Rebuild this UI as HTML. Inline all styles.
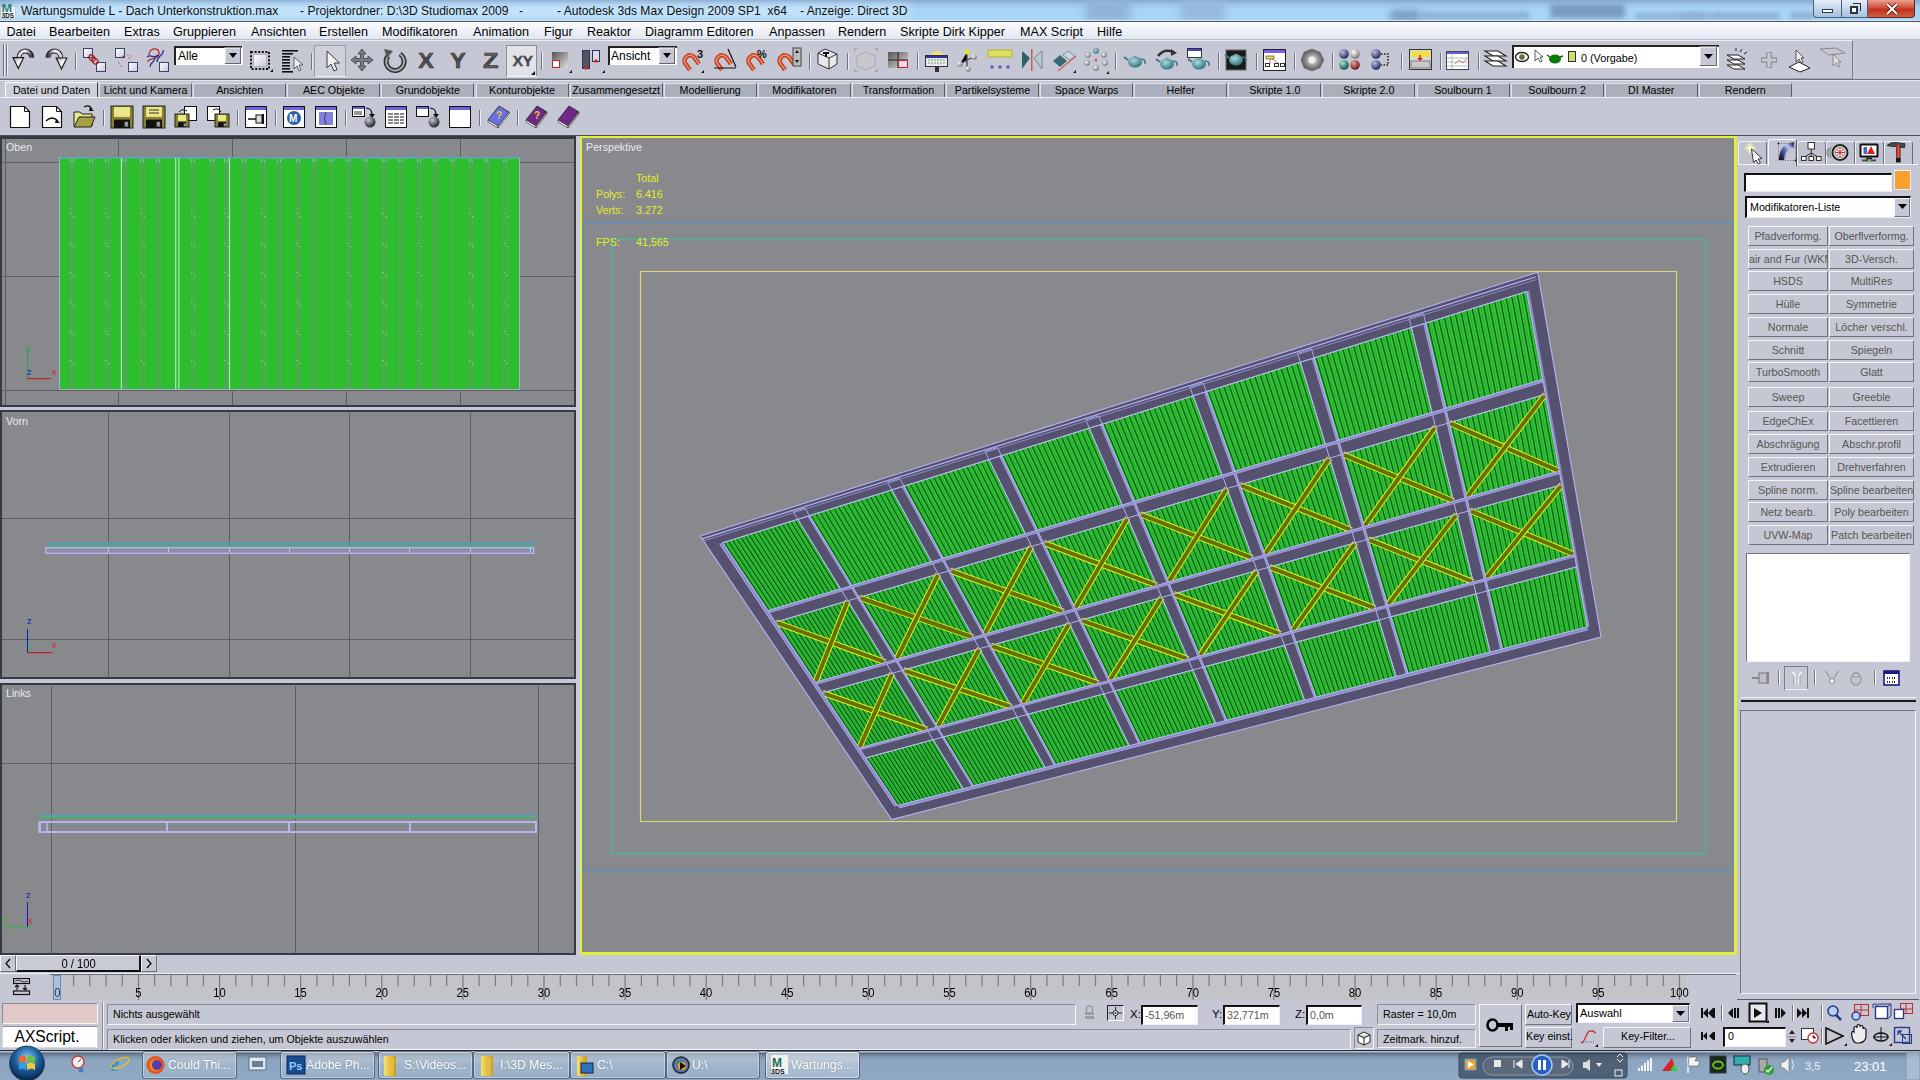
<!DOCTYPE html><html><head><meta charset="utf-8"><style>
*{margin:0;padding:0;box-sizing:border-box}
body{width:1920px;height:1080px;overflow:hidden;background:#c5c8d4;font-family:"Liberation Sans", sans-serif;position:relative}
.t{position:absolute;white-space:pre;line-height:1}
</style></head><body>
<div style="position:absolute;left:0px;top:0px;width:1920px;height:21px;background:linear-gradient(180deg,#84a8d0 0px,#9cc2e6 4px,#a8d4f6 9px,#a8d6f6 18px,#b0d4f0 21px);overflow:hidden;"><div style="position:absolute;left:1085px;top:0px;width:45px;height:21px;background:#8fb3d8;filter:blur(4px);border-radius:3px"></div><div style="position:absolute;left:1180px;top:0px;width:45px;height:21px;background:#95b8dc;filter:blur(4px);border-radius:3px"></div><div style="position:absolute;left:1390px;top:10px;width:30px;height:11px;background:#7d9fc4;filter:blur(3px);border-radius:3px"></div><div style="position:absolute;left:1420px;top:12px;width:110px;height:7px;background:#8aaed4;filter:blur(2.5px);border-radius:3px"></div><div style="position:absolute;left:1550px;top:4px;width:75px;height:14px;background:#7a9cc0;filter:blur(2.5px);border-radius:3px"></div><div style="position:absolute;left:1635px;top:13px;width:70px;height:6px;background:#8eb2d6;filter:blur(2px);border-radius:3px"></div><div style="position:absolute;left:1680px;top:13px;width:40px;height:6px;background:#8eb2d6;filter:blur(2px);border-radius:3px"></div><div style="position:absolute;left:1715px;top:13px;width:65px;height:6px;background:#8aaed4;filter:blur(2px);border-radius:3px"></div><div style="position:absolute;left:1790px;top:12px;width:25px;height:7px;background:#8eb2d6;filter:blur(2px);border-radius:3px"></div><div style="position:absolute;left:10px;top:5px;width:900px;height:12px;background:#cae6fa;filter:blur(5px);border-radius:3px"></div></div>
<div style="position:absolute;left:0px;top:19.5px;width:1920px;height:1px;background:#d4e4f4;"></div>
<div style="position:absolute;left:0px;top:20.5px;width:1920px;height:1px;background:#4a5668;"></div>
<div class="t" style="left:21px;top:4.91px;font-size:12.1px;color:#101010;">Wartungsmulde L - Dach Unterkonstruktion.max</div>
<div class="t" style="left:300px;top:4.91px;font-size:12.1px;color:#101010;">- Projektordner: D:\3D Studiomax 2009</div>
<div class="t" style="left:519px;top:4.91px;font-size:12.1px;color:#101010;">-</div>
<div class="t" style="left:557px;top:4.91px;font-size:12.1px;color:#101010;">- Autodesk 3ds Max Design 2009 SP1  x64</div>
<div class="t" style="left:800px;top:4.91px;font-size:12.1px;color:#101010;">- Anzeige: Direct 3D</div>
<svg style="position:absolute;left:0px;top:0px" width="20" height="20"><rect x="1" y="6.3" width="14.5" height="12" fill="#f4f6f6" stroke="#b8c0c8" stroke-width="0.6"/><text x="1.6" y="11.6" font-size="11.5" font-family="Liberation Sans" fill="#2a7a78" font-weight="bold" textLength="10.6" lengthAdjust="spacingAndGlyphs">M</text><text x="1.8" y="18" font-size="7" font-weight="bold" font-family="Liberation Sans" fill="#111" textLength="12.2" lengthAdjust="spacingAndGlyphs">3DS</text></svg>
<div style="position:absolute;left:1813px;top:0px;width:29px;height:18px;background:linear-gradient(#e4eef8,#c4d6ea 50%,#a8c0dc);border:1px solid #4a5f78;border-top:none;border-radius:0 0 0 4px;"></div>
<div style="position:absolute;left:1822px;top:9px;width:11px;height:4px;background:#fff;border:1px solid #2a3a4c;"></div>
<div style="position:absolute;left:1842px;top:0px;width:26px;height:18px;background:linear-gradient(#e4eef8,#c4d6ea 50%,#a8c0dc);border:1px solid #4a5f78;border-top:none;border-left:none;"></div>
<div style="position:absolute;left:1850px;top:6px;width:8px;height:8px;border:2px solid #2a3440;background:#fff;"></div>
<div style="position:absolute;left:1853px;top:3px;width:8px;height:8px;border:1px solid #2a3440;border-left:none;border-bottom:none;"></div>
<div style="position:absolute;left:1868px;top:0px;width:47px;height:18px;background:linear-gradient(#e8a090,#d05038 45%,#c03020 55%,#d06040);border:1px solid #5a2a28;border-top:none;border-left:none;border-radius:0 0 4px 0;"></div>
<svg style="position:absolute;left:1885px;top:3px" width="14" height="12"><path d="M2,1 L12,11 M12,1 L2,11" stroke="#3a1010" stroke-width="3.4"/><path d="M2,1 L12,11 M12,1 L2,11" stroke="#fff" stroke-width="2"/></svg>
<div style="position:absolute;left:0px;top:21.5px;width:1920px;height:18.5px;background:linear-gradient(#fcfdfe,#eef1f7 50%,#dfe4ee);"></div>
<div style="position:absolute;left:0px;top:39px;width:1920px;height:1px;background:#b8bcc8;"></div>
<div class="t" style="left:6.5px;top:25.86px;font-size:12.6px;color:#000;">Datei</div>
<div class="t" style="left:49px;top:25.86px;font-size:12.6px;color:#000;">Bearbeiten</div>
<div class="t" style="left:124px;top:25.86px;font-size:12.6px;color:#000;">Extras</div>
<div class="t" style="left:173px;top:25.86px;font-size:12.6px;color:#000;">Gruppieren</div>
<div class="t" style="left:251px;top:25.86px;font-size:12.6px;color:#000;">Ansichten</div>
<div class="t" style="left:319px;top:25.86px;font-size:12.6px;color:#000;">Erstellen</div>
<div class="t" style="left:382px;top:25.86px;font-size:12.6px;color:#000;">Modifikatoren</div>
<div class="t" style="left:473px;top:25.86px;font-size:12.6px;color:#000;">Animation</div>
<div class="t" style="left:544px;top:25.86px;font-size:12.6px;color:#000;">Figur</div>
<div class="t" style="left:587px;top:25.86px;font-size:12.6px;color:#000;">Reaktor</div>
<div class="t" style="left:645px;top:25.86px;font-size:12.6px;color:#000;">Diagramm Editoren</div>
<div class="t" style="left:769px;top:25.86px;font-size:12.6px;color:#000;">Anpassen</div>
<div class="t" style="left:838px;top:25.86px;font-size:12.6px;color:#000;">Rendern</div>
<div class="t" style="left:900px;top:25.86px;font-size:12.6px;color:#000;">Skripte Dirk Kipper</div>
<div class="t" style="left:1020px;top:25.86px;font-size:12.6px;color:#000;">MAX Script</div>
<div class="t" style="left:1097px;top:25.86px;font-size:12.6px;color:#000;">Hilfe</div>
<div style="position:absolute;left:0px;top:40px;width:1853px;height:39px;background:#c5c8d4;border-top:1px solid #eceef4;border-right:1px solid #7a7e88;border-bottom:1px solid #a0a4ae;"></div>
<div style="position:absolute;left:0px;top:79px;width:1920px;height:1px;background:#6a6e78;"></div>
<div style="position:absolute;left:0px;top:80px;width:1920px;height:1px;background:#e4e6ee;"></div>
<div style="position:absolute;left:5.0px;top:82px;width:93px;height:17px;background:#cdd0db;border-top:1px solid #fafbff;border-left:1px solid #fafbff;border-right:1px solid #3a3e48;"></div>
<div class="t" style="left:5.0px;top:85.22px;width:93px;text-align:center;font-size:10.7px;color:#000;">Datei und Daten</div>
<div style="position:absolute;left:99.1px;top:83px;width:93px;height:15px;background:#abafbb;border-top:1px solid #dfe2ea;border-left:1px solid #dfe2ea;border-right:1px solid #5a5e68;"></div>
<div class="t" style="left:99.1px;top:85.22px;width:93px;text-align:center;font-size:10.7px;color:#000;">Licht und Kamera</div>
<div style="position:absolute;left:193.2px;top:83px;width:93px;height:15px;background:#abafbb;border-top:1px solid #dfe2ea;border-left:1px solid #dfe2ea;border-right:1px solid #5a5e68;"></div>
<div class="t" style="left:193.2px;top:85.22px;width:93px;text-align:center;font-size:10.7px;color:#000;">Ansichten</div>
<div style="position:absolute;left:287.29999999999995px;top:83px;width:93px;height:15px;background:#abafbb;border-top:1px solid #dfe2ea;border-left:1px solid #dfe2ea;border-right:1px solid #5a5e68;"></div>
<div class="t" style="left:287.29999999999995px;top:85.22px;width:93px;text-align:center;font-size:10.7px;color:#000;">AEC Objekte</div>
<div style="position:absolute;left:381.4px;top:83px;width:93px;height:15px;background:#abafbb;border-top:1px solid #dfe2ea;border-left:1px solid #dfe2ea;border-right:1px solid #5a5e68;"></div>
<div class="t" style="left:381.4px;top:85.22px;width:93px;text-align:center;font-size:10.7px;color:#000;">Grundobjekte</div>
<div style="position:absolute;left:475.5px;top:83px;width:93px;height:15px;background:#abafbb;border-top:1px solid #dfe2ea;border-left:1px solid #dfe2ea;border-right:1px solid #5a5e68;"></div>
<div class="t" style="left:475.5px;top:85.22px;width:93px;text-align:center;font-size:10.7px;color:#000;">Konturobjekte</div>
<div style="position:absolute;left:569.5999999999999px;top:83px;width:93px;height:15px;background:#abafbb;border-top:1px solid #dfe2ea;border-left:1px solid #dfe2ea;border-right:1px solid #5a5e68;"></div>
<div class="t" style="left:569.5999999999999px;top:85.22px;width:93px;text-align:center;font-size:10.7px;color:#000;">Zusammengesetzt</div>
<div style="position:absolute;left:663.6999999999999px;top:83px;width:93px;height:15px;background:#abafbb;border-top:1px solid #dfe2ea;border-left:1px solid #dfe2ea;border-right:1px solid #5a5e68;"></div>
<div class="t" style="left:663.6999999999999px;top:85.22px;width:93px;text-align:center;font-size:10.7px;color:#000;">Modellierung</div>
<div style="position:absolute;left:757.8px;top:83px;width:93px;height:15px;background:#abafbb;border-top:1px solid #dfe2ea;border-left:1px solid #dfe2ea;border-right:1px solid #5a5e68;"></div>
<div class="t" style="left:757.8px;top:85.22px;width:93px;text-align:center;font-size:10.7px;color:#000;">Modifikatoren</div>
<div style="position:absolute;left:851.9px;top:83px;width:93px;height:15px;background:#abafbb;border-top:1px solid #dfe2ea;border-left:1px solid #dfe2ea;border-right:1px solid #5a5e68;"></div>
<div class="t" style="left:851.9px;top:85.22px;width:93px;text-align:center;font-size:10.7px;color:#000;">Transformation</div>
<div style="position:absolute;left:946.0px;top:83px;width:93px;height:15px;background:#abafbb;border-top:1px solid #dfe2ea;border-left:1px solid #dfe2ea;border-right:1px solid #5a5e68;"></div>
<div class="t" style="left:946.0px;top:85.22px;width:93px;text-align:center;font-size:10.7px;color:#000;">Partikelsysteme</div>
<div style="position:absolute;left:1040.1px;top:83px;width:93px;height:15px;background:#abafbb;border-top:1px solid #dfe2ea;border-left:1px solid #dfe2ea;border-right:1px solid #5a5e68;"></div>
<div class="t" style="left:1040.1px;top:85.22px;width:93px;text-align:center;font-size:10.7px;color:#000;">Space Warps</div>
<div style="position:absolute;left:1134.1999999999998px;top:83px;width:93px;height:15px;background:#abafbb;border-top:1px solid #dfe2ea;border-left:1px solid #dfe2ea;border-right:1px solid #5a5e68;"></div>
<div class="t" style="left:1134.1999999999998px;top:85.22px;width:93px;text-align:center;font-size:10.7px;color:#000;">Helfer</div>
<div style="position:absolute;left:1228.3px;top:83px;width:93px;height:15px;background:#abafbb;border-top:1px solid #dfe2ea;border-left:1px solid #dfe2ea;border-right:1px solid #5a5e68;"></div>
<div class="t" style="left:1228.3px;top:85.22px;width:93px;text-align:center;font-size:10.7px;color:#000;">Skripte 1.0</div>
<div style="position:absolute;left:1322.3999999999999px;top:83px;width:93px;height:15px;background:#abafbb;border-top:1px solid #dfe2ea;border-left:1px solid #dfe2ea;border-right:1px solid #5a5e68;"></div>
<div class="t" style="left:1322.3999999999999px;top:85.22px;width:93px;text-align:center;font-size:10.7px;color:#000;">Skripte 2.0</div>
<div style="position:absolute;left:1416.5px;top:83px;width:93px;height:15px;background:#abafbb;border-top:1px solid #dfe2ea;border-left:1px solid #dfe2ea;border-right:1px solid #5a5e68;"></div>
<div class="t" style="left:1416.5px;top:85.22px;width:93px;text-align:center;font-size:10.7px;color:#000;">Soulbourn 1</div>
<div style="position:absolute;left:1510.6px;top:83px;width:93px;height:15px;background:#abafbb;border-top:1px solid #dfe2ea;border-left:1px solid #dfe2ea;border-right:1px solid #5a5e68;"></div>
<div class="t" style="left:1510.6px;top:85.22px;width:93px;text-align:center;font-size:10.7px;color:#000;">Soulbourn 2</div>
<div style="position:absolute;left:1604.6999999999998px;top:83px;width:93px;height:15px;background:#abafbb;border-top:1px solid #dfe2ea;border-left:1px solid #dfe2ea;border-right:1px solid #5a5e68;"></div>
<div class="t" style="left:1604.6999999999998px;top:85.22px;width:93px;text-align:center;font-size:10.7px;color:#000;">DI Master</div>
<div style="position:absolute;left:1698.8px;top:83px;width:93px;height:15px;background:#abafbb;border-top:1px solid #dfe2ea;border-left:1px solid #dfe2ea;border-right:1px solid #5a5e68;"></div>
<div class="t" style="left:1698.8px;top:85.22px;width:93px;text-align:center;font-size:10.7px;color:#000;">Rendern</div>
<div style="position:absolute;left:0px;top:97px;width:1920px;height:1px;background:#f0f2f6;"></div>
<div style="position:absolute;left:0px;top:98px;width:1920px;height:37px;background:#c5c8d4;"></div>
<div style="position:absolute;left:0px;top:135px;width:1920px;height:1px;background:#4a4e58;"></div>
<svg style="position:absolute;left:0;top:0" width="1920" height="140"><defs>
<linearGradient id="gmet" x1="0" y1="0" x2="0" y2="1"><stop offset="0" stop-color="#f4f4f6"/><stop offset="0.5" stop-color="#9a9ca2"/><stop offset="1" stop-color="#3a3c40"/></linearGradient>
<linearGradient id="gmet2" x1="0" y1="0" x2="1" y2="1"><stop offset="0" stop-color="#555"/><stop offset="1" stop-color="#ddd"/></linearGradient>
<linearGradient id="gbox" x1="0" y1="0" x2="1" y2="1"><stop offset="0" stop-color="#fff"/><stop offset="1" stop-color="#c8c8d8"/></linearGradient>
<radialGradient id="gtea" cx="0.4" cy="0.35" r="0.7"><stop offset="0" stop-color="#a8dcdc"/><stop offset="1" stop-color="#2e6a78"/></radialGradient>
<radialGradient id="gsph" cx="0.35" cy="0.3" r="0.75"><stop offset="0" stop-color="#c8c8d0"/><stop offset="1" stop-color="#1e1e28"/></radialGradient>
<radialGradient id="gblu" cx="0.35" cy="0.3" r="0.75"><stop offset="0" stop-color="#b8c0e8"/><stop offset="1" stop-color="#1a2050"/></radialGradient>
<radialGradient id="gwht" cx="0.35" cy="0.3" r="0.75"><stop offset="0" stop-color="#fff"/><stop offset="1" stop-color="#707070"/></radialGradient>
<radialGradient id="ggrn" cx="0.35" cy="0.3" r="0.75"><stop offset="0" stop-color="#a0e0d0"/><stop offset="1" stop-color="#0a4838"/></radialGradient>
<radialGradient id="gred" cx="0.35" cy="0.3" r="0.75"><stop offset="0" stop-color="#f0a0a0"/><stop offset="1" stop-color="#601010"/></radialGradient>
<radialGradient id="gap" cx="0.5" cy="0.5" r="0.5"><stop offset="0" stop-color="#fff"/><stop offset="0.5" stop-color="#999"/><stop offset="1" stop-color="#555"/></radialGradient>
</defs><rect x="3" y="44" width="1" height="32" fill="#6a6e78"/><rect x="4" y="44" width="1" height="32" fill="#eef"/><rect x="6" y="44" width="1" height="32" fill="#6a6e78"/><rect x="7" y="44" width="1" height="32" fill="#eef"/><linearGradient id="garc" x1="0" y1="0" x2="1" y2="0"><stop offset="0" stop-color="#d8d8dc"/><stop offset="0.5" stop-color="#f4f4f6"/><stop offset="1" stop-color="#3a3a40"/></linearGradient><linearGradient id="garc2" x1="0" y1="0" x2="1" y2="0"><stop offset="0" stop-color="#3a3a40"/><stop offset="0.5" stop-color="#f4f4f6"/><stop offset="1" stop-color="#d8d8dc"/></linearGradient><linearGradient id="ghead" x1="0" y1="0" x2="1" y2="1"><stop offset="0" stop-color="#9a9aa0"/><stop offset="0.5" stop-color="#fafafa"/><stop offset="1" stop-color="#b0b0b4"/></linearGradient><path d="M31.8,57.5 A6.4,6.4 0 0 0 19,57.5" stroke="#151515" stroke-width="5" fill="none"/><path d="M31.8,57.5 A6.4,6.4 0 0 0 19,57.5" stroke="url(#garc)" stroke-width="3" fill="none"/><polygon points="13,57.6 23.6,57.6 18.3,68.6" fill="url(#ghead)" stroke="#151515" stroke-width="1.1"/><path d="M48,57.5 A6.4,6.4 0 0 1 60.8,57.5" stroke="#151515" stroke-width="5" fill="none"/><path d="M48,57.5 A6.4,6.4 0 0 1 60.8,57.5" stroke="url(#garc2)" stroke-width="3" fill="none"/><polygon points="56.2,58 66.8,58 61.5,69" fill="url(#ghead)" stroke="#151515" stroke-width="1.1"/><rect x="75" y="53" width="1" height="17" fill="#70747e"/><rect x="76" y="53" width="1" height="17" fill="#eceef4"/><rect x="83.5" y="48.5" width="9" height="9" fill="url(#gbox)" stroke="#3a4070"/><rect x="96.5" y="62.5" width="9" height="9" fill="url(#gbox)" stroke="#3a4070"/><ellipse cx="92" cy="58" rx="2.5" ry="3.5" transform="rotate(-45 92 58)" fill="none" stroke="#b02020" stroke-width="1.3"/><ellipse cx="95" cy="61" rx="2.5" ry="3.5" transform="rotate(-45 95 61)" fill="none" stroke="#b02020" stroke-width="1.3"/><rect x="115.5" y="48.5" width="9" height="9" fill="url(#gbox)" stroke="#3a4070"/><rect x="128.5" y="62.5" width="9" height="9" fill="url(#gbox)" stroke="#3a4070"/><path d="M122,58 l2,-2" stroke="#b02020" stroke-width="1.5"/><circle cx="119" cy="63" r="0.7" fill="#c05050"/><circle cx="121" cy="66" r="0.7" fill="#c05050"/><circle cx="128" cy="55" r="0.7" fill="#c05050"/><circle cx="131" cy="56" r="0.7" fill="#c05050"/><circle cx="129" cy="58" r="0.7" fill="#c05050"/><path d="M149,55 C149,47 160,47 159,54 C158,60 147,58 148,62" stroke="#c02020" stroke-width="1.3" fill="none"/><path d="M147,57 C151,53 154,60 158,55 M150,67 C150,62 155,62 155,58 M157,62 C157,55 165,55 163,50" stroke="#2030a0" stroke-width="1.3" fill="none"/><rect x="159.5" y="62.5" width="9" height="9" fill="url(#gbox)" stroke="#3a4070"/><rect x="174" y="46" width="69" height="19" fill="#fff"/><rect x="174" y="46" width="69" height="2" fill="#222"/><rect x="174" y="46" width="2" height="19" fill="#222"/><rect x="242" y="46" width="1" height="19" fill="#eef"/><rect x="225" y="48" width="16" height="16" fill="#c5c8d4" stroke="#fff"/><rect x="240" y="48" width="1" height="16" fill="#666"/><rect x="225" y="63" width="16" height="1" fill="#666"/><polygon points="229,53 237,53 233,58" fill="#000"/><text x="178" y="60" font-size="12" font-family="Liberation Sans" fill="#000">Alle</text><rect x="251" y="52" width="18" height="17" fill="none" stroke="#111" stroke-width="2" stroke-dasharray="2,1.6"/><rect x="253.5" y="54.5" width="13" height="12" fill="url(#gbox)" stroke="#b0b0c0"/><polygon points="273,72 270,72 273,69" fill="#111"/><rect x="282" y="50" width="16" height="1.6" fill="#111"/><rect x="282" y="53" width="11" height="1.6" fill="#111"/><rect x="282" y="56" width="8" height="1.6" fill="#111"/><rect x="282" y="59" width="8" height="1.6" fill="#111"/><rect x="282" y="62" width="8" height="1.6" fill="#111"/><rect x="282" y="65" width="8" height="1.6" fill="#111"/><rect x="282" y="68" width="8" height="1.6" fill="#111"/><rect x="282" y="71" width="11" height="1.6" fill="#111"/><path d="M294,57 l0,12 3,-3 2,5 2,-1 -2,-5 4,0 z" fill="#eee" stroke="#444" stroke-width="0.8"/><rect x="311" y="53" width="1" height="17" fill="#70747e"/><rect x="312" y="53" width="1" height="17" fill="#eceef4"/><rect x="314.5" y="45.5" width="31" height="31" fill="#cfd1da" stroke="#9a9ea8"/><rect x="315" y="76" width="31" height="1" fill="#f4f4f8"/><path d="M327,51 l0,17 4,-4 3,7 3,-1.5 -3,-6.5 5.5,0 z" fill="#f2f2f4" stroke="#3a3a40" stroke-width="1"/><path d="M362,49 l4,5 h-2.5 v4.5 h4.5 v-2.5 l5,4 -5,4 v-2.5 h-4.5 v4.5 h2.5 l-4,5 -4,-5 h2.5 v-4.5 h-4.5 v2.5 l-5,-4 5,-4 v2.5 h4.5 v-4.5 h-2.5 z" fill="#7a7c82" stroke="#3a3c40" stroke-width="0.8"/><path d="M388,56 A9,9 0 1 0 400,54" stroke="#2e3034" stroke-width="5" fill="none"/><path d="M388,56 A9,9 0 1 0 400,54" stroke="#a8aab0" stroke-width="2" fill="none"/><polygon points="384,49 393,51 387,58" fill="#555"/><linearGradient id="gxyz" x1="0" y1="0" x2="0" y2="1"><stop offset="0" stop-color="#8a8c92"/><stop offset="0.45" stop-color="#44464c"/><stop offset="1" stop-color="#6a6c72"/></linearGradient><text x="418.3" y="67.7" font-size="22.4" font-weight="bold" font-family="Liberation Sans" fill="url(#gxyz)" stroke="#2a2a2e" stroke-width="0.6" textLength="15.4" lengthAdjust="spacingAndGlyphs">X</text><text x="450.3" y="67.7" font-size="22.4" font-weight="bold" font-family="Liberation Sans" fill="url(#gxyz)" stroke="#2a2a2e" stroke-width="0.6" textLength="15.4" lengthAdjust="spacingAndGlyphs">Y</text><text x="483" y="67.7" font-size="22.4" font-weight="bold" font-family="Liberation Sans" fill="url(#gxyz)" stroke="#2a2a2e" stroke-width="0.6" textLength="15.4" lengthAdjust="spacingAndGlyphs">Z</text><rect x="506.5" y="45.5" width="30" height="31" fill="#e2e3e9" stroke="#8a8e98"/><rect x="507" y="76" width="30" height="1" fill="#f8f8fc"/><text x="512.7" y="66" font-size="15" font-weight="bold" font-family="Liberation Sans" fill="url(#gxyz)" stroke="#2a2a2e" stroke-width="0.4" textLength="20.3" lengthAdjust="spacingAndGlyphs">XY</text><polygon points="535,75 531,75 535,71" fill="#111"/><rect x="541" y="53" width="1" height="17" fill="#70747e"/><rect x="542" y="53" width="1" height="17" fill="#eceef4"/><rect x="552" y="52" width="16" height="16" fill="url(#gmet2)"/><rect x="552.5" y="60.5" width="7" height="7" fill="#fff" stroke="#d02020"/><polygon points="572,73 569,73 572,70" fill="#111"/><rect x="582.5" y="50.5" width="7" height="18" fill="#555" stroke="#2a3070"/><circle cx="586" cy="68" r="1.8" fill="#e02020"/><rect x="592.5" y="50.5" width="7" height="11" fill="#ddd" stroke="#2a3070"/><circle cx="596" cy="61" r="1.8" fill="#e02020"/><polygon points="605,73 602,73 605,70" fill="#111"/><rect x="608" y="46" width="69" height="19" fill="#fff"/><rect x="608" y="46" width="69" height="2" fill="#222"/><rect x="608" y="46" width="2" height="19" fill="#222"/><rect x="659" y="48" width="16" height="16" fill="#c5c8d4" stroke="#fff"/><rect x="674" y="48" width="1" height="16" fill="#666"/><rect x="659" y="63" width="16" height="1" fill="#666"/><polygon points="663,53 671,53 667,58" fill="#000"/><text x="611" y="60" font-size="12" font-family="Liberation Sans" fill="#000">Ansicht</text><path d="M690,70 L685,63 A5.5,5.5 0 0 1 694,57 L699,64" stroke="#c84020" stroke-width="4.5" fill="none" stroke-linecap="butt"/><path d="M690,70 L685,63 A5.5,5.5 0 0 1 694,57 L699,64" stroke="#f0a080" stroke-width="1.2" fill="none"/><text x="697" y="58" font-size="11" font-weight="bold" font-family="Liberation Sans" fill="#111">3</text><polygon points="704,73 701,73 704,70" fill="#111"/><path d="M722,70 L717,63 A5.5,5.5 0 0 1 726,57 L731,64" stroke="#c84020" stroke-width="4.5" fill="none" stroke-linecap="butt"/><path d="M722,70 L717,63 A5.5,5.5 0 0 1 726,57 L731,64" stroke="#f0a080" stroke-width="1.2" fill="none"/><path d="M714,68 h22 M728,49 l8,18" stroke="#111" stroke-width="1.2"/><path d="M754,70 L749,63 A5.5,5.5 0 0 1 758,57 L763,64" stroke="#c84020" stroke-width="4.5" fill="none" stroke-linecap="butt"/><path d="M754,70 L749,63 A5.5,5.5 0 0 1 758,57 L763,64" stroke="#f0a080" stroke-width="1.2" fill="none"/><text x="757" y="58" font-size="11" font-weight="bold" font-family="Liberation Sans" fill="#111">%</text><path d="M785,70 L780,63 A5.5,5.5 0 0 1 789,57 L794,64" stroke="#c84020" stroke-width="4.5" fill="none" stroke-linecap="butt"/><path d="M785,70 L780,63 A5.5,5.5 0 0 1 789,57 L794,64" stroke="#f0a080" stroke-width="1.2" fill="none"/><rect x="793" y="48" width="8" height="18" fill="#bbb" stroke="#444"/><polygon points="795,53 799,53 797,50" fill="#111"/><polygon points="795,60 799,60 797,63" fill="#111"/><rect x="809" y="53" width="1" height="17" fill="#70747e"/><rect x="810" y="53" width="1" height="17" fill="#eceef4"/><path d="M818,53 l7,-4 l12,5 v10 l-8,5 l-11,-5 z" fill="#e8e8ec" stroke="#333"/><path d="M818,53 l11,5 l8,-4 M829,58 v11" stroke="#333" fill="none"/><path d="M823,53 h6 M826,53 v4" stroke="#111" stroke-width="2"/><rect x="847" y="53" width="1" height="17" fill="#70747e"/><rect x="848" y="53" width="1" height="17" fill="#eceef4"/><path d="M857,56 l9,-4 l9,4 v10 l-9,4 l-9,-4 z" fill="#c8c8cc" stroke="#a8a8b0"/><polygon points="854,48 858,48 854,52" fill="#aaa"/><polygon points="878,48 874,48 878,52" fill="#aaa"/><polygon points="854,72 858,72 854,68" fill="#aaa"/><polygon points="878,72 874,72 878,68" fill="#aaa"/><rect x="888" y="52" width="20" height="16" fill="url(#gmet2)"/><path d="M898,52 v16 M888,60 h20" stroke="#222"/><rect x="898.5" y="60.5" width="9" height="7" fill="#e0e0f0" stroke="#d02020"/><rect x="917" y="53" width="1" height="17" fill="#70747e"/><rect x="918" y="53" width="1" height="17" fill="#eceef4"/><ellipse cx="937" cy="55" rx="6" ry="4" fill="#f0e080"/><rect x="925.5" y="55.5" width="22" height="11" fill="#e8e8f0" stroke="#333"/><rect x="926" y="56" width="21" height="2" fill="#3030a0"/><path d="M928,60 h17 M928,63 h17" stroke="#6a6" stroke-dasharray="2,1"/><rect x="935" y="67" width="4" height="5" fill="#333"/><path d="M967,52 v8 l-7,4 M967,60 l7,-3 M967,60 v9" stroke="#444" stroke-width="1.3"/><circle cx="967" cy="52" r="2.5" fill="#e8e020"/><circle cx="960" cy="64" r="2.8" fill="url(#gwht)"/><circle cx="974" cy="57" r="2.8" fill="url(#gwht)"/><circle cx="968" cy="69" r="2.8" fill="url(#gwht)"/><rect x="988" y="50" width="24" height="7" fill="#e0e060" stroke="#b0b040"/><circle cx="992" cy="67" r="1.8" fill="#6060c0"/><circle cx="1000" cy="67" r="1.8" fill="#6060c0"/><circle cx="1008" cy="67" r="1.8" fill="#6060c0"/><polygon points="1022,51 1030,58 1022,69" fill="#2e6068"/><polygon points="1042,51 1034,58 1042,69" fill="#b8c8d0" stroke="#406070" stroke-width="0.6"/><rect x="1031" y="49" width="1.5" height="22" fill="#c06060"/><polygon points="1053,61 1060,55 1067,61 1060,67" fill="#3a6a70"/><polygon points="1063,55 1068,51 1075,56 1070,60" fill="#c8d8e0" stroke="#507080" stroke-width="0.6"/><path d="M1058,71 l18,-15" stroke="#d06060" stroke-width="1.2"/><polygon points="1076,73 1073,73 1076,70" fill="#111"/><circle cx="1096" cy="51" r="2.8" fill="url(#gtea)" stroke="#888" stroke-width="0.4"/><circle cx="1088" cy="55" r="2.8" fill="url(#gwht)" stroke="#888" stroke-width="0.4"/><circle cx="1104" cy="55" r="2.8" fill="url(#gwht)" stroke="#888" stroke-width="0.4"/><circle cx="1087" cy="63" r="2.8" fill="url(#gwht)" stroke="#888" stroke-width="0.4"/><circle cx="1105" cy="63" r="2.8" fill="url(#gwht)" stroke="#888" stroke-width="0.4"/><circle cx="1096" cy="68" r="2.8" fill="url(#gwht)" stroke="#888" stroke-width="0.4"/><circle cx="1096" cy="60" r="1.5" fill="#d06060"/><polygon points="1109,74 1106,74 1109,71" fill="#111"/><rect x="1115" y="53" width="1" height="17" fill="#70747e"/><rect x="1116" y="53" width="1" height="17" fill="#eceef4"/><ellipse cx="1135" cy="62" rx="7" ry="5.5" fill="url(#gtea)"/><path d="M1128,60 l-4,-3" stroke="#3a7a88" stroke-width="2"/><path d="M1141,59 q5,0 4,5" stroke="#3a7a88" stroke-width="1.6" fill="none"/><ellipse cx="1135" cy="57" rx="2" ry="1.2" fill="#6aa8b0"/><ellipse cx="1167" cy="64" rx="7" ry="5.5" fill="url(#gtea)"/><path d="M1160,62 l-4,-3" stroke="#3a7a88" stroke-width="2"/><path d="M1173,61 q5,0 4,5" stroke="#3a7a88" stroke-width="1.6" fill="none"/><ellipse cx="1167" cy="59" rx="2" ry="1.2" fill="#6aa8b0"/><path d="M1158,56 q6,-8 15,-4" stroke="#333" stroke-width="2.5" fill="none"/><polygon points="1171,49 1177,53 1171,56" fill="#333"/><rect x="1187.5" y="48.5" width="14" height="9" fill="#fff" stroke="#333"/><rect x="1188" y="49" width="13" height="2" fill="#4040c0"/><ellipse cx="1199" cy="64" rx="7" ry="5.5" fill="url(#gtea)"/><path d="M1192,62 l-4,-3" stroke="#3a7a88" stroke-width="2"/><path d="M1205,61 q5,0 4,5" stroke="#3a7a88" stroke-width="1.6" fill="none"/><ellipse cx="1199" cy="59" rx="2" ry="1.2" fill="#6aa8b0"/><rect x="1218" y="53" width="1" height="17" fill="#70747e"/><rect x="1219" y="53" width="1" height="17" fill="#eceef4"/><rect x="1226" y="50" width="20" height="20" fill="#1a1a1a" stroke="#666"/><ellipse cx="1236" cy="60" rx="7" ry="5.5" fill="url(#gtea)" transform="scale(1)"/><path d="M1229,58 l-4,-3" stroke="#3a7a88" stroke-width="2"/><path d="M1242,57 q5,0 4,5" stroke="#3a7a88" stroke-width="1.6" fill="none"/><ellipse cx="1236" cy="55" rx="2" ry="1.2" fill="#6aa8b0"/><rect x="1256" y="53" width="1" height="17" fill="#70747e"/><rect x="1257" y="53" width="1" height="17" fill="#eceef4"/><rect x="1263.5" y="49.5" width="22" height="21" fill="#fff" stroke="#222"/><rect x="1264" y="50" width="21" height="3" fill="#7a60e0"/><rect x="1266" y="56" width="8" height="3" fill="#e8e040" stroke="#333" stroke-width="0.6"/><path d="M1270,59 v4 M1272,59 l6,4" stroke="#a06060" stroke-width="0.8"/><rect x="1265.5" y="63.5" width="4" height="3" fill="none" stroke="#333"/><rect x="1274.5" y="63.5" width="4" height="3" fill="none" stroke="#333"/><rect x="1280.5" y="63.5" width="4" height="3" fill="none" stroke="#333"/><rect x="1294" y="53" width="1" height="17" fill="#70747e"/><rect x="1295" y="53" width="1" height="17" fill="#eceef4"/><polygon points="1312,49 1320,52 1324,60 1320,68 1312,71 1304,68 1301,60 1304,52" fill="url(#gap)" stroke="#777" stroke-width="0.6"/><circle cx="1312" cy="60" r="3.5" fill="#eee"/><rect x="1332" y="53" width="1" height="17" fill="#70747e"/><rect x="1333" y="53" width="1" height="17" fill="#eceef4"/><circle cx="1344" cy="54" r="4.8" fill="url(#gblu)"/><circle cx="1355" cy="54" r="4.8" fill="url(#gwht)"/><circle cx="1344" cy="65" r="4.8" fill="url(#ggrn)"/><circle cx="1355" cy="65" r="4.8" fill="url(#gred)"/><circle cx="1376" cy="54" r="4.8" fill="url(#gblu)"/><circle cx="1376" cy="65" r="4.8" fill="url(#gblu)"/><path d="M1381,54 h7 v11 h-7" stroke="#222" stroke-width="1.6" stroke-dasharray="1.6,1.4" fill="none"/><rect x="1401" y="53" width="1" height="17" fill="#70747e"/><rect x="1402" y="53" width="1" height="17" fill="#eceef4"/><rect x="1409.5" y="49.5" width="22" height="20" fill="#d8d8dc" stroke="#333"/><rect x="1411" y="51" width="19" height="6" fill="#f0e040"/><rect x="1411" y="61" width="19" height="7" fill="#c8c8cc" stroke="#444" stroke-width="0.6"/><path d="M1420,55 v4" stroke="#d02020" stroke-width="1.5"/><polygon points="1417,58 1423,58 1420,61" fill="#d02020"/><rect x="1440" y="53" width="1" height="17" fill="#70747e"/><rect x="1441" y="53" width="1" height="17" fill="#eceef4"/><rect x="1446.5" y="51.5" width="22" height="18" fill="#fff" stroke="#445"/><rect x="1447" y="52" width="21" height="2" fill="#6060d0"/><path d="M1447,58 h21 M1447,62 h21 M1447,66 h21 M1452,54 v15" stroke="#8aa" stroke-width="0.7"/><path d="M1455,64 l4,-4 l4,3 l4,-5" stroke="#d05050" stroke-width="0.8" fill="none"/><rect x="1478" y="53" width="1" height="17" fill="#70747e"/><rect x="1479" y="53" width="1" height="17" fill="#eceef4"/><polygon points="1485,51 1498,51 1506,56 1493,56" fill="#fff" stroke="#222" stroke-width="1.1" transform="translate(0,0)"/><polygon points="1485,56 1498,56 1506,61 1493,61" fill="#fff" stroke="#222" stroke-width="1.1" transform="translate(0,0)"/><polygon points="1485,61 1498,61 1506,66 1493,66" fill="#fff" stroke="#222" stroke-width="1.1" transform="translate(0,0)"/><rect x="1512" y="45" width="207" height="23" fill="#fff"/><rect x="1512" y="45" width="207" height="2" fill="#222"/><rect x="1512" y="45" width="2" height="23" fill="#222"/><rect x="1700" y="47" width="17" height="19" fill="#c5c8d4" stroke="#fff"/><rect x="1716" y="47" width="1" height="19" fill="#666"/><rect x="1700" y="65" width="17" height="1" fill="#666"/><polygon points="1704,54 1713,54 1708.5,59" fill="#000"/><ellipse cx="1522" cy="57" rx="6.5" ry="4.5" fill="#fff" stroke="#222" stroke-width="1.4"/><circle cx="1522" cy="57" r="2.8" fill="#6a6a40"/><path d="M1535,50 v11 l3,-3 2,4 2,-1 -2,-4 3,0 z" fill="#fff" stroke="#333" stroke-width="0.8"/><ellipse cx="1555" cy="59" rx="6" ry="4.5" fill="#0a7a0a"/><path d="M1550,57 l-3,-2 M1560,57 l3,-1" stroke="#0a6a0a" stroke-width="1.5"/><rect x="1568.5" y="51.5" width="7" height="10" fill="#c8e070" stroke="#333"/><text x="1581" y="61.5" font-size="10.8" font-family="Liberation Sans" fill="#000">0 (Vorgabe)</text><polygon points="1727,55 1738,55 1745,59 1734,59" fill="#fff" stroke="#222" stroke-width="1"/><polygon points="1727,60 1738,60 1745,64 1734,64" fill="#fff" stroke="#222" stroke-width="1"/><polygon points="1727,65 1738,65 1745,69 1734,69" fill="#fff" stroke="#222" stroke-width="1"/><path d="M1740,52 l2,-3 M1744,54 l3,-2 M1736,51 l0,-3" stroke="#222"/><path d="M1761,60 h16 M1769,52 v16" stroke="#8a8c94" stroke-width="5.5"/><path d="M1761.8,60 h14.4 M1769,52.8 v14.4" stroke="#c8cad2" stroke-width="3.2"/><polygon points="1789,67 1799,62 1810,68 1800,72" fill="#fff" stroke="#222"/><path d="M1796,50 v12 l3,-3 2,4 2,-1 -2,-4 3,0 z" fill="#eee" stroke="#333" stroke-width="0.8"/><polygon points="1820,49 1836,48 1845,53 1829,55" fill="none" stroke="#888"/><path d="M1833,54 v12 l3,-3 2,4 2,-1 -2,-4 3,0 z" fill="#ddd" stroke="#777" stroke-width="0.8"/><path d="M10.5,106.5 h14 l5,5 v16 h-19 z" fill="#fff" stroke="#111" stroke-width="1.2"/><path d="M24.5,106.5 v5 h5" fill="none" stroke="#111"/><path d="M42.5,106.5 h14 l5,5 v16 h-19 z" fill="#fff" stroke="#111" stroke-width="1.2"/><path d="M56.5,106.5 v5 h5" fill="none" stroke="#111"/><path d="M46,121 q6,-6 12,0" stroke="#111" stroke-width="1.2" fill="none"/><polygon points="56,119 60,123 55,123" fill="#111"/><path d="M74,112 h6 l2,2 h10 v12 h-18 z" fill="#e8e490" stroke="#222"/><path d="M74,127 l5,-10 h16 l-4,10 z" fill="#a8a040" stroke="#222"/><path d="M84,107 q5,-3 8,2" stroke="#111" stroke-width="1.2" fill="none"/><polygon points="90,107 94,111 89,111" fill="#111"/><rect x="103" y="110" width="1" height="16" fill="#70747e"/><rect x="104" y="110" width="1" height="16" fill="#eceef4"/><rect x="111" y="106" width="22" height="22" fill="#8a8230" stroke="#222"/><rect x="114" y="107" width="16" height="9.9" fill="#ece68a"/><rect x="114" y="119.6" width="16" height="8.4" fill="#111"/><rect x="124.6" y="121.8" width="3.5" height="4.8" fill="#999"/><rect x="143" y="106" width="22" height="22" fill="#8a8230" stroke="#222"/><rect x="146" y="107" width="16" height="9.9" fill="#ece68a"/><rect x="146" y="119.6" width="16" height="8.4" fill="#111"/><rect x="156.6" y="121.8" width="3.5" height="4.8" fill="#999"/><path d="M149,110 h10 M149,113 h10" stroke="#333"/><rect x="184.5" y="106.5" width="12" height="14" fill="#fff" stroke="#111"/><path d="M179,112 q3,-4 8,-1" stroke="#111" fill="none"/><rect x="175" y="114" width="14" height="13" fill="#8a8230" stroke="#222"/><rect x="178" y="115" width="8" height="5.9" fill="#ece68a"/><rect x="178" y="122.1" width="8" height="4.9" fill="#111"/><rect x="183.7" y="123.4" width="2.2" height="2.9" fill="#999"/><rect x="207.5" y="106.5" width="12" height="14" fill="#fff" stroke="#111"/><path d="M213,110 q5,-3 8,2" stroke="#111" fill="none"/><rect x="215" y="114" width="14" height="13" fill="#8a8230" stroke="#222"/><rect x="218" y="115" width="8" height="5.9" fill="#ece68a"/><rect x="218" y="122.1" width="8" height="4.9" fill="#111"/><rect x="223.7" y="123.4" width="2.2" height="2.9" fill="#999"/><rect x="237" y="110" width="1" height="16" fill="#70747e"/><rect x="238" y="110" width="1" height="16" fill="#eceef4"/><rect x="245.5" y="106.5" width="21" height="21" fill="#fff" stroke="#111"/><rect x="246" y="107" width="20" height="3" fill="#7060e0"/><path d="M248,119 h8" stroke="#111" stroke-width="1.5"/><rect x="256" y="115" width="6" height="8" fill="#ddd" stroke="#111"/><rect x="262" y="114" width="2" height="10" fill="#111"/><rect x="275" y="110" width="1" height="16" fill="#70747e"/><rect x="276" y="110" width="1" height="16" fill="#eceef4"/><rect x="283.5" y="106.5" width="21" height="21" fill="#fff" stroke="#111"/><rect x="284" y="107" width="20" height="3" fill="#7060e0"/><circle cx="294" cy="118" r="7" fill="#2a60a8"/><text x="289" y="122" font-size="10" font-weight="bold" font-family="Liberation Sans" fill="#fff">M</text><rect x="315.5" y="106.5" width="21" height="21" fill="#fff" stroke="#111"/><rect x="316" y="107" width="20" height="3" fill="#7060e0"/><rect x="319" y="112" width="14" height="13" fill="#8080e0"/><path d="M326,112 q-3,6 0,13" stroke="#444" fill="none"/><rect x="345" y="110" width="1" height="16" fill="#70747e"/><rect x="346" y="110" width="1" height="16" fill="#eceef4"/><rect x="352.5" y="106.5" width="12" height="10" fill="#fff" stroke="#111"/><rect x="353" y="107" width="11" height="2" fill="#7060e0"/><path d="M354,112 h8 M354,114 h8" stroke="#333"/><path d="M366,108 q6,0 6,7" stroke="#111" stroke-width="1.2" fill="none"/><polygon points="369,114 375,114 372,118" fill="#111"/><circle cx="370" cy="122" r="5.5" fill="url(#gsph)"/><rect x="385.5" y="106.5" width="21" height="21" fill="#fff" stroke="#111"/><rect x="386" y="107" width="20" height="3" fill="#7060e0"/><path d="M388,114 h16 M388,117 h16 M388,120 h16 M388,123 h16" stroke="#111" stroke-dasharray="5,1"/><rect x="416.5" y="106.5" width="12" height="10" fill="#fff" stroke="#111"/><rect x="417" y="107" width="11" height="2" fill="#7060e0"/><path d="M430,108 q6,0 6,7" stroke="#111" stroke-width="1.2" fill="none"/><polygon points="433,114 439,114 436,118" fill="#111"/><circle cx="434" cy="122" r="5.5" fill="url(#gsph)"/><rect x="449.5" y="106.5" width="21" height="21" fill="#fff" stroke="#111"/><rect x="450" y="107" width="20" height="3" fill="#7060e0"/><rect x="479" y="110" width="1" height="16" fill="#70747e"/><rect x="480" y="110" width="1" height="16" fill="#eceef4"/><polygon points="488,120 499,106 509,112 498,126" fill="#6a70e8" stroke="#222" stroke-width="0.8"/><polygon points="488,120 498,126 498,128 488,122" fill="#fff" stroke="#222" stroke-width="0.6"/><polygon points="498,126 509,112 509,114 498,128" fill="#ddd" stroke="#222" stroke-width="0.6"/><text x="496" y="119" font-size="10" font-weight="bold" font-family="Liberation Sans" fill="#e8d020">?</text><rect x="517" y="110" width="1" height="16" fill="#70747e"/><rect x="518" y="110" width="1" height="16" fill="#eceef4"/><polygon points="526,120 537,106 547,112 536,126" fill="#702888" stroke="#222" stroke-width="0.8"/><polygon points="526,120 536,126 536,128 526,122" fill="#fff" stroke="#222" stroke-width="0.6"/><polygon points="536,126 547,112 547,114 536,128" fill="#ddd" stroke="#222" stroke-width="0.6"/><text x="534" y="119" font-size="10" font-weight="bold" font-family="Liberation Sans" fill="#e8d020">?</text><polygon points="558,120 569,106 579,112 568,126" fill="#702888" stroke="#222" stroke-width="0.8"/><polygon points="558,120 568,126 568,128 558,122" fill="#fff" stroke="#222" stroke-width="0.6"/><polygon points="568,126 579,112 579,114 568,128" fill="#ddd" stroke="#222" stroke-width="0.6"/></svg>
<div style="position:absolute;left:0px;top:136px;width:576px;height:271px;background:#88898d;border:2px solid #363a44;border-top:3px solid #363a44;"></div>
<svg style="position:absolute;left:0;top:0" width="580" height="960"><rect x="5" y="139" width="1" height="266" fill="#5d5e60"/><rect x="118" y="139" width="1" height="266" fill="#5d5e60"/><rect x="232" y="139" width="1" height="266" fill="#5d5e60"/><rect x="346" y="139" width="1" height="266" fill="#5d5e60"/><rect x="460" y="139" width="1" height="266" fill="#5d5e60"/><rect x="2" y="162" width="572" height="1" fill="#5d5e60"/><rect x="2" y="276" width="572" height="1" fill="#5d5e60"/><rect x="2" y="390" width="572" height="1" fill="#5d5e60"/><rect x="59.5" y="157.5" width="460" height="232" fill="#2dbe2d" stroke="#a8b0e0" stroke-width="1"/><rect x="60" y="157" width="460" height="1.5" fill="#58a8d0"/><rect x="70.0" y="158" width="1.2" height="231" fill="#6a9a70"/><rect x="73.1" y="158" width="1.2" height="231" fill="#6a9a70"/><rect x="89.1" y="158" width="1.2" height="231" fill="#6a9a70"/><rect x="92.2" y="158" width="1.2" height="231" fill="#6a9a70"/><rect x="105.0" y="158" width="1.2" height="231" fill="#6a9a70"/><rect x="108.1" y="158" width="1.2" height="231" fill="#6a9a70"/><rect x="122.5" y="158" width="1.2" height="231" fill="#6a9a70"/><rect x="125.6" y="158" width="1.2" height="231" fill="#6a9a70"/><rect x="140.3" y="158" width="1.2" height="231" fill="#6a9a70"/><rect x="143.4" y="158" width="1.2" height="231" fill="#6a9a70"/><rect x="156.2" y="158" width="1.2" height="231" fill="#6a9a70"/><rect x="159.3" y="158" width="1.2" height="231" fill="#6a9a70"/><rect x="190.9" y="158" width="1.2" height="231" fill="#6a9a70"/><rect x="194.0" y="158" width="1.2" height="231" fill="#6a9a70"/><rect x="210.3" y="158" width="1.2" height="231" fill="#6a9a70"/><rect x="213.4" y="158" width="1.2" height="231" fill="#6a9a70"/><rect x="224.1" y="158" width="1.2" height="231" fill="#6a9a70"/><rect x="227.2" y="158" width="1.2" height="231" fill="#6a9a70"/><rect x="242.1" y="158" width="1.2" height="231" fill="#6a9a70"/><rect x="245.2" y="158" width="1.2" height="231" fill="#6a9a70"/><rect x="260.9" y="158" width="1.2" height="231" fill="#6a9a70"/><rect x="264.0" y="158" width="1.2" height="231" fill="#6a9a70"/><rect x="277.1" y="158" width="1.2" height="231" fill="#6a9a70"/><rect x="280.2" y="158" width="1.2" height="231" fill="#6a9a70"/><rect x="296.2" y="158" width="1.2" height="231" fill="#6a9a70"/><rect x="299.3" y="158" width="1.2" height="231" fill="#6a9a70"/><rect x="312.5" y="158" width="1.2" height="231" fill="#6a9a70"/><rect x="315.6" y="158" width="1.2" height="231" fill="#6a9a70"/><rect x="346.5" y="158" width="1.2" height="231" fill="#6a9a70"/><rect x="349.6" y="158" width="1.2" height="231" fill="#6a9a70"/><rect x="363.4" y="158" width="1.2" height="231" fill="#6a9a70"/><rect x="366.5" y="158" width="1.2" height="231" fill="#6a9a70"/><rect x="382.4" y="158" width="1.2" height="231" fill="#6a9a70"/><rect x="385.5" y="158" width="1.2" height="231" fill="#6a9a70"/><rect x="398.4" y="158" width="1.2" height="231" fill="#6a9a70"/><rect x="401.5" y="158" width="1.2" height="231" fill="#6a9a70"/><rect x="417.1" y="158" width="1.2" height="231" fill="#6a9a70"/><rect x="420.2" y="158" width="1.2" height="231" fill="#6a9a70"/><rect x="433.4" y="158" width="1.2" height="231" fill="#6a9a70"/><rect x="436.5" y="158" width="1.2" height="231" fill="#6a9a70"/><rect x="468.7" y="158" width="1.2" height="231" fill="#6a9a70"/><rect x="471.8" y="158" width="1.2" height="231" fill="#6a9a70"/><rect x="484.4" y="158" width="1.2" height="231" fill="#6a9a70"/><rect x="487.5" y="158" width="1.2" height="231" fill="#6a9a70"/><rect x="503.4" y="158" width="1.2" height="231" fill="#6a9a70"/><rect x="506.5" y="158" width="1.2" height="231" fill="#6a9a70"/><rect x="330.8" y="158" width="1.2" height="231" fill="#6a9a70"/><rect x="452.0" y="158" width="1.2" height="231" fill="#6a9a70"/><rect x="120.8" y="158" width="1.2" height="231" fill="#a8e8b8"/><rect x="175.1" y="158" width="1.2" height="231" fill="#a8e8b8"/><rect x="178.2" y="158" width="1.2" height="231" fill="#a8e8b8"/><rect x="228.9" y="158" width="1.2" height="231" fill="#a8e8b8"/><rect x="70.4" y="213" width="1" height="1" fill="#b0f060"/><rect x="73.4" y="216" width="1" height="1" fill="#b0f060"/><rect x="70.4" y="243" width="1" height="1" fill="#b0f060"/><rect x="73.4" y="246" width="1" height="1" fill="#b0f060"/><rect x="70.4" y="272" width="1" height="1" fill="#b0f060"/><rect x="73.4" y="275" width="1" height="1" fill="#b0f060"/><rect x="70.4" y="302" width="1" height="1" fill="#b0f060"/><rect x="73.4" y="305" width="1" height="1" fill="#b0f060"/><rect x="70.4" y="331" width="1" height="1" fill="#b0f060"/><rect x="73.4" y="334" width="1" height="1" fill="#b0f060"/><rect x="70.4" y="360" width="1" height="1" fill="#b0f060"/><rect x="73.4" y="363" width="1" height="1" fill="#b0f060"/><rect x="105.4" y="213" width="1" height="1" fill="#b0f060"/><rect x="108.4" y="216" width="1" height="1" fill="#b0f060"/><rect x="105.4" y="243" width="1" height="1" fill="#b0f060"/><rect x="108.4" y="246" width="1" height="1" fill="#b0f060"/><rect x="105.4" y="272" width="1" height="1" fill="#b0f060"/><rect x="108.4" y="275" width="1" height="1" fill="#b0f060"/><rect x="105.4" y="302" width="1" height="1" fill="#b0f060"/><rect x="108.4" y="305" width="1" height="1" fill="#b0f060"/><rect x="105.4" y="331" width="1" height="1" fill="#b0f060"/><rect x="108.4" y="334" width="1" height="1" fill="#b0f060"/><rect x="105.4" y="360" width="1" height="1" fill="#b0f060"/><rect x="108.4" y="363" width="1" height="1" fill="#b0f060"/><rect x="140.7" y="213" width="1" height="1" fill="#b0f060"/><rect x="143.7" y="216" width="1" height="1" fill="#b0f060"/><rect x="140.7" y="243" width="1" height="1" fill="#b0f060"/><rect x="143.7" y="246" width="1" height="1" fill="#b0f060"/><rect x="140.7" y="272" width="1" height="1" fill="#b0f060"/><rect x="143.7" y="275" width="1" height="1" fill="#b0f060"/><rect x="140.7" y="302" width="1" height="1" fill="#b0f060"/><rect x="143.7" y="305" width="1" height="1" fill="#b0f060"/><rect x="140.7" y="331" width="1" height="1" fill="#b0f060"/><rect x="143.7" y="334" width="1" height="1" fill="#b0f060"/><rect x="140.7" y="360" width="1" height="1" fill="#b0f060"/><rect x="143.7" y="363" width="1" height="1" fill="#b0f060"/><rect x="191.3" y="213" width="1" height="1" fill="#b0f060"/><rect x="194.3" y="216" width="1" height="1" fill="#b0f060"/><rect x="191.3" y="243" width="1" height="1" fill="#b0f060"/><rect x="194.3" y="246" width="1" height="1" fill="#b0f060"/><rect x="191.3" y="272" width="1" height="1" fill="#b0f060"/><rect x="194.3" y="275" width="1" height="1" fill="#b0f060"/><rect x="191.3" y="302" width="1" height="1" fill="#b0f060"/><rect x="194.3" y="305" width="1" height="1" fill="#b0f060"/><rect x="191.3" y="331" width="1" height="1" fill="#b0f060"/><rect x="194.3" y="334" width="1" height="1" fill="#b0f060"/><rect x="191.3" y="360" width="1" height="1" fill="#b0f060"/><rect x="194.3" y="363" width="1" height="1" fill="#b0f060"/><rect x="224.5" y="213" width="1" height="1" fill="#b0f060"/><rect x="227.5" y="216" width="1" height="1" fill="#b0f060"/><rect x="224.5" y="243" width="1" height="1" fill="#b0f060"/><rect x="227.5" y="246" width="1" height="1" fill="#b0f060"/><rect x="224.5" y="272" width="1" height="1" fill="#b0f060"/><rect x="227.5" y="275" width="1" height="1" fill="#b0f060"/><rect x="224.5" y="302" width="1" height="1" fill="#b0f060"/><rect x="227.5" y="305" width="1" height="1" fill="#b0f060"/><rect x="224.5" y="331" width="1" height="1" fill="#b0f060"/><rect x="227.5" y="334" width="1" height="1" fill="#b0f060"/><rect x="224.5" y="360" width="1" height="1" fill="#b0f060"/><rect x="227.5" y="363" width="1" height="1" fill="#b0f060"/><rect x="261.3" y="213" width="1" height="1" fill="#b0f060"/><rect x="264.3" y="216" width="1" height="1" fill="#b0f060"/><rect x="261.3" y="243" width="1" height="1" fill="#b0f060"/><rect x="264.3" y="246" width="1" height="1" fill="#b0f060"/><rect x="261.3" y="272" width="1" height="1" fill="#b0f060"/><rect x="264.3" y="275" width="1" height="1" fill="#b0f060"/><rect x="261.3" y="302" width="1" height="1" fill="#b0f060"/><rect x="264.3" y="305" width="1" height="1" fill="#b0f060"/><rect x="261.3" y="331" width="1" height="1" fill="#b0f060"/><rect x="264.3" y="334" width="1" height="1" fill="#b0f060"/><rect x="261.3" y="360" width="1" height="1" fill="#b0f060"/><rect x="264.3" y="363" width="1" height="1" fill="#b0f060"/><rect x="296.6" y="213" width="1" height="1" fill="#b0f060"/><rect x="299.6" y="216" width="1" height="1" fill="#b0f060"/><rect x="296.6" y="243" width="1" height="1" fill="#b0f060"/><rect x="299.6" y="246" width="1" height="1" fill="#b0f060"/><rect x="296.6" y="272" width="1" height="1" fill="#b0f060"/><rect x="299.6" y="275" width="1" height="1" fill="#b0f060"/><rect x="296.6" y="302" width="1" height="1" fill="#b0f060"/><rect x="299.6" y="305" width="1" height="1" fill="#b0f060"/><rect x="296.6" y="331" width="1" height="1" fill="#b0f060"/><rect x="299.6" y="334" width="1" height="1" fill="#b0f060"/><rect x="296.6" y="360" width="1" height="1" fill="#b0f060"/><rect x="299.6" y="363" width="1" height="1" fill="#b0f060"/><rect x="346.9" y="213" width="1" height="1" fill="#b0f060"/><rect x="349.9" y="216" width="1" height="1" fill="#b0f060"/><rect x="346.9" y="243" width="1" height="1" fill="#b0f060"/><rect x="349.9" y="246" width="1" height="1" fill="#b0f060"/><rect x="346.9" y="272" width="1" height="1" fill="#b0f060"/><rect x="349.9" y="275" width="1" height="1" fill="#b0f060"/><rect x="346.9" y="302" width="1" height="1" fill="#b0f060"/><rect x="349.9" y="305" width="1" height="1" fill="#b0f060"/><rect x="346.9" y="331" width="1" height="1" fill="#b0f060"/><rect x="349.9" y="334" width="1" height="1" fill="#b0f060"/><rect x="346.9" y="360" width="1" height="1" fill="#b0f060"/><rect x="349.9" y="363" width="1" height="1" fill="#b0f060"/><rect x="382.8" y="213" width="1" height="1" fill="#b0f060"/><rect x="385.8" y="216" width="1" height="1" fill="#b0f060"/><rect x="382.8" y="243" width="1" height="1" fill="#b0f060"/><rect x="385.8" y="246" width="1" height="1" fill="#b0f060"/><rect x="382.8" y="272" width="1" height="1" fill="#b0f060"/><rect x="385.8" y="275" width="1" height="1" fill="#b0f060"/><rect x="382.8" y="302" width="1" height="1" fill="#b0f060"/><rect x="385.8" y="305" width="1" height="1" fill="#b0f060"/><rect x="382.8" y="331" width="1" height="1" fill="#b0f060"/><rect x="385.8" y="334" width="1" height="1" fill="#b0f060"/><rect x="382.8" y="360" width="1" height="1" fill="#b0f060"/><rect x="385.8" y="363" width="1" height="1" fill="#b0f060"/><rect x="417.5" y="213" width="1" height="1" fill="#b0f060"/><rect x="420.5" y="216" width="1" height="1" fill="#b0f060"/><rect x="417.5" y="243" width="1" height="1" fill="#b0f060"/><rect x="420.5" y="246" width="1" height="1" fill="#b0f060"/><rect x="417.5" y="272" width="1" height="1" fill="#b0f060"/><rect x="420.5" y="275" width="1" height="1" fill="#b0f060"/><rect x="417.5" y="302" width="1" height="1" fill="#b0f060"/><rect x="420.5" y="305" width="1" height="1" fill="#b0f060"/><rect x="417.5" y="331" width="1" height="1" fill="#b0f060"/><rect x="420.5" y="334" width="1" height="1" fill="#b0f060"/><rect x="417.5" y="360" width="1" height="1" fill="#b0f060"/><rect x="420.5" y="363" width="1" height="1" fill="#b0f060"/><rect x="469.1" y="213" width="1" height="1" fill="#b0f060"/><rect x="472.1" y="216" width="1" height="1" fill="#b0f060"/><rect x="469.1" y="243" width="1" height="1" fill="#b0f060"/><rect x="472.1" y="246" width="1" height="1" fill="#b0f060"/><rect x="469.1" y="272" width="1" height="1" fill="#b0f060"/><rect x="472.1" y="275" width="1" height="1" fill="#b0f060"/><rect x="469.1" y="302" width="1" height="1" fill="#b0f060"/><rect x="472.1" y="305" width="1" height="1" fill="#b0f060"/><rect x="469.1" y="331" width="1" height="1" fill="#b0f060"/><rect x="472.1" y="334" width="1" height="1" fill="#b0f060"/><rect x="469.1" y="360" width="1" height="1" fill="#b0f060"/><rect x="472.1" y="363" width="1" height="1" fill="#b0f060"/><rect x="503.8" y="213" width="1" height="1" fill="#b0f060"/><rect x="506.8" y="216" width="1" height="1" fill="#b0f060"/><rect x="503.8" y="243" width="1" height="1" fill="#b0f060"/><rect x="506.8" y="246" width="1" height="1" fill="#b0f060"/><rect x="503.8" y="272" width="1" height="1" fill="#b0f060"/><rect x="506.8" y="275" width="1" height="1" fill="#b0f060"/><rect x="503.8" y="302" width="1" height="1" fill="#b0f060"/><rect x="506.8" y="305" width="1" height="1" fill="#b0f060"/><rect x="503.8" y="331" width="1" height="1" fill="#b0f060"/><rect x="506.8" y="334" width="1" height="1" fill="#b0f060"/><rect x="503.8" y="360" width="1" height="1" fill="#b0f060"/><rect x="506.8" y="363" width="1" height="1" fill="#b0f060"/><rect x="69.9" y="159" width="1" height="3" fill="#90c0d0"/><rect x="72.9" y="159" width="1" height="3" fill="#90c0d0"/><rect x="89.0" y="159" width="1" height="3" fill="#90c0d0"/><rect x="92.0" y="159" width="1" height="3" fill="#90c0d0"/><rect x="104.9" y="159" width="1" height="3" fill="#90c0d0"/><rect x="107.9" y="159" width="1" height="3" fill="#90c0d0"/><rect x="122.4" y="159" width="1" height="3" fill="#90c0d0"/><rect x="125.4" y="159" width="1" height="3" fill="#90c0d0"/><rect x="140.2" y="159" width="1" height="3" fill="#90c0d0"/><rect x="143.2" y="159" width="1" height="3" fill="#90c0d0"/><rect x="156.1" y="159" width="1" height="3" fill="#90c0d0"/><rect x="159.1" y="159" width="1" height="3" fill="#90c0d0"/><rect x="190.8" y="159" width="1" height="3" fill="#90c0d0"/><rect x="193.8" y="159" width="1" height="3" fill="#90c0d0"/><rect x="210.2" y="159" width="1" height="3" fill="#90c0d0"/><rect x="213.2" y="159" width="1" height="3" fill="#90c0d0"/><rect x="224.0" y="159" width="1" height="3" fill="#90c0d0"/><rect x="227.0" y="159" width="1" height="3" fill="#90c0d0"/><rect x="242.0" y="159" width="1" height="3" fill="#90c0d0"/><rect x="245.0" y="159" width="1" height="3" fill="#90c0d0"/><rect x="260.8" y="159" width="1" height="3" fill="#90c0d0"/><rect x="263.8" y="159" width="1" height="3" fill="#90c0d0"/><rect x="277.0" y="159" width="1" height="3" fill="#90c0d0"/><rect x="280.0" y="159" width="1" height="3" fill="#90c0d0"/><rect x="296.1" y="159" width="1" height="3" fill="#90c0d0"/><rect x="299.1" y="159" width="1" height="3" fill="#90c0d0"/><rect x="312.4" y="159" width="1" height="3" fill="#90c0d0"/><rect x="315.4" y="159" width="1" height="3" fill="#90c0d0"/><rect x="346.4" y="159" width="1" height="3" fill="#90c0d0"/><rect x="349.4" y="159" width="1" height="3" fill="#90c0d0"/><rect x="363.3" y="159" width="1" height="3" fill="#90c0d0"/><rect x="366.3" y="159" width="1" height="3" fill="#90c0d0"/><rect x="382.3" y="159" width="1" height="3" fill="#90c0d0"/><rect x="385.3" y="159" width="1" height="3" fill="#90c0d0"/><rect x="398.3" y="159" width="1" height="3" fill="#90c0d0"/><rect x="401.3" y="159" width="1" height="3" fill="#90c0d0"/><rect x="417.0" y="159" width="1" height="3" fill="#90c0d0"/><rect x="420.0" y="159" width="1" height="3" fill="#90c0d0"/><rect x="433.3" y="159" width="1" height="3" fill="#90c0d0"/><rect x="436.3" y="159" width="1" height="3" fill="#90c0d0"/><rect x="468.6" y="159" width="1" height="3" fill="#90c0d0"/><rect x="471.6" y="159" width="1" height="3" fill="#90c0d0"/><rect x="484.3" y="159" width="1" height="3" fill="#90c0d0"/><rect x="487.3" y="159" width="1" height="3" fill="#90c0d0"/><rect x="503.3" y="159" width="1" height="3" fill="#90c0d0"/><rect x="506.3" y="159" width="1" height="3" fill="#90c0d0"/><rect x="329.2" y="159" width="1" height="3" fill="#90c0d0"/><rect x="332.2" y="159" width="1" height="3" fill="#90c0d0"/><rect x="450.5" y="159" width="1" height="3" fill="#90c0d0"/><rect x="453.5" y="159" width="1" height="3" fill="#90c0d0"/><rect x="27" y="346" width="1" height="32" fill="#3a9a40"/><rect x="27" y="378" width="24" height="1.2" fill="#c02020"/><text x="26" y="352" font-size="9" fill="#3aa040" font-family="Liberation Sans">y</text><text x="52" y="375" font-size="9" fill="#e02020" font-family="Liberation Sans">x</text><text x="27" y="375" font-size="9" fill="#1020c0" font-family="Liberation Sans">z</text></svg>
<div class="t" style="left:6px;top:141.52px;font-size:10.7px;color:#e8eaf0;">Oben</div>
<div style="position:absolute;left:0px;top:410px;width:576px;height:269px;background:#88898d;border:2px solid #363a44;border-top:2px solid #363a44;"></div>
<svg style="position:absolute;left:0;top:0" width="580" height="960"><rect x="108" y="413" width="1" height="264" fill="#5d5e60"/><rect x="229" y="413" width="1" height="264" fill="#5d5e60"/><rect x="349" y="413" width="1" height="264" fill="#5d5e60"/><rect x="470" y="413" width="1" height="264" fill="#5d5e60"/><rect x="2" y="518" width="572" height="1" fill="#5d5e60"/><rect x="2" y="639" width="572" height="1" fill="#5d5e60"/><rect x="48" y="542" width="486" height="3.6" fill="#5a9aa8"/><rect x="47" y="545.6" width="487" height="1" fill="#50b860"/><rect x="45.7" y="547.7" width="488" height="5.6" fill="#8c8ca8" stroke="#b4b4f0" stroke-width="1.4"/><rect x="108" y="548" width="1" height="4" fill="#c0c0f8"/><rect x="168" y="548" width="1" height="4" fill="#c0c0f8"/><rect x="229" y="548" width="1" height="4" fill="#c0c0f8"/><rect x="289" y="548" width="1" height="4" fill="#c0c0f8"/><rect x="349" y="548" width="1" height="4" fill="#c0c0f8"/><rect x="409" y="548" width="1" height="4" fill="#c0c0f8"/><rect x="470" y="548" width="1" height="4" fill="#c0c0f8"/><rect x="530" y="548" width="1" height="4" fill="#c0c0f8"/><rect x="27" y="629" width="1" height="24" fill="#1020c0"/><rect x="27" y="652" width="25" height="1.2" fill="#c02020"/><text x="27" y="624" font-size="9" fill="#1020c0" font-family="Liberation Sans">z</text><text x="52" y="648" font-size="9" fill="#e02020" font-family="Liberation Sans">x</text><text x="28" y="649" font-size="9" fill="#40b040" font-family="Liberation Sans">y</text></svg>
<div class="t" style="left:6px;top:415.62px;font-size:10.7px;color:#e8eaf0;">Vorn</div>
<div style="position:absolute;left:0px;top:683px;width:576px;height:272px;background:#88898d;border:2px solid #363a44;border-top:2px solid #363a44;"></div>
<svg style="position:absolute;left:0;top:0" width="580" height="960"><rect x="51" y="686" width="1" height="267" fill="#5d5e60"/><rect x="295" y="686" width="1" height="267" fill="#5d5e60"/><rect x="538" y="686" width="1" height="267" fill="#5d5e60"/><rect x="2" y="763" width="572" height="1" fill="#5d5e60"/><rect x="39" y="814.5" width="496" height="2.5" fill="#58a0b8"/><rect x="39" y="817" width="496" height="1.5" fill="#50b050"/><rect x="40" y="822" width="496" height="10" fill="none" stroke="#b4b4f0" stroke-width="2"/><rect x="39" y="822" width="8" height="10" fill="none" stroke="#b4b4f0" stroke-width="1.5"/><rect x="166" y="822" width="2" height="10" fill="#b4b4f0"/><rect x="288" y="822" width="2" height="10" fill="#b4b4f0"/><rect x="409" y="822" width="2" height="10" fill="#b4b4f0"/><rect x="27" y="902" width="1" height="26" fill="#1020c0"/><rect x="3" y="927" width="25" height="1.2" fill="#40b040"/><text x="26" y="898" font-size="9" fill="#1020c0" font-family="Liberation Sans">z</text><text x="28" y="924" font-size="9" fill="#e02020" font-family="Liberation Sans">x</text><text x="2" y="922" font-size="9" fill="#40b040" font-family="Liberation Sans">y</text></svg>
<div class="t" style="left:6px;top:687.62px;font-size:10.7px;color:#e8eaf0;">Links</div>
<div style="position:absolute;left:576px;top:136px;width:4px;height:820px;background:#c8cbd8;"></div>
<div style="position:absolute;left:580px;top:136px;width:1157px;height:819px;background:#88898d;border:3px solid #e2f03c;border-left:2px solid #e2f03c;border-top:2.7px solid #e2f03c;"></div>
<svg style="position:absolute;left:0;top:0" width="1920" height="1080"><rect x="583" y="222.5" width="1150" height="648" fill="none" stroke="#6090b8" stroke-width="1.6"/><rect x="611.5" y="239.5" width="1094" height="614" fill="none" stroke="#50b098" stroke-width="1.6"/><rect x="640.5" y="271.5" width="1036" height="550" fill="none" stroke="#d8d478" stroke-width="1.2"/></svg>
<svg style="position:absolute;left:0;top:0" width="1920" height="1080"><polygon points="700.2,536.1 1537.7,272.3 1601.1,637.1 891.6,819.5" fill="#55516f" stroke="#b4b4f4" stroke-width="1.1"/><polygon points="722.7,542.8 797.8,519.3 840.5,588.9 767.8,610.7" fill="#32c432" stroke="none" stroke-width="1"/><path d="M724.1,542.3L769.2,610.2M728.2,541.1L773.2,609.0M732.4,539.8L777.2,607.8M736.5,538.5L781.2,606.7M740.7,537.2L785.2,605.5M744.8,535.9L789.2,604.3M749.0,534.6L793.3,603.1M753.1,533.3L797.3,601.9M757.3,532.0L801.3,600.7M761.4,530.7L805.4,599.4M765.6,529.4L809.4,598.2M769.8,528.1L813.5,597.0M774.0,526.8L817.5,595.8M778.2,525.4L821.6,594.6M782.4,524.1L825.7,593.4M786.6,522.8L829.7,592.2M790.8,521.5L833.8,591.0M795.0,520.2L837.9,589.7" stroke="#0a5a18" stroke-width="1.25"/><path d="M726.0,541.8L771.0,609.7M730.1,540.5L775.0,608.5M734.2,539.2L779.0,607.3M738.4,537.9L783.0,606.1M742.5,536.6L787.0,604.9M746.7,535.3L791.1,603.7M750.8,534.0L795.1,602.5M755.0,532.7L799.1,601.3M759.2,531.4L803.1,600.1M763.3,530.1L807.2,598.9M767.5,528.8L811.2,597.7M771.7,527.5L815.3,596.5M775.9,526.2L819.4,595.3M780.1,524.8L823.4,594.1M784.3,523.5L827.5,592.8M788.5,522.2L831.6,591.6M792.7,520.9L835.6,590.4M796.9,519.6L839.7,589.2" stroke="#249a3c" stroke-width="0.7"/><polygon points="722.7,542.8 797.8,519.3 840.5,588.9 767.8,610.7" fill="none" stroke="#a8e0c0" stroke-width="0.9"/><polygon points="775.5,622.2 847.8,600.8 885.6,662.4 815.5,682.3" fill="#32c432" stroke="none" stroke-width="1"/><path d="M776.9,621.8L816.8,681.9M780.9,620.7L820.7,680.8M784.9,619.5L824.5,679.7M788.9,618.3L828.4,678.6M792.8,617.1L832.3,677.5M796.8,615.9L836.2,676.4M800.8,614.7L840.0,675.3M804.8,613.6L843.9,674.2M808.9,612.4L847.8,673.1M812.9,611.2L851.7,672.0M816.9,610.0L855.6,670.9M820.9,608.8L859.5,669.8M825.0,607.6L863.4,668.7M829.0,606.4L867.4,667.6M833.0,605.2L871.3,666.4M837.1,604.0L875.2,665.3M841.1,602.8L879.1,664.2M845.2,601.6L883.1,663.1" stroke="#0a5a18" stroke-width="1.25"/><path d="M778.7,621.3L818.6,681.4M782.7,620.1L822.4,680.3M786.7,618.9L826.3,679.2M790.6,617.8L830.1,678.1M794.6,616.6L834.0,677.0M798.6,615.4L837.9,675.9M802.6,614.2L841.8,674.8M806.6,613.0L845.7,673.7M810.7,611.8L849.6,672.6M814.7,610.7L853.5,671.5M818.7,609.5L857.4,670.4M822.7,608.3L861.3,669.3M826.8,607.1L865.2,668.2M830.8,605.9L869.1,667.1M834.9,604.7L873.0,665.9M838.9,603.5L877.0,664.8M843.0,602.3L880.9,663.7M847.0,601.1L884.9,662.6" stroke="#249a3c" stroke-width="0.7"/><polygon points="775.5,622.2 847.8,600.8 885.6,662.4 815.5,682.3" fill="none" stroke="#a8e0c0" stroke-width="0.9"/><line x1="775.5" y1="622.2" x2="885.6" y2="662.4" stroke="#e4f418" stroke-width="6"/><line x1="775.5" y1="622.2" x2="885.6" y2="662.4" stroke="#667000" stroke-width="4"/><line x1="847.8" y1="600.8" x2="815.5" y2="682.3" stroke="#e4f418" stroke-width="6"/><line x1="847.8" y1="600.8" x2="815.5" y2="682.3" stroke="#667000" stroke-width="4"/><polygon points="822.5,692.9 892.3,673.3 927.0,729.7 859.2,748.1" fill="#32c432" stroke="none" stroke-width="1"/><path d="M823.9,692.5L860.5,747.7M827.7,691.5L864.3,746.7M831.6,690.4L868.0,745.7M835.4,689.3L871.7,744.7M839.3,688.2L875.5,743.7M843.1,687.1L879.2,742.7M847.0,686.0L883.0,741.7M850.8,684.9L886.7,740.6M854.7,683.9L890.5,739.6M858.6,682.8L894.3,738.6M862.5,681.7L898.0,737.6M866.4,680.6L901.8,736.6M870.2,679.5L905.6,735.5M874.1,678.4L909.4,734.5M878.0,677.3L913.2,733.5M882.0,676.2L916.9,732.5M885.9,675.1L920.7,731.4M889.8,674.0L924.5,730.4" stroke="#0a5a18" stroke-width="1.25"/><path d="M825.6,692.1L862.2,747.3M829.4,691.0L865.9,746.3M833.3,689.9L869.7,745.3M837.1,688.8L873.4,744.2M841.0,687.7L877.2,743.2M844.8,686.6L880.9,742.2M848.7,685.5L884.7,741.2M852.6,684.5L888.4,740.2M856.5,683.4L892.2,739.2M860.3,682.3L895.9,738.1M864.2,681.2L899.7,737.1M868.1,680.1L903.5,736.1M872.0,679.0L907.3,735.1M875.9,677.9L911.1,734.1M879.8,676.8L914.9,733.0M883.7,675.7L918.7,732.0M887.6,674.6L922.5,731.0M891.5,673.5L926.3,729.9" stroke="#249a3c" stroke-width="0.7"/><polygon points="822.5,692.9 892.3,673.3 927.0,729.7 859.2,748.1" fill="none" stroke="#a8e0c0" stroke-width="0.9"/><line x1="822.5" y1="692.9" x2="927.0" y2="729.7" stroke="#e4f418" stroke-width="6"/><line x1="822.5" y1="692.9" x2="927.0" y2="729.7" stroke="#667000" stroke-width="4"/><line x1="892.3" y1="673.3" x2="859.2" y2="748.1" stroke="#e4f418" stroke-width="6"/><line x1="892.3" y1="673.3" x2="859.2" y2="748.1" stroke="#667000" stroke-width="4"/><polygon points="865.7,757.9 933.2,739.8 963.2,788.7 897.6,805.7" fill="#32c432" stroke="none" stroke-width="1"/><path d="M867.0,757.5L898.8,805.4M870.7,756.5L902.4,804.4M874.5,755.5L906.0,803.5M878.2,754.5L909.7,802.6M881.9,753.5L913.3,801.6M885.6,752.5L916.9,800.7M889.4,751.5L920.6,799.7M893.1,750.5L924.2,798.8M896.8,749.5L927.8,797.8M900.6,748.5L931.5,796.9M904.3,747.5L935.1,796.0M908.1,746.5L938.8,795.0M911.8,745.5L942.5,794.1M915.6,744.5L946.1,793.1M919.4,743.5L949.8,792.2M923.1,742.4L953.5,791.2M926.9,741.4L957.1,790.3M930.7,740.4L960.8,789.3" stroke="#0a5a18" stroke-width="1.25"/><path d="M868.7,757.1L900.4,804.9M872.4,756.1L904.1,804.0M876.1,755.1L907.7,803.1M879.9,754.1L911.3,802.1M883.6,753.1L914.9,801.2M887.3,752.1L918.6,800.2M891.0,751.1L922.2,799.3M894.8,750.1L925.8,798.4M898.5,749.1L929.5,797.4M902.3,748.1L933.1,796.5M906.0,747.0L936.8,795.5M909.8,746.0L940.4,794.6M913.5,745.0L944.1,793.6M917.3,744.0L947.8,792.7M921.1,743.0L951.4,791.7M924.8,742.0L955.1,790.8M928.6,741.0L958.8,789.8M932.4,740.0L962.5,788.9" stroke="#249a3c" stroke-width="0.7"/><polygon points="865.7,757.9 933.2,739.8 963.2,788.7 897.6,805.7" fill="none" stroke="#a8e0c0" stroke-width="0.9"/><polygon points="809.5,515.7 891.8,489.9 931.5,561.8 851.9,585.6" fill="#32c432" stroke="none" stroke-width="1"/><path d="M811.0,515.2L853.4,585.1M815.6,513.8L857.8,583.8M820.1,512.3L862.1,582.5M824.6,510.9L866.5,581.2M829.2,509.5L870.9,579.9M833.7,508.1L875.3,578.6M838.3,506.7L879.7,577.3M842.8,505.2L884.1,575.9M847.4,503.8L888.5,574.6M852.0,502.4L893.0,573.3M856.5,501.0L897.4,572.0M861.1,499.5L901.8,570.7M865.7,498.1L906.3,569.3M870.3,496.6L910.7,568.0M874.9,495.2L915.2,566.7M879.6,493.8L919.7,565.3M884.2,492.3L924.1,564.0M888.8,490.9L928.6,562.7" stroke="#0a5a18" stroke-width="1.25"/><path d="M813.1,514.5L855.4,584.5M817.6,513.1L859.7,583.2M822.1,511.7L864.1,581.9M826.7,510.3L868.5,580.6M831.2,508.9L872.9,579.3M835.8,507.4L877.3,578.0M840.3,506.0L881.7,576.7M844.9,504.6L886.1,575.3M849.4,503.2L890.5,574.0M854.0,501.7L895.0,572.7M858.6,500.3L899.4,571.4M863.2,498.9L903.8,570.1M867.8,497.4L908.3,568.7M872.4,496.0L912.7,567.4M877.0,494.6L917.2,566.1M881.6,493.1L921.7,564.7M886.3,491.7L926.1,563.4M890.9,490.2L930.6,562.1" stroke="#249a3c" stroke-width="0.7"/><polygon points="809.5,515.7 891.8,489.9 931.5,561.8 851.9,585.6" fill="none" stroke="#a8e0c0" stroke-width="0.9"/><polygon points="859.1,597.5 938.3,574.1 973.3,637.5 896.5,659.3" fill="#32c432" stroke="none" stroke-width="1"/><path d="M860.6,597.1L898.0,658.9M865.0,595.8L902.2,657.7M869.3,594.5L906.5,656.5M873.7,593.2L910.7,655.3M878.0,591.9L914.9,654.1M882.4,590.6L919.2,652.9M886.8,589.3L923.4,651.7M891.2,588.0L927.7,650.4M895.6,586.7L931.9,649.2M900.0,585.4L936.2,648.0M904.4,584.1L940.4,646.8M908.8,582.8L944.7,645.6M913.2,581.5L949.0,644.4M917.6,580.2L953.3,643.2M922.1,578.9L957.6,642.0M926.5,577.5L961.9,640.7M930.9,576.2L966.2,639.5M935.4,574.9L970.5,638.3" stroke="#0a5a18" stroke-width="1.25"/><path d="M862.6,596.5L899.9,658.3M866.9,595.2L904.1,657.1M871.3,593.9L908.4,655.9M875.6,592.6L912.6,654.7M880.0,591.3L916.8,653.5M884.4,590.0L921.1,652.3M888.8,588.7L925.3,651.1M893.2,587.4L929.6,649.9M897.5,586.1L933.8,648.7M901.9,584.8L938.1,647.5M906.4,583.5L942.4,646.3M910.8,582.2L946.6,645.1M915.2,580.9L950.9,643.8M919.6,579.6L955.2,642.6M924.1,578.3L959.5,641.4M928.5,577.0L963.8,640.2M932.9,575.6L968.1,639.0M937.4,574.3L972.4,637.7" stroke="#249a3c" stroke-width="0.7"/><polygon points="859.1,597.5 938.3,574.1 973.3,637.5 896.5,659.3" fill="none" stroke="#a8e0c0" stroke-width="0.9"/><line x1="859.1" y1="597.5" x2="973.3" y2="637.5" stroke="#e4f418" stroke-width="6"/><line x1="859.1" y1="597.5" x2="973.3" y2="637.5" stroke="#667000" stroke-width="4"/><line x1="938.3" y1="574.1" x2="896.5" y2="659.3" stroke="#e4f418" stroke-width="6"/><line x1="938.3" y1="574.1" x2="896.5" y2="659.3" stroke="#667000" stroke-width="4"/><polygon points="903.2,670.2 979.5,648.7 1011.6,706.9 937.5,726.9" fill="#32c432" stroke="none" stroke-width="1"/><path d="M904.6,669.8L939.0,726.5M908.8,668.6L943.0,725.4M913.0,667.4L947.1,724.3M917.2,666.2L951.2,723.2M921.4,665.1L955.3,722.1M925.7,663.9L959.4,721.0M929.9,662.7L963.5,719.9M934.1,661.5L967.6,718.8M938.3,660.3L971.7,717.7M942.6,659.1L975.8,716.5M946.8,657.9L979.9,715.4M951.1,656.7L984.0,714.3M955.3,655.5L988.2,713.2M959.6,654.3L992.3,712.1M963.9,653.1L996.4,711.0M968.1,651.9L1000.6,709.8M972.4,650.7L1004.7,708.7M976.7,649.5L1008.9,707.6" stroke="#0a5a18" stroke-width="1.25"/><path d="M906.5,669.3L940.8,726.0M910.7,668.1L944.9,724.9M914.9,666.9L948.9,723.8M919.1,665.7L953.0,722.7M923.3,664.5L957.1,721.6M927.6,663.3L961.2,720.5M931.8,662.1L965.3,719.4M936.0,661.0L969.4,718.3M940.2,659.8L973.5,717.2M944.5,658.6L977.6,716.0M948.7,657.4L981.8,714.9M953.0,656.2L985.9,713.8M957.3,655.0L990.0,712.7M961.5,653.8L994.2,711.6M965.8,652.6L998.3,710.5M970.1,651.4L1002.5,709.3M974.4,650.2L1006.6,708.2M978.6,648.9L1010.8,707.1" stroke="#249a3c" stroke-width="0.7"/><polygon points="903.2,670.2 979.5,648.7 1011.6,706.9 937.5,726.9" fill="none" stroke="#a8e0c0" stroke-width="0.9"/><line x1="903.2" y1="670.2" x2="1011.6" y2="706.9" stroke="#e4f418" stroke-width="6"/><line x1="903.2" y1="670.2" x2="1011.6" y2="706.9" stroke="#667000" stroke-width="4"/><line x1="979.5" y1="648.7" x2="937.5" y2="726.9" stroke="#e4f418" stroke-width="6"/><line x1="979.5" y1="648.7" x2="937.5" y2="726.9" stroke="#667000" stroke-width="4"/><polygon points="943.6,736.9 1017.3,717.2 1045.1,767.5 973.4,786.0" fill="#32c432" stroke="none" stroke-width="1"/><path d="M945.1,736.6L974.8,785.7M949.1,735.5L978.7,784.7M953.2,734.4L982.7,783.6M957.2,733.3L986.6,782.6M961.3,732.2L990.6,781.6M965.3,731.1L994.5,780.6M969.4,730.0L998.5,779.5M973.5,728.9L1002.5,778.5M977.6,727.8L1006.4,777.5M981.7,726.7L1010.4,776.4M985.8,725.6L1014.4,775.4M989.9,724.5L1018.4,774.4M994.0,723.4L1022.4,773.3M998.1,722.3L1026.4,772.3M1002.2,721.2L1030.4,771.3M1006.3,720.1L1034.4,770.2M1010.5,719.0L1038.4,769.2M1014.6,717.9L1042.5,768.1" stroke="#0a5a18" stroke-width="1.25"/><path d="M946.9,736.1L976.6,785.2M950.9,735.0L980.5,784.2M955.0,733.9L984.4,783.2M959.0,732.8L988.4,782.2M963.1,731.7L992.4,781.1M967.2,730.6L996.3,780.1M971.3,729.5L1000.3,779.1M975.3,728.4L1004.3,778.0M979.4,727.3L1008.2,777.0M983.5,726.2L1012.2,776.0M987.6,725.1L1016.2,774.9M991.7,724.0L1020.2,773.9M995.8,722.9L1024.2,772.9M999.9,721.8L1028.2,771.8M1004.1,720.7L1032.2,770.8M1008.2,719.6L1036.2,769.8M1012.3,718.5L1040.2,768.7M1016.5,717.4L1044.3,767.7" stroke="#249a3c" stroke-width="0.7"/><polygon points="943.6,736.9 1017.3,717.2 1045.1,767.5 973.4,786.0" fill="none" stroke="#a8e0c0" stroke-width="0.9"/><polygon points="903.9,486.2 989.0,459.6 1025.3,533.8 943.2,558.3" fill="#32c432" stroke="none" stroke-width="1"/><path d="M905.5,485.6L944.8,557.8M910.2,484.2L949.3,556.5M914.9,482.7L953.8,555.2M919.5,481.3L958.3,553.8M924.2,479.8L962.8,552.5M928.9,478.3L967.4,551.1M933.6,476.9L971.9,549.7M938.3,475.4L976.5,548.4M943.1,473.9L981.0,547.0M947.8,472.4L985.6,545.7M952.5,471.0L990.1,544.3M957.3,469.5L994.7,542.9M962.0,468.0L999.3,541.6M966.8,466.5L1003.9,540.2M971.5,465.0L1008.5,538.8M976.3,463.5L1013.1,537.4M981.1,462.0L1017.7,536.1M985.8,460.5L1022.3,534.7" stroke="#0a5a18" stroke-width="1.25"/><path d="M907.6,485.0L946.8,557.2M912.3,483.5L951.3,555.9M917.0,482.1L955.8,554.5M921.7,480.6L960.3,553.2M926.3,479.1L964.9,551.8M931.0,477.7L969.4,550.5M935.7,476.2L974.0,549.1M940.5,474.7L978.5,547.8M945.2,473.3L983.1,546.4M949.9,471.8L987.6,545.0M954.6,470.3L992.2,543.7M959.4,468.8L996.8,542.3M964.1,467.3L1001.4,540.9M968.9,465.8L1006.0,539.6M973.7,464.4L1010.6,538.2M978.4,462.9L1015.2,536.8M983.2,461.4L1019.8,535.5M988.0,459.9L1024.4,534.1" stroke="#249a3c" stroke-width="0.7"/><polygon points="903.9,486.2 989.0,459.6 1025.3,533.8 943.2,558.3" fill="none" stroke="#a8e0c0" stroke-width="0.9"/><polygon points="949.9,570.6 1031.5,546.4 1063.6,611.9 984.5,634.3" fill="#32c432" stroke="none" stroke-width="1"/><path d="M951.4,570.2L986.1,633.9M955.9,568.8L990.4,632.6M960.4,567.5L994.7,631.4M964.9,566.2L999.1,630.2M969.4,564.8L1003.5,628.9M973.9,563.5L1007.8,627.7M978.4,562.2L1012.2,626.5M983.0,560.8L1016.6,625.2M987.5,559.5L1021.0,624.0M992.0,558.1L1025.4,622.7M996.6,556.8L1029.8,621.5M1001.1,555.5L1034.2,620.2M1005.7,554.1L1038.6,619.0M1010.2,552.8L1043.0,617.7M1014.8,551.4L1047.4,616.5M1019.4,550.0L1051.8,615.2M1024.0,548.7L1056.3,613.9M1028.6,547.3L1060.7,612.7" stroke="#0a5a18" stroke-width="1.25"/><path d="M953.5,569.6L988.0,633.3M957.9,568.2L992.4,632.1M962.4,566.9L996.7,630.9M966.9,565.6L1001.1,629.6M971.4,564.2L1005.4,628.4M976.0,562.9L1009.8,627.1M980.5,561.6L1014.2,625.9M985.0,560.2L1018.5,624.7M989.5,558.9L1022.9,623.4M994.1,557.5L1027.3,622.2M998.6,556.2L1031.7,620.9M1003.2,554.8L1036.1,619.7M1007.7,553.5L1040.6,618.4M1012.3,552.1L1045.0,617.2M1016.9,550.8L1049.4,615.9M1021.4,549.4L1053.8,614.6M1026.0,548.1L1058.3,613.4M1030.6,546.7L1062.7,612.1" stroke="#249a3c" stroke-width="0.7"/><polygon points="949.9,570.6 1031.5,546.4 1063.6,611.9 984.5,634.3" fill="none" stroke="#a8e0c0" stroke-width="0.9"/><line x1="949.9" y1="570.6" x2="1063.6" y2="611.9" stroke="#e4f418" stroke-width="6"/><line x1="949.9" y1="570.6" x2="1063.6" y2="611.9" stroke="#667000" stroke-width="4"/><line x1="1031.5" y1="546.4" x2="984.5" y2="634.3" stroke="#e4f418" stroke-width="6"/><line x1="1031.5" y1="546.4" x2="984.5" y2="634.3" stroke="#667000" stroke-width="4"/><polygon points="990.7,645.6 1069.3,623.4 1098.6,683.3 1022.4,703.9" fill="#32c432" stroke="none" stroke-width="1"/><path d="M992.2,645.1L1023.9,703.5M996.5,643.9L1028.1,702.4M1000.8,642.7L1032.3,701.3M1005.1,641.5L1036.5,700.1M1009.5,640.3L1040.7,699.0M1013.8,639.0L1044.9,697.9M1018.2,637.8L1049.1,696.7M1022.5,636.6L1053.3,695.6M1026.9,635.4L1057.5,694.4M1031.2,634.1L1061.8,693.3M1035.6,632.9L1066.0,692.1M1040.0,631.7L1070.3,691.0M1044.4,630.4L1074.5,689.8M1048.8,629.2L1078.8,688.7M1053.2,628.0L1083.0,687.5M1057.6,626.7L1087.3,686.4M1062.0,625.5L1091.6,685.2M1066.4,624.2L1095.8,684.1" stroke="#0a5a18" stroke-width="1.25"/><path d="M994.1,644.6L1025.8,703.0M998.4,643.4L1030.0,701.9M1002.8,642.2L1034.2,700.8M1007.1,640.9L1038.4,699.6M1011.4,639.7L1042.6,698.5M1015.8,638.5L1046.8,697.3M1020.1,637.3L1051.0,696.2M1024.5,636.0L1055.2,695.1M1028.8,634.8L1059.4,693.9M1033.2,633.6L1063.7,692.8M1037.6,632.3L1067.9,691.6M1042.0,631.1L1072.2,690.5M1046.4,629.9L1076.4,689.3M1050.7,628.6L1080.7,688.2M1055.1,627.4L1084.9,687.0M1059.6,626.2L1089.2,685.9M1064.0,624.9L1093.5,684.7M1068.4,623.7L1097.8,683.5" stroke="#249a3c" stroke-width="0.7"/><polygon points="990.7,645.6 1069.3,623.4 1098.6,683.3 1022.4,703.9" fill="none" stroke="#a8e0c0" stroke-width="0.9"/><line x1="990.7" y1="645.6" x2="1098.6" y2="683.3" stroke="#e4f418" stroke-width="6"/><line x1="990.7" y1="645.6" x2="1098.6" y2="683.3" stroke="#667000" stroke-width="4"/><line x1="1069.3" y1="623.4" x2="1022.4" y2="703.9" stroke="#e4f418" stroke-width="6"/><line x1="1069.3" y1="623.4" x2="1022.4" y2="703.9" stroke="#667000" stroke-width="4"/><polygon points="1028.1,714.3 1103.8,693.9 1129.2,745.7 1055.5,764.8" fill="#32c432" stroke="none" stroke-width="1"/><path d="M1029.5,713.9L1057.0,764.4M1033.7,712.8L1061.0,763.3M1037.8,711.6L1065.1,762.3M1042.0,710.5L1069.1,761.2M1046.2,709.4L1073.2,760.2M1050.4,708.3L1077.3,759.1M1054.6,707.1L1081.3,758.1M1058.8,706.0L1085.4,757.0M1063.0,704.9L1089.5,756.0M1067.2,703.8L1093.6,754.9M1071.4,702.6L1097.7,753.8M1075.6,701.5L1101.8,752.8M1079.8,700.4L1105.9,751.7M1084.1,699.2L1110.0,750.6M1088.3,698.1L1114.1,749.6M1092.6,696.9L1118.2,748.5M1096.8,695.8L1122.4,747.4M1101.1,694.7L1126.5,746.4" stroke="#0a5a18" stroke-width="1.25"/><path d="M1031.4,713.4L1058.8,763.9M1035.6,712.3L1062.8,762.9M1039.7,711.1L1066.9,761.8M1043.9,710.0L1070.9,760.8M1048.1,708.9L1075.0,759.7M1052.3,707.8L1079.1,758.7M1056.5,706.6L1083.2,757.6M1060.7,705.5L1087.2,756.5M1064.9,704.4L1091.3,755.5M1069.1,703.2L1095.4,754.4M1073.3,702.1L1099.5,753.4M1077.5,701.0L1103.6,752.3M1081.7,699.8L1107.7,751.2M1086.0,698.7L1111.8,750.2M1090.2,697.6L1116.0,749.1M1094.5,696.4L1120.1,748.0M1098.7,695.3L1124.2,747.0M1103.0,694.1L1128.4,745.9" stroke="#249a3c" stroke-width="0.7"/><polygon points="1028.1,714.3 1103.8,693.9 1129.2,745.7 1055.5,764.8" fill="none" stroke="#a8e0c0" stroke-width="0.9"/><polygon points="1001.4,455.7 1089.3,428.2 1122.2,504.9 1037.4,530.2" fill="#32c432" stroke="none" stroke-width="1"/><path d="M1003.1,455.1L1039.0,529.7M1007.9,453.6L1043.6,528.3M1012.8,452.1L1048.3,526.9M1017.6,450.6L1053.0,525.5M1022.4,449.1L1057.6,524.2M1027.3,447.6L1062.3,522.8M1032.1,446.1L1067.0,521.4M1037.0,444.6L1071.7,520.0M1041.9,443.0L1076.4,518.6M1046.8,441.5L1081.1,517.1M1051.6,440.0L1085.8,515.7M1056.5,438.4L1090.6,514.3M1061.4,436.9L1095.3,512.9M1066.4,435.4L1100.0,511.5M1071.3,433.8L1104.8,510.1M1076.2,432.3L1109.5,508.7M1081.1,430.8L1114.3,507.3M1086.1,429.2L1119.1,505.8" stroke="#0a5a18" stroke-width="1.25"/><path d="M1005.3,454.5L1041.1,529.1M1010.1,453.0L1045.7,527.7M1014.9,451.5L1050.4,526.3M1019.8,449.9L1055.1,524.9M1024.6,448.4L1059.8,523.5M1029.5,446.9L1064.4,522.1M1034.3,445.4L1069.1,520.7M1039.2,443.9L1073.8,519.3M1044.1,442.3L1078.5,517.9M1049.0,440.8L1083.2,516.5M1053.8,439.3L1088.0,515.1M1058.8,437.8L1092.7,513.7M1063.7,436.2L1097.4,512.3M1068.6,434.7L1102.2,510.9M1073.5,433.1L1106.9,509.5M1078.4,431.6L1111.7,508.0M1083.4,430.1L1116.4,506.6M1088.3,428.5L1121.2,505.2" stroke="#249a3c" stroke-width="0.7"/><polygon points="1001.4,455.7 1089.3,428.2 1122.2,504.9 1037.4,530.2" fill="none" stroke="#a8e0c0" stroke-width="0.9"/><polygon points="1043.5,542.9 1127.7,518.0 1156.7,585.5 1075.2,608.6" fill="#32c432" stroke="none" stroke-width="1"/><path d="M1045.1,542.4L1076.7,608.1M1049.7,541.1L1081.2,606.9M1054.4,539.7L1085.7,605.6M1059.0,538.3L1090.2,604.3M1063.6,536.9L1094.7,603.0M1068.3,535.6L1099.2,601.8M1073.0,534.2L1103.7,600.5M1077.6,532.8L1108.2,599.2M1082.3,531.4L1112.7,597.9M1087.0,530.0L1117.2,596.6M1091.7,528.6L1121.8,595.4M1096.4,527.3L1126.3,594.1M1101.1,525.9L1130.8,592.8M1105.8,524.5L1135.4,591.5M1110.5,523.1L1140.0,590.2M1115.2,521.7L1144.5,588.9M1119.9,520.3L1149.1,587.6M1124.7,518.9L1153.7,586.3" stroke="#0a5a18" stroke-width="1.25"/><path d="M1047.2,541.8L1078.8,607.6M1051.8,540.4L1083.2,606.3M1056.5,539.1L1087.7,605.0M1061.1,537.7L1092.2,603.8M1065.7,536.3L1096.7,602.5M1070.4,534.9L1101.2,601.2M1075.1,533.6L1105.7,599.9M1079.7,532.2L1110.2,598.6M1084.4,530.8L1114.7,597.4M1089.1,529.4L1119.3,596.1M1093.8,528.0L1123.8,594.8M1098.5,526.6L1128.3,593.5M1103.2,525.2L1132.9,592.2M1107.9,523.8L1137.4,590.9M1112.6,522.4L1142.0,589.6M1117.3,521.1L1146.6,588.3M1122.1,519.6L1151.2,587.0M1126.8,518.2L1155.7,585.7" stroke="#249a3c" stroke-width="0.7"/><polygon points="1043.5,542.9 1127.7,518.0 1156.7,585.5 1075.2,608.6" fill="none" stroke="#a8e0c0" stroke-width="0.9"/><line x1="1043.5" y1="542.9" x2="1156.7" y2="585.5" stroke="#e4f418" stroke-width="6"/><line x1="1043.5" y1="542.9" x2="1156.7" y2="585.5" stroke="#667000" stroke-width="4"/><line x1="1127.7" y1="518.0" x2="1075.2" y2="608.6" stroke="#e4f418" stroke-width="6"/><line x1="1127.7" y1="518.0" x2="1075.2" y2="608.6" stroke="#667000" stroke-width="4"/><polygon points="1080.8,620.2 1161.8,597.4 1188.2,659.1 1109.8,680.3" fill="#32c432" stroke="none" stroke-width="1"/><path d="M1082.3,619.7L1111.3,679.9M1086.8,618.5L1115.6,678.7M1091.2,617.2L1119.9,677.6M1095.7,616.0L1124.2,676.4M1100.1,614.7L1128.5,675.2M1104.6,613.5L1132.9,674.0M1109.1,612.2L1137.2,672.9M1113.6,610.9L1141.5,671.7M1118.1,609.7L1145.9,670.5M1122.6,608.4L1150.3,669.3M1127.1,607.1L1154.6,668.2M1131.6,605.9L1159.0,667.0M1136.1,604.6L1163.4,665.8M1140.6,603.3L1167.7,664.6M1145.2,602.0L1172.1,663.4M1149.7,600.8L1176.5,662.2M1154.2,599.5L1180.9,661.0M1158.8,598.2L1185.3,659.9" stroke="#0a5a18" stroke-width="1.25"/><path d="M1084.3,619.2L1113.2,679.4M1088.8,617.9L1117.5,678.2M1093.2,616.7L1121.8,677.0M1097.7,615.4L1126.2,675.9M1102.2,614.2L1130.5,674.7M1106.6,612.9L1134.8,673.5M1111.1,611.6L1139.2,672.3M1115.6,610.4L1143.5,671.2M1120.1,609.1L1147.9,670.0M1124.6,607.8L1152.2,668.8M1129.1,606.6L1156.6,667.6M1133.6,605.3L1160.9,666.5M1138.1,604.0L1165.3,665.3M1142.7,602.8L1169.7,664.1M1147.2,601.5L1174.1,662.9M1151.7,600.2L1178.5,661.7M1156.3,598.9L1182.9,660.5M1160.8,597.6L1187.3,659.3" stroke="#249a3c" stroke-width="0.7"/><polygon points="1080.8,620.2 1161.8,597.4 1188.2,659.1 1109.8,680.3" fill="none" stroke="#a8e0c0" stroke-width="0.9"/><line x1="1080.8" y1="620.2" x2="1188.2" y2="659.1" stroke="#e4f418" stroke-width="6"/><line x1="1080.8" y1="620.2" x2="1188.2" y2="659.1" stroke="#667000" stroke-width="4"/><line x1="1161.8" y1="597.4" x2="1109.8" y2="680.3" stroke="#e4f418" stroke-width="6"/><line x1="1161.8" y1="597.4" x2="1109.8" y2="680.3" stroke="#667000" stroke-width="4"/><polygon points="1114.9,690.9 1192.9,670.0 1215.7,723.3 1140.0,742.9" fill="#32c432" stroke="none" stroke-width="1"/><path d="M1116.4,690.5L1141.4,742.5M1120.7,689.4L1145.6,741.4M1125.0,688.2L1149.7,740.3M1129.3,687.1L1153.9,739.3M1133.6,685.9L1158.1,738.2M1137.9,684.8L1162.3,737.1M1142.2,683.6L1166.5,736.0M1146.5,682.5L1170.6,734.9M1150.8,681.3L1174.8,733.8M1155.1,680.1L1179.1,732.7M1159.5,679.0L1183.3,731.7M1163.8,677.8L1187.5,730.6M1168.2,676.6L1191.7,729.5M1172.5,675.5L1195.9,728.4M1176.9,674.3L1200.2,727.3M1181.3,673.1L1204.4,726.2M1185.6,671.9L1208.6,725.1M1190.0,670.8L1212.9,724.0" stroke="#0a5a18" stroke-width="1.25"/><path d="M1118.3,690.0L1143.3,742.0M1122.6,688.9L1147.4,740.9M1126.9,687.7L1151.6,739.9M1131.2,686.6L1155.8,738.8M1135.5,685.4L1160.0,737.7M1139.8,684.3L1164.1,736.6M1144.1,683.1L1168.3,735.5M1148.4,681.9L1172.5,734.4M1152.8,680.8L1176.7,733.3M1157.1,679.6L1180.9,732.3M1161.4,678.4L1185.2,731.2M1165.8,677.3L1189.4,730.1M1170.1,676.1L1193.6,729.0M1174.5,674.9L1197.8,727.9M1178.9,673.8L1202.1,726.8M1183.2,672.6L1206.3,725.7M1187.6,671.4L1210.6,724.6M1192.0,670.2L1214.8,723.5" stroke="#249a3c" stroke-width="0.7"/><polygon points="1114.9,690.9 1192.9,670.0 1215.7,723.3 1140.0,742.9" fill="none" stroke="#a8e0c0" stroke-width="0.9"/><polygon points="1102.2,424.2 1193.1,395.8 1222.1,475.1 1134.6,501.2" fill="#32c432" stroke="none" stroke-width="1"/><path d="M1103.9,423.6L1136.3,500.7M1108.9,422.1L1141.1,499.3M1113.9,420.5L1145.9,497.8M1118.9,419.0L1150.7,496.4M1123.9,417.4L1155.5,495.0M1128.9,415.8L1160.3,493.5M1133.9,414.3L1165.2,492.1M1139.0,412.7L1170.0,490.6M1144.0,411.1L1174.9,489.2M1149.1,409.5L1179.7,487.7M1154.1,408.0L1184.6,486.3M1159.2,406.4L1189.5,484.8M1164.2,404.8L1194.4,483.4M1169.3,403.2L1199.3,481.9M1174.4,401.6L1204.2,480.4M1179.5,400.0L1209.1,479.0M1184.6,398.4L1214.0,477.5M1189.7,396.8L1218.9,476.0" stroke="#0a5a18" stroke-width="1.25"/><path d="M1106.2,422.9L1138.4,500.1M1111.2,421.4L1143.2,498.6M1116.2,419.8L1148.0,497.2M1121.2,418.3L1152.8,495.7M1126.2,416.7L1157.7,494.3M1131.2,415.1L1162.5,492.9M1136.2,413.5L1167.4,491.4M1141.2,412.0L1172.2,490.0M1146.3,410.4L1177.1,488.5M1151.3,408.8L1181.9,487.1M1156.4,407.2L1186.8,485.6M1161.5,405.7L1191.7,484.2M1166.5,404.1L1196.6,482.7M1171.6,402.5L1201.5,481.2M1176.7,400.9L1206.4,479.8M1181.8,399.3L1211.3,478.3M1186.9,397.7L1216.2,476.8M1192.0,396.1L1221.1,475.4" stroke="#249a3c" stroke-width="0.7"/><polygon points="1102.2,424.2 1193.1,395.8 1222.1,475.1 1134.6,501.2" fill="none" stroke="#a8e0c0" stroke-width="0.9"/><polygon points="1140.1,514.3 1227.0,488.6 1252.6,558.2 1168.6,582.1" fill="#32c432" stroke="none" stroke-width="1"/><path d="M1141.8,513.8L1170.2,581.6M1146.5,512.4L1174.8,580.3M1151.3,511.0L1179.4,579.0M1156.1,509.6L1184.0,577.7M1160.9,508.2L1188.7,576.4M1165.7,506.7L1193.3,575.1M1170.5,505.3L1198.0,573.7M1175.3,503.9L1202.6,572.4M1180.1,502.5L1207.3,571.1M1185.0,501.0L1211.9,569.8M1189.8,499.6L1216.6,568.4M1194.6,498.2L1221.3,567.1M1199.5,496.7L1226.0,565.8M1204.4,495.3L1230.7,564.5M1209.2,493.8L1235.4,563.1M1214.1,492.4L1240.1,561.8M1219.0,491.0L1244.8,560.4M1223.9,489.5L1249.5,559.1" stroke="#0a5a18" stroke-width="1.25"/><path d="M1143.9,513.2L1172.3,581.0M1148.7,511.8L1176.9,579.7M1153.5,510.4L1181.5,578.4M1158.2,508.9L1186.1,577.1M1163.0,507.5L1190.8,575.8M1167.8,506.1L1195.4,574.5M1172.7,504.7L1200.0,573.1M1177.5,503.2L1204.7,571.8M1182.3,501.8L1209.4,570.5M1187.1,500.4L1214.0,569.2M1192.0,499.0L1218.7,567.8M1196.8,497.5L1223.4,566.5M1201.7,496.1L1228.1,565.2M1206.5,494.6L1232.8,563.9M1211.4,493.2L1237.5,562.5M1216.3,491.8L1242.2,561.2M1221.2,490.3L1246.9,559.8M1226.1,488.9L1251.6,558.5" stroke="#249a3c" stroke-width="0.7"/><polygon points="1140.1,514.3 1227.0,488.6 1252.6,558.2 1168.6,582.1" fill="none" stroke="#a8e0c0" stroke-width="0.9"/><line x1="1140.1" y1="514.3" x2="1252.6" y2="558.2" stroke="#e4f418" stroke-width="6"/><line x1="1140.1" y1="514.3" x2="1252.6" y2="558.2" stroke="#667000" stroke-width="4"/><line x1="1227.0" y1="488.6" x2="1168.6" y2="582.1" stroke="#e4f418" stroke-width="6"/><line x1="1227.0" y1="488.6" x2="1168.6" y2="582.1" stroke="#667000" stroke-width="4"/><polygon points="1173.6,594.0 1257.1,570.5 1280.4,634.1 1199.6,656.0" fill="#32c432" stroke="none" stroke-width="1"/><path d="M1175.2,593.6L1201.2,655.6M1179.8,592.3L1205.6,654.4M1184.4,591.0L1210.1,653.2M1189.0,589.7L1214.5,652.0M1193.6,588.4L1219.0,650.8M1198.2,587.1L1223.4,649.5M1202.8,585.8L1227.9,648.3M1207.4,584.5L1232.4,647.1M1212.1,583.2L1236.8,645.9M1216.7,581.9L1241.3,644.7M1221.3,580.6L1245.8,643.5M1226.0,579.3L1250.3,642.3M1230.6,578.0L1254.8,641.1M1235.3,576.7L1259.3,639.8M1240.0,575.3L1263.8,638.6M1244.6,574.0L1268.4,637.4M1249.3,572.7L1272.9,636.2M1254.0,571.4L1277.4,634.9" stroke="#0a5a18" stroke-width="1.25"/><path d="M1177.3,593.0L1203.2,655.0M1181.9,591.7L1207.6,653.8M1186.4,590.4L1212.1,652.6M1191.0,589.1L1216.5,651.4M1195.6,587.8L1221.0,650.2M1200.3,586.5L1225.4,649.0M1204.9,585.2L1229.9,647.8M1209.5,583.9L1234.4,646.6M1214.1,582.6L1238.9,645.4M1218.8,581.3L1243.3,644.2M1223.4,580.0L1247.8,642.9M1228.1,578.7L1252.3,641.7M1232.7,577.4L1256.8,640.5M1237.4,576.1L1261.4,639.3M1242.1,574.8L1265.9,638.1M1246.8,573.4L1270.4,636.8M1251.4,572.1L1274.9,635.6M1256.1,570.8L1279.5,634.4" stroke="#249a3c" stroke-width="0.7"/><polygon points="1173.6,594.0 1257.1,570.5 1280.4,634.1 1199.6,656.0" fill="none" stroke="#a8e0c0" stroke-width="0.9"/><line x1="1173.6" y1="594.0" x2="1280.4" y2="634.1" stroke="#e4f418" stroke-width="6"/><line x1="1173.6" y1="594.0" x2="1280.4" y2="634.1" stroke="#667000" stroke-width="4"/><line x1="1257.1" y1="570.5" x2="1199.6" y2="656.0" stroke="#e4f418" stroke-width="6"/><line x1="1257.1" y1="570.5" x2="1199.6" y2="656.0" stroke="#667000" stroke-width="4"/><polygon points="1204.3,666.9 1284.5,645.4 1304.6,700.2 1226.7,720.4" fill="#32c432" stroke="none" stroke-width="1"/><path d="M1205.8,666.5L1228.2,720.0M1210.2,665.3L1232.5,718.9M1214.6,664.2L1236.8,717.8M1219.0,663.0L1241.1,716.7M1223.5,661.8L1245.4,715.6M1227.9,660.6L1249.7,714.4M1232.3,659.4L1254.0,713.3M1236.8,658.2L1258.3,712.2M1241.2,657.0L1262.6,711.1M1245.7,655.8L1266.9,710.0M1250.1,654.6L1271.3,708.9M1254.6,653.4L1275.6,707.7M1259.1,652.2L1279.9,706.6M1263.6,651.0L1284.3,705.5M1268.1,649.8L1288.6,704.3M1272.6,648.6L1293.0,703.2M1277.1,647.4L1297.4,702.1M1281.6,646.2L1301.7,701.0" stroke="#0a5a18" stroke-width="1.25"/><path d="M1207.8,666.0L1230.1,719.5M1212.2,664.8L1234.4,718.4M1216.6,663.6L1238.7,717.3M1221.0,662.4L1243.0,716.2M1225.5,661.2L1247.3,715.1M1229.9,660.1L1251.6,713.9M1234.3,658.9L1255.9,712.8M1238.8,657.7L1260.2,711.7M1243.2,656.5L1264.6,710.6M1247.7,655.3L1268.9,709.5M1252.2,654.1L1273.2,708.3M1256.6,652.9L1277.6,707.2M1261.1,651.7L1281.9,706.1M1265.6,650.5L1286.2,705.0M1270.1,649.3L1290.6,703.8M1274.6,648.0L1295.0,702.7M1279.1,646.8L1299.3,701.6M1283.6,645.6L1303.7,700.4" stroke="#249a3c" stroke-width="0.7"/><polygon points="1204.3,666.9 1284.5,645.4 1304.6,700.2 1226.7,720.4" fill="none" stroke="#a8e0c0" stroke-width="0.9"/><polygon points="1206.4,391.6 1300.4,362.2 1325.3,444.3 1234.9,471.2" fill="#32c432" stroke="none" stroke-width="1"/><path d="M1208.2,391.1L1236.7,470.7M1213.3,389.4L1241.6,469.2M1218.5,387.8L1246.6,467.8M1223.7,386.2L1251.6,466.3M1228.8,384.6L1256.5,464.8M1234.0,383.0L1261.5,463.3M1239.2,381.4L1266.5,461.8M1244.4,379.7L1271.5,460.3M1249.6,378.1L1276.6,458.8M1254.9,376.5L1281.6,457.3M1260.1,374.8L1286.6,455.8M1265.3,373.2L1291.6,454.3M1270.6,371.6L1296.7,452.8M1275.8,369.9L1301.7,451.3M1281.1,368.3L1306.8,449.8M1286.4,366.6L1311.9,448.3M1291.6,365.0L1317.0,446.8M1296.9,363.3L1322.0,445.2" stroke="#0a5a18" stroke-width="1.25"/><path d="M1210.5,390.3L1238.9,470.1M1215.7,388.7L1243.9,468.6M1220.8,387.1L1248.8,467.1M1226.0,385.5L1253.8,465.6M1231.2,383.9L1258.8,464.1M1236.4,382.2L1263.8,462.6M1241.6,380.6L1268.8,461.1M1246.8,379.0L1273.8,459.6M1252.0,377.4L1278.8,458.1M1257.2,375.7L1283.8,456.7M1262.4,374.1L1288.9,455.1M1267.7,372.5L1293.9,453.6M1272.9,370.8L1299.0,452.1M1278.2,369.2L1304.0,450.6M1283.5,367.5L1309.1,449.1M1288.7,365.9L1314.2,447.6M1294.0,364.2L1319.2,446.1M1299.3,362.6L1324.3,444.6" stroke="#249a3c" stroke-width="0.7"/><polygon points="1206.4,391.6 1300.4,362.2 1325.3,444.3 1234.9,471.2" fill="none" stroke="#a8e0c0" stroke-width="0.9"/><polygon points="1239.8,484.8 1329.6,458.2 1351.5,530.2 1264.9,554.7" fill="#32c432" stroke="none" stroke-width="1"/><path d="M1241.5,484.3L1266.5,554.3M1246.4,482.8L1271.3,552.9M1251.4,481.4L1276.0,551.6M1256.3,479.9L1280.8,550.2M1261.3,478.4L1285.6,548.9M1266.2,477.0L1290.4,547.5M1271.2,475.5L1295.2,546.1M1276.2,474.0L1300.0,544.8M1281.1,472.6L1304.8,543.4M1286.1,471.1L1309.6,542.1M1291.1,469.6L1314.4,540.7M1296.1,468.1L1319.2,539.3M1301.1,466.6L1324.1,537.9M1306.2,465.1L1328.9,536.6M1311.2,463.7L1333.7,535.2M1316.2,462.2L1338.6,533.8M1321.3,460.7L1343.5,532.4M1326.3,459.2L1348.3,531.1" stroke="#0a5a18" stroke-width="1.25"/><path d="M1243.7,483.6L1268.7,553.7M1248.7,482.2L1273.4,552.3M1253.6,480.7L1278.2,551.0M1258.5,479.2L1283.0,549.6M1263.5,477.8L1287.7,548.3M1268.4,476.3L1292.5,546.9M1273.4,474.8L1297.3,545.5M1278.4,473.4L1302.1,544.2M1283.4,471.9L1306.9,542.8M1288.4,470.4L1311.7,541.4M1293.4,468.9L1316.6,540.1M1298.4,467.5L1321.4,538.7M1303.4,466.0L1326.2,537.3M1308.4,464.5L1331.1,536.0M1313.4,463.0L1335.9,534.6M1318.5,461.5L1340.8,533.2M1323.5,460.0L1345.7,531.8M1328.6,458.5L1350.5,530.4" stroke="#249a3c" stroke-width="0.7"/><polygon points="1239.8,484.8 1329.6,458.2 1351.5,530.2 1264.9,554.7" fill="none" stroke="#a8e0c0" stroke-width="0.9"/><line x1="1239.8" y1="484.8" x2="1351.5" y2="530.2" stroke="#e4f418" stroke-width="6"/><line x1="1239.8" y1="484.8" x2="1351.5" y2="530.2" stroke="#667000" stroke-width="4"/><line x1="1329.6" y1="458.2" x2="1264.9" y2="554.7" stroke="#e4f418" stroke-width="6"/><line x1="1329.6" y1="458.2" x2="1264.9" y2="554.7" stroke="#667000" stroke-width="4"/><polygon points="1269.3,567.1 1355.4,542.8 1375.3,608.4 1292.2,630.9" fill="#32c432" stroke="none" stroke-width="1"/><path d="M1270.9,566.6L1293.8,630.5M1275.7,565.3L1298.4,629.3M1280.4,564.0L1302.9,628.0M1285.1,562.6L1307.5,626.8M1289.9,561.3L1312.1,625.6M1294.6,560.0L1316.7,624.3M1299.4,558.6L1321.3,623.1M1304.2,557.3L1325.9,621.8M1308.9,555.9L1330.5,620.6M1313.7,554.6L1335.1,619.3M1318.5,553.2L1339.7,618.1M1323.3,551.9L1344.4,616.8M1328.1,550.5L1349.0,615.6M1332.9,549.2L1353.7,614.3M1337.7,547.8L1358.3,613.1M1342.6,546.5L1363.0,611.8M1347.4,545.1L1367.6,610.5M1352.2,543.7L1372.3,609.3" stroke="#0a5a18" stroke-width="1.25"/><path d="M1273.1,566.0L1295.8,630.0M1277.8,564.7L1300.4,628.7M1282.5,563.4L1305.0,627.5M1287.3,562.0L1309.6,626.2M1292.0,560.7L1314.2,625.0M1296.8,559.3L1318.8,623.8M1301.5,558.0L1323.4,622.5M1306.3,556.7L1328.0,621.3M1311.1,555.3L1332.6,620.0M1315.9,554.0L1337.2,618.8M1320.7,552.6L1341.8,617.5M1325.5,551.3L1346.5,616.3M1330.3,549.9L1351.1,615.0M1335.1,548.6L1355.8,613.7M1339.9,547.2L1360.4,612.5M1344.7,545.8L1365.1,611.2M1349.6,544.5L1369.7,610.0M1354.4,543.1L1374.4,608.7" stroke="#249a3c" stroke-width="0.7"/><polygon points="1269.3,567.1 1355.4,542.8 1375.3,608.4 1292.2,630.9" fill="none" stroke="#a8e0c0" stroke-width="0.9"/><line x1="1269.3" y1="567.1" x2="1375.3" y2="608.4" stroke="#e4f418" stroke-width="6"/><line x1="1269.3" y1="567.1" x2="1375.3" y2="608.4" stroke="#667000" stroke-width="4"/><line x1="1355.4" y1="542.8" x2="1292.2" y2="630.9" stroke="#e4f418" stroke-width="6"/><line x1="1355.4" y1="542.8" x2="1292.2" y2="630.9" stroke="#667000" stroke-width="4"/><polygon points="1296.2,642.2 1378.9,620.0 1396.1,676.5 1316.0,697.3" fill="#32c432" stroke="none" stroke-width="1"/><path d="M1297.8,641.8L1317.5,696.9M1302.4,640.6L1321.9,695.7M1306.9,639.4L1326.3,694.6M1311.5,638.1L1330.7,693.4M1316.0,636.9L1335.1,692.3M1320.6,635.7L1339.6,691.2M1325.1,634.5L1344.0,690.0M1329.7,633.2L1348.4,688.9M1334.3,632.0L1352.9,687.7M1338.9,630.8L1357.3,686.5M1343.5,629.5L1361.8,685.4M1348.1,628.3L1366.3,684.2M1352.7,627.1L1370.7,683.1M1357.3,625.8L1375.2,681.9M1361.9,624.6L1379.7,680.8M1366.6,623.3L1384.2,679.6M1371.2,622.1L1388.7,678.4M1375.9,620.8L1393.2,677.3" stroke="#0a5a18" stroke-width="1.25"/><path d="M1299.9,641.3L1319.5,696.4M1304.4,640.0L1323.9,695.2M1309.0,638.8L1328.3,694.1M1313.5,637.6L1332.7,692.9M1318.1,636.4L1337.1,691.8M1322.6,635.1L1341.6,690.6M1327.2,633.9L1346.0,689.5M1331.8,632.7L1350.4,688.3M1336.4,631.5L1354.9,687.2M1341.0,630.2L1359.3,686.0M1345.6,629.0L1363.8,684.9M1350.2,627.7L1368.3,683.7M1354.8,626.5L1372.7,682.6M1359.4,625.3L1377.2,681.4M1364.0,624.0L1381.7,680.2M1368.7,622.8L1386.2,679.1M1373.3,621.5L1390.7,677.9M1377.9,620.3L1395.2,676.7" stroke="#249a3c" stroke-width="0.7"/><polygon points="1296.2,642.2 1378.9,620.0 1396.1,676.5 1316.0,697.3" fill="none" stroke="#a8e0c0" stroke-width="0.9"/><polygon points="1314.2,357.9 1411.4,327.5 1432.0,412.4 1338.6,440.3" fill="#32c432" stroke="none" stroke-width="1"/><path d="M1316.0,357.4L1340.4,439.8M1321.3,355.7L1345.5,438.2M1326.7,354.0L1350.6,436.7M1332.0,352.3L1355.8,435.2M1337.4,350.7L1360.9,433.6M1342.8,349.0L1366.1,432.1M1348.1,347.3L1371.3,430.6M1353.5,345.6L1376.4,429.0M1358.9,343.9L1381.6,427.5M1364.3,342.3L1386.8,425.9M1369.7,340.6L1392.0,424.4M1375.2,338.9L1397.2,422.8M1380.6,337.2L1402.4,421.3M1386.0,335.5L1407.6,419.7M1391.5,333.8L1412.9,418.1M1396.9,332.1L1418.1,416.6M1402.4,330.4L1423.4,415.0M1407.9,328.6L1428.6,413.4" stroke="#0a5a18" stroke-width="1.25"/><path d="M1318.4,356.6L1342.7,439.1M1323.7,354.9L1347.8,437.6M1329.1,353.3L1353.0,436.0M1334.4,351.6L1358.1,434.5M1339.8,349.9L1363.3,432.9M1345.2,348.2L1368.4,431.4M1350.6,346.6L1373.6,429.9M1355.9,344.9L1378.8,428.3M1361.3,343.2L1383.9,426.8M1366.8,341.5L1389.1,425.2M1372.2,339.8L1394.3,423.7M1377.6,338.1L1399.6,422.1M1383.0,336.4L1404.8,420.6M1388.5,334.7L1410.0,419.0M1393.9,333.0L1415.2,417.4M1399.4,331.3L1420.5,415.9M1404.9,329.6L1425.7,414.3M1410.3,327.9L1431.0,412.7" stroke="#249a3c" stroke-width="0.7"/><polygon points="1314.2,357.9 1411.4,327.5 1432.0,412.4 1338.6,440.3" fill="none" stroke="#a8e0c0" stroke-width="0.9"/><polygon points="1342.8,454.3 1435.5,426.8 1453.6,501.2 1364.2,526.6" fill="#32c432" stroke="none" stroke-width="1"/><path d="M1344.5,453.8L1365.9,526.1M1349.6,452.3L1370.8,524.7M1354.7,450.8L1375.7,523.3M1359.8,449.3L1380.6,521.9M1364.9,447.7L1385.6,520.5M1370.1,446.2L1390.5,519.1M1375.2,444.7L1395.5,517.7M1380.3,443.2L1400.4,516.3M1385.5,441.7L1405.4,514.9M1390.6,440.1L1410.3,513.5M1395.8,438.6L1415.3,512.1M1401.0,437.1L1420.3,510.6M1406.1,435.5L1425.3,509.2M1411.3,434.0L1430.3,507.8M1416.5,432.5L1435.3,506.4M1421.7,430.9L1440.3,505.0M1426.9,429.4L1445.3,503.5M1432.2,427.8L1450.3,502.1" stroke="#0a5a18" stroke-width="1.25"/><path d="M1346.8,453.1L1368.1,525.4M1351.9,451.6L1373.0,524.1M1357.0,450.1L1377.9,522.7M1362.1,448.6L1382.9,521.3M1367.2,447.1L1387.8,519.9M1372.4,445.5L1392.7,518.5M1377.5,444.0L1397.7,517.1M1382.6,442.5L1402.6,515.6M1387.8,441.0L1407.6,514.2M1392.9,439.5L1412.6,512.8M1398.1,437.9L1417.5,511.4M1403.3,436.4L1422.5,510.0M1408.5,434.9L1427.5,508.6M1413.7,433.3L1432.5,507.2M1418.9,431.8L1437.5,505.7M1424.1,430.2L1442.5,504.3M1429.3,428.7L1447.6,502.9M1434.5,427.1L1452.6,501.5" stroke="#249a3c" stroke-width="0.7"/><polygon points="1342.8,454.3 1435.5,426.8 1453.6,501.2 1364.2,526.6" fill="none" stroke="#a8e0c0" stroke-width="0.9"/><line x1="1342.8" y1="454.3" x2="1453.6" y2="501.2" stroke="#e4f418" stroke-width="6"/><line x1="1342.8" y1="454.3" x2="1453.6" y2="501.2" stroke="#667000" stroke-width="4"/><line x1="1435.5" y1="426.8" x2="1364.2" y2="526.6" stroke="#e4f418" stroke-width="6"/><line x1="1435.5" y1="426.8" x2="1364.2" y2="526.6" stroke="#667000" stroke-width="4"/><polygon points="1368.0,539.3 1456.8,514.3 1473.2,582.0 1387.5,605.1" fill="#32c432" stroke="none" stroke-width="1"/><path d="M1369.7,538.8L1389.2,604.7M1374.6,537.4L1393.9,603.4M1379.4,536.1L1398.6,602.2M1384.3,534.7L1403.3,600.9M1389.2,533.3L1408.0,599.6M1394.1,531.9L1412.8,598.3M1399.0,530.5L1417.5,597.0M1403.9,529.2L1422.2,595.8M1408.9,527.8L1427.0,594.5M1413.8,526.4L1431.7,593.2M1418.7,525.0L1436.5,591.9M1423.7,523.6L1441.3,590.6M1428.6,522.2L1446.1,589.3M1433.6,520.8L1450.9,588.0M1438.6,519.4L1455.6,586.7M1443.6,518.0L1460.5,585.4M1448.5,516.6L1465.3,584.1M1453.5,515.2L1470.1,582.8" stroke="#0a5a18" stroke-width="1.25"/><path d="M1371.9,538.2L1391.3,604.1M1376.7,536.8L1396.0,602.9M1381.6,535.4L1400.7,601.6M1386.5,534.1L1405.4,600.3M1391.4,532.7L1410.1,599.0M1396.3,531.3L1414.9,597.7M1401.2,529.9L1419.6,596.5M1406.2,528.5L1424.4,595.2M1411.1,527.2L1429.1,593.9M1416.0,525.8L1433.9,592.6M1421.0,524.4L1438.7,591.3M1425.9,523.0L1443.4,590.0M1430.9,521.6L1448.2,588.7M1435.8,520.2L1453.0,587.4M1440.8,518.8L1457.8,586.1M1445.8,517.4L1462.6,584.8M1450.8,516.0L1467.4,583.5M1455.8,514.6L1472.2,582.2" stroke="#249a3c" stroke-width="0.7"/><polygon points="1368.0,539.3 1456.8,514.3 1473.2,582.0 1387.5,605.1" fill="none" stroke="#a8e0c0" stroke-width="0.9"/><line x1="1368.0" y1="539.3" x2="1473.2" y2="582.0" stroke="#e4f418" stroke-width="6"/><line x1="1368.0" y1="539.3" x2="1473.2" y2="582.0" stroke="#667000" stroke-width="4"/><line x1="1456.8" y1="514.3" x2="1387.5" y2="605.1" stroke="#e4f418" stroke-width="6"/><line x1="1456.8" y1="514.3" x2="1387.5" y2="605.1" stroke="#667000" stroke-width="4"/><polygon points="1391.0,616.8 1476.1,593.9 1490.2,652.1 1407.8,673.5" fill="#32c432" stroke="none" stroke-width="1"/><path d="M1392.6,616.3L1409.4,673.1M1397.3,615.1L1413.9,671.9M1402.0,613.8L1418.4,670.7M1406.6,612.6L1423.0,669.5M1411.3,611.3L1427.5,668.4M1416.0,610.1L1432.1,667.2M1420.8,608.8L1436.6,666.0M1425.5,607.5L1441.2,664.8M1430.2,606.3L1445.8,663.6M1434.9,605.0L1450.4,662.4M1439.7,603.7L1454.9,661.3M1444.4,602.4L1459.5,660.1M1449.1,601.2L1464.1,658.9M1453.9,599.9L1468.7,657.7M1458.7,598.6L1473.4,656.5M1463.4,597.3L1478.0,655.3M1468.2,596.0L1482.6,654.1M1473.0,594.8L1487.2,652.9" stroke="#0a5a18" stroke-width="1.25"/><path d="M1394.7,615.8L1411.4,672.5M1399.4,614.5L1415.9,671.4M1404.1,613.3L1420.5,670.2M1408.8,612.0L1425.0,669.0M1413.5,610.7L1429.6,667.8M1418.2,609.5L1434.1,666.6M1422.9,608.2L1438.7,665.5M1427.6,606.9L1443.3,664.3M1432.3,605.7L1447.8,663.1M1437.0,604.4L1452.4,661.9M1441.8,603.1L1457.0,660.7M1446.5,601.9L1461.6,659.5M1451.3,600.6L1466.2,658.3M1456.0,599.3L1470.8,657.1M1460.8,598.0L1475.4,655.9M1465.6,596.7L1480.1,654.7M1470.4,595.5L1484.7,653.5M1475.2,594.2L1489.3,652.3" stroke="#249a3c" stroke-width="0.7"/><polygon points="1391.0,616.8 1476.1,593.9 1490.2,652.1 1407.8,673.5" fill="none" stroke="#a8e0c0" stroke-width="0.9"/><polygon points="1425.7,323.1 1526.8,291.5 1542.7,379.4 1445.7,408.3" fill="#32c432" stroke="none" stroke-width="1"/><path d="M1427.6,322.5L1447.6,407.8M1433.2,320.7L1452.9,406.2M1438.7,319.0L1458.2,404.6M1444.3,317.3L1463.6,403.0M1449.9,315.5L1468.9,401.4M1455.4,313.8L1474.3,399.8M1461.0,312.0L1479.6,398.2M1466.6,310.3L1485.0,396.6M1472.2,308.5L1490.4,395.0M1477.8,306.8L1495.8,393.4M1483.5,305.0L1501.2,391.8M1489.1,303.3L1506.6,390.2M1494.7,301.5L1512.0,388.6M1500.4,299.7L1517.4,386.9M1506.1,298.0L1522.8,385.3M1511.7,296.2L1528.3,383.7M1517.4,294.4L1533.7,382.1M1523.1,292.6L1539.2,380.4" stroke="#0a5a18" stroke-width="1.25"/><path d="M1430.1,321.7L1450.0,407.1M1435.7,320.0L1455.3,405.5M1441.2,318.2L1460.6,403.9M1446.8,316.5L1466.0,402.3M1452.4,314.7L1471.3,400.7M1457.9,313.0L1476.7,399.1M1463.5,311.2L1482.0,397.5M1469.1,309.5L1487.4,395.9M1474.7,307.7L1492.8,394.3M1480.4,306.0L1498.2,392.7M1486.0,304.2L1503.6,391.1M1491.6,302.5L1509.0,389.5M1497.3,300.7L1514.4,387.8M1502.9,298.9L1519.8,386.2M1508.6,297.2L1525.3,384.6M1514.3,295.4L1530.7,383.0M1520.0,293.6L1536.2,381.3M1525.7,291.8L1541.6,379.7" stroke="#249a3c" stroke-width="0.7"/><polygon points="1425.7,323.1 1526.8,291.5 1542.7,379.4 1445.7,408.3" fill="none" stroke="#a8e0c0" stroke-width="0.9"/><polygon points="1449.1,422.8 1545.4,394.3 1559.3,471.2 1466.7,497.5" fill="#32c432" stroke="none" stroke-width="1"/><path d="M1451.0,422.3L1468.5,497.0M1456.3,420.7L1473.6,495.5M1461.6,419.1L1478.6,494.1M1466.9,417.6L1483.7,492.6M1472.2,416.0L1488.8,491.2M1477.5,414.4L1494.0,489.7M1482.8,412.9L1499.1,488.3M1488.1,411.3L1504.2,486.8M1493.5,409.7L1509.3,485.4M1498.8,408.1L1514.5,483.9M1504.2,406.5L1519.6,482.4M1509.5,404.9L1524.8,481.0M1514.9,403.3L1530.0,479.5M1520.3,401.8L1535.1,478.0M1525.7,400.2L1540.3,476.6M1531.1,398.6L1545.5,475.1M1536.5,397.0L1550.7,473.6M1541.9,395.4L1555.9,472.1" stroke="#0a5a18" stroke-width="1.25"/><path d="M1453.4,421.6L1470.8,496.3M1458.6,420.0L1475.8,494.9M1463.9,418.4L1480.9,493.4M1469.2,416.9L1486.0,492.0M1474.5,415.3L1491.1,490.5M1479.9,413.7L1496.3,489.1M1485.2,412.1L1501.4,487.6M1490.5,410.6L1506.5,486.2M1495.9,409.0L1511.7,484.7M1501.2,407.4L1516.8,483.2M1506.6,405.8L1522.0,481.8M1511.9,404.2L1527.1,480.3M1517.3,402.6L1532.3,478.9M1522.7,401.0L1537.5,477.4M1528.1,399.4L1542.7,475.9M1533.5,397.8L1547.9,474.4M1538.9,396.2L1553.1,473.0M1544.3,394.6L1558.3,471.5" stroke="#249a3c" stroke-width="0.7"/><polygon points="1449.1,422.8 1545.4,394.3 1559.3,471.2 1466.7,497.5" fill="none" stroke="#a8e0c0" stroke-width="0.9"/><line x1="1449.1" y1="422.8" x2="1559.3" y2="471.2" stroke="#e4f418" stroke-width="6"/><line x1="1449.1" y1="422.8" x2="1559.3" y2="471.2" stroke="#667000" stroke-width="4"/><line x1="1545.4" y1="394.3" x2="1466.7" y2="497.5" stroke="#e4f418" stroke-width="6"/><line x1="1545.4" y1="394.3" x2="1466.7" y2="497.5" stroke="#667000" stroke-width="4"/><polygon points="1469.8,510.6 1561.8,484.7 1574.4,554.6 1485.8,578.6" fill="#32c432" stroke="none" stroke-width="1"/><path d="M1471.5,510.1L1487.5,578.1M1476.6,508.7L1492.3,576.8M1481.6,507.3L1497.2,575.5M1486.7,505.9L1502.1,574.2M1491.8,504.4L1507.0,572.8M1496.9,503.0L1511.9,571.5M1501.9,501.6L1516.8,570.2M1507.0,500.1L1521.7,568.9M1512.1,498.7L1526.6,567.5M1517.2,497.3L1531.5,566.2M1522.4,495.8L1536.4,564.9M1527.5,494.4L1541.4,563.5M1532.6,492.9L1546.3,562.2M1537.8,491.5L1551.3,560.8M1542.9,490.0L1556.2,559.5M1548.1,488.6L1561.2,558.2M1553.2,487.1L1566.2,556.8M1558.4,485.7L1571.2,555.5" stroke="#0a5a18" stroke-width="1.25"/><path d="M1473.8,509.5L1489.6,577.5M1478.9,508.1L1494.5,576.2M1483.9,506.6L1499.4,574.9M1489.0,505.2L1504.3,573.6M1494.1,503.8L1509.2,572.2M1499.1,502.4L1514.1,570.9M1504.2,500.9L1519.0,569.6M1509.3,499.5L1523.9,568.3M1514.4,498.0L1528.8,566.9M1519.5,496.6L1533.7,565.6M1524.7,495.2L1538.7,564.3M1529.8,493.7L1543.6,562.9M1534.9,492.3L1548.6,561.6M1540.1,490.8L1553.5,560.2M1545.2,489.4L1558.5,558.9M1550.4,487.9L1563.4,557.6M1555.6,486.5L1568.4,556.2M1560.7,485.0L1573.4,554.9" stroke="#249a3c" stroke-width="0.7"/><polygon points="1469.8,510.6 1561.8,484.7 1574.4,554.6 1485.8,578.6" fill="none" stroke="#a8e0c0" stroke-width="0.9"/><line x1="1469.8" y1="510.6" x2="1574.4" y2="554.6" stroke="#e4f418" stroke-width="6"/><line x1="1469.8" y1="510.6" x2="1574.4" y2="554.6" stroke="#667000" stroke-width="4"/><line x1="1561.8" y1="484.7" x2="1485.8" y2="578.6" stroke="#e4f418" stroke-width="6"/><line x1="1561.8" y1="484.7" x2="1485.8" y2="578.6" stroke="#667000" stroke-width="4"/><polygon points="1488.6,590.6 1576.6,566.9 1587.5,626.9 1502.3,649.0" fill="#32c432" stroke="none" stroke-width="1"/><path d="M1490.3,590.1L1503.9,648.6M1495.1,588.8L1508.6,647.3M1499.9,587.5L1513.3,646.1M1504.8,586.2L1518.0,644.9M1509.6,584.9L1522.7,643.7M1514.5,583.6L1527.4,642.5M1519.4,582.3L1532.1,641.3M1524.2,581.0L1536.8,640.0M1529.1,579.7L1541.5,638.8M1534.0,578.4L1546.3,637.6M1538.9,577.0L1551.0,636.4M1543.8,575.7L1555.8,635.1M1548.7,574.4L1560.5,633.9M1553.7,573.1L1565.3,632.7M1558.6,571.8L1570.0,631.4M1563.5,570.4L1574.8,630.2M1568.5,569.1L1579.6,629.0M1573.4,567.8L1584.4,627.7" stroke="#0a5a18" stroke-width="1.25"/><path d="M1492.4,589.5L1506.0,648.0M1497.3,588.2L1510.7,646.8M1502.1,586.9L1515.4,645.6M1507.0,585.6L1520.1,644.4M1511.8,584.3L1524.8,643.2M1516.7,583.0L1529.5,641.9M1521.6,581.7L1534.2,640.7M1526.4,580.4L1538.9,639.5M1531.3,579.1L1543.7,638.3M1536.2,577.8L1548.4,637.0M1541.1,576.5L1553.1,635.8M1546.0,575.1L1557.9,634.6M1551.0,573.8L1562.7,633.3M1555.9,572.5L1567.4,632.1M1560.8,571.2L1572.2,630.9M1565.7,569.8L1577.0,629.6M1570.7,568.5L1581.7,628.4M1575.6,567.2L1586.5,627.2" stroke="#249a3c" stroke-width="0.7"/><polygon points="1488.6,590.6 1576.6,566.9 1587.5,626.9 1502.3,649.0" fill="none" stroke="#a8e0c0" stroke-width="0.9"/><polygon points="807.8,516.2 809.5,515.7 973.4,786.0 972.0,786.4" fill="#8c8ac8" stroke="none" stroke-width="1"/><line x1="797.8" y1="519.3" x2="963.2" y2="788.7" stroke="#b4b4f4" stroke-width="1"/><line x1="809.5" y1="515.7" x2="973.4" y2="786.0" stroke="#b4b4f4" stroke-width="1"/><line x1="807.8" y1="516.2" x2="972.0" y2="786.4" stroke="#b4b4f4" stroke-width="0.7"/><polygon points="793.2,511.8 804.9,508.1 809.5,515.7 797.8,519.3" fill="none" stroke="#b4b4f4" stroke-width="0.9"/><polygon points="902.2,486.7 903.9,486.2 1055.5,764.8 1054.0,765.1" fill="#8c8ac8" stroke="none" stroke-width="1"/><line x1="891.8" y1="489.9" x2="1045.1" y2="767.5" stroke="#b4b4f4" stroke-width="1"/><line x1="903.9" y1="486.2" x2="1055.5" y2="764.8" stroke="#b4b4f4" stroke-width="1"/><line x1="902.2" y1="486.7" x2="1054.0" y2="765.1" stroke="#b4b4f4" stroke-width="0.7"/><polygon points="887.5,482.2 899.7,478.4 903.9,486.2 891.8,489.9" fill="none" stroke="#b4b4f4" stroke-width="0.9"/><polygon points="999.6,456.2 1001.4,455.7 1140.0,742.9 1138.4,743.3" fill="#8c8ac8" stroke="none" stroke-width="1"/><line x1="989.0" y1="459.6" x2="1129.2" y2="745.7" stroke="#b4b4f4" stroke-width="1"/><line x1="1001.4" y1="455.7" x2="1140.0" y2="742.9" stroke="#b4b4f4" stroke-width="1"/><line x1="999.6" y1="456.2" x2="1138.4" y2="743.3" stroke="#b4b4f4" stroke-width="0.7"/><polygon points="985.0,451.6 997.5,447.6 1001.4,455.7 989.0,459.6" fill="none" stroke="#b4b4f4" stroke-width="0.9"/><polygon points="1100.3,424.8 1102.2,424.2 1226.7,720.4 1225.1,720.8" fill="#8c8ac8" stroke="none" stroke-width="1"/><line x1="1089.3" y1="428.2" x2="1215.7" y2="723.3" stroke="#b4b4f4" stroke-width="1"/><line x1="1102.2" y1="424.2" x2="1226.7" y2="720.4" stroke="#b4b4f4" stroke-width="1"/><line x1="1100.3" y1="424.8" x2="1225.1" y2="720.8" stroke="#b4b4f4" stroke-width="0.7"/><polygon points="1085.8,419.9 1098.7,415.9 1102.2,424.2 1089.3,428.2" fill="none" stroke="#b4b4f4" stroke-width="0.9"/><polygon points="1204.5,392.2 1206.4,391.6 1316.0,697.3 1314.3,697.7" fill="#8c8ac8" stroke="none" stroke-width="1"/><line x1="1193.1" y1="395.8" x2="1304.6" y2="700.2" stroke="#b4b4f4" stroke-width="1"/><line x1="1206.4" y1="391.6" x2="1316.0" y2="697.3" stroke="#b4b4f4" stroke-width="1"/><line x1="1204.5" y1="392.2" x2="1314.3" y2="697.7" stroke="#b4b4f4" stroke-width="0.7"/><polygon points="1189.9,387.2 1203.3,383.0 1206.4,391.6 1193.1,395.8" fill="none" stroke="#b4b4f4" stroke-width="0.9"/><polygon points="1312.2,358.6 1314.2,357.9 1407.8,673.5 1406.1,673.9" fill="#8c8ac8" stroke="none" stroke-width="1"/><line x1="1300.4" y1="362.2" x2="1396.1" y2="676.5" stroke="#b4b4f4" stroke-width="1"/><line x1="1314.2" y1="357.9" x2="1407.8" y2="673.5" stroke="#b4b4f4" stroke-width="1"/><line x1="1312.2" y1="358.6" x2="1406.1" y2="673.9" stroke="#b4b4f4" stroke-width="0.7"/><polygon points="1297.7,353.4 1311.5,349.0 1314.2,357.9 1300.4,362.2" fill="none" stroke="#b4b4f4" stroke-width="0.9"/><polygon points="1423.7,323.7 1425.7,323.1 1502.3,649.0 1500.6,649.4" fill="#8c8ac8" stroke="none" stroke-width="1"/><line x1="1411.4" y1="327.5" x2="1490.2" y2="652.1" stroke="#b4b4f4" stroke-width="1"/><line x1="1425.7" y1="323.1" x2="1502.3" y2="649.0" stroke="#b4b4f4" stroke-width="1"/><line x1="1423.7" y1="323.7" x2="1500.6" y2="649.4" stroke="#b4b4f4" stroke-width="0.7"/><polygon points="1409.2,318.3 1423.5,313.8 1425.7,323.1 1411.4,327.5" fill="none" stroke="#b4b4f4" stroke-width="0.9"/><polygon points="767.8,610.7 1542.7,379.4 1543.2,382.1 769.2,612.7" fill="#8c8ac8" stroke="none" stroke-width="1"/><line x1="767.8" y1="610.7" x2="1542.7" y2="379.4" stroke="#b4b4f4" stroke-width="1"/><line x1="775.5" y1="622.2" x2="1545.4" y2="394.3" stroke="#b4b4f4" stroke-width="1"/><line x1="769.2" y1="612.7" x2="1543.2" y2="382.1" stroke="#b4b4f4" stroke-width="0.7"/><polygon points="815.5,682.3 1559.3,471.2 1559.8,473.6 816.7,684.2" fill="#8c8ac8" stroke="none" stroke-width="1"/><line x1="815.5" y1="682.3" x2="1559.3" y2="471.2" stroke="#b4b4f4" stroke-width="1"/><line x1="822.5" y1="692.9" x2="1561.8" y2="484.7" stroke="#b4b4f4" stroke-width="1"/><line x1="816.7" y1="684.2" x2="1559.8" y2="473.6" stroke="#b4b4f4" stroke-width="0.7"/><polygon points="859.2,748.1 1574.4,554.6 1574.8,556.8 860.4,749.8" fill="#8c8ac8" stroke="none" stroke-width="1"/><line x1="859.2" y1="748.1" x2="1574.4" y2="554.6" stroke="#b4b4f4" stroke-width="1"/><line x1="865.7" y1="757.9" x2="1576.6" y2="566.9" stroke="#b4b4f4" stroke-width="1"/><line x1="860.4" y1="749.8" x2="1574.8" y2="556.8" stroke="#b4b4f4" stroke-width="0.7"/><polygon points="719.5,543.8 722.7,542.8 897.6,805.7 894.8,806.4" fill="#8c8ac8" stroke="none" stroke-width="1"/><line x1="719.5" y1="543.8" x2="894.8" y2="806.4" stroke="#b4b4f4" stroke-width="0.8"/><polygon points="897.6,805.7 1587.5,626.9 1588.0,629.8 899.1,808.0" fill="#8c8ac8" stroke="none" stroke-width="1"/><line x1="899.1" y1="808.0" x2="1588.0" y2="629.8" stroke="#b4b4f4" stroke-width="0.8"/><polygon points="1526.8,291.5 1529.2,290.7 1589.5,626.4 1587.5,626.9" fill="#8c8ac8" stroke="none" stroke-width="1"/><polygon points="722.7,542.8 1526.8,291.5 1587.5,626.9 897.6,805.7" fill="none" stroke="#b4b4f4" stroke-width="1"/><line x1="702.1" y1="538.9" x2="1536.0" y2="276.8" stroke="#b4b4f4" stroke-width="1.2"/><line x1="703.5" y1="541.0" x2="1536.5" y2="279.5" stroke="#8a88c0" stroke-width="1"/></svg>
<div class="t" style="left:586px;top:141.87px;font-size:10.7px;color:#e8eaf0;">Perspektive</div>
<div class="t" style="left:636px;top:173.37px;font-size:10.7px;color:#e6ee28;">Total</div>
<div class="t" style="left:596px;top:189.02px;font-size:10.7px;color:#e6ee28;">Polys:</div>
<div class="t" style="left:636px;top:189.02px;font-size:10.7px;color:#e6ee28;">6.416</div>
<div class="t" style="left:596px;top:205.22px;font-size:10.7px;color:#e6ee28;">Verts:</div>
<div class="t" style="left:636px;top:205.22px;font-size:10.7px;color:#e6ee28;">3.272</div>
<div class="t" style="left:596px;top:237.12px;font-size:10.7px;color:#e6ee28;">FPS:</div>
<div class="t" style="left:636px;top:237.12px;font-size:10.7px;color:#e6ee28;">41,565</div>
<div style="position:absolute;left:1738px;top:141px;width:29px;height:24px;background:#c0c3cf;border-top:1px solid #f0f2f8;border-left:1px solid #f0f2f8;border-right:1px solid #6a6e78;border-radius:3px 3px 0 0;"></div>
<div style="position:absolute;left:1767.5px;top:139px;width:29px;height:27px;background:#c5c8d4;border:1px solid #fafbff;border-right:1px solid #50545e;border-bottom:none;border-radius:3px 3px 0 0;"></div>
<div style="position:absolute;left:1797px;top:141px;width:29px;height:24px;background:#c0c3cf;border-top:1px solid #f0f2f8;border-left:1px solid #f0f2f8;border-right:1px solid #6a6e78;border-radius:3px 3px 0 0;"></div>
<div style="position:absolute;left:1826px;top:141px;width:29px;height:24px;background:#c0c3cf;border-top:1px solid #f0f2f8;border-left:1px solid #f0f2f8;border-right:1px solid #6a6e78;border-radius:3px 3px 0 0;"></div>
<div style="position:absolute;left:1855px;top:141px;width:29px;height:24px;background:#c0c3cf;border-top:1px solid #f0f2f8;border-left:1px solid #f0f2f8;border-right:1px solid #6a6e78;border-radius:3px 3px 0 0;"></div>
<div style="position:absolute;left:1884px;top:141px;width:29px;height:24px;background:#c0c3cf;border-top:1px solid #f0f2f8;border-left:1px solid #f0f2f8;border-right:1px solid #6a6e78;border-radius:3px 3px 0 0;"></div>
<div style="position:absolute;left:1738px;top:164px;width:29px;height:1px;background:#f4f5f8;"></div>
<div style="position:absolute;left:1797px;top:164px;width:121px;height:1px;background:#f4f5f8;"></div>
<svg style="position:absolute;left:1736px;top:136px" width="184" height="34"><defs><linearGradient id="pipe" x1="0" y1="1" x2="1" y2="0"><stop offset="0" stop-color="#101830"/><stop offset="0.45" stop-color="#5a6ab0"/><stop offset="0.7" stop-color="#c0c8f0"/><stop offset="1" stop-color="#2a3060"/></linearGradient><linearGradient id="hmr" x1="0" y1="0" x2="1" y2="0"><stop offset="0" stop-color="#801010"/><stop offset="0.5" stop-color="#e86050"/><stop offset="1" stop-color="#601010"/></linearGradient><radialGradient id="spk" cx="0.5" cy="0.5" r="0.5"><stop offset="0" stop-color="#fff"/><stop offset="1" stop-color="#f0e8a0" stop-opacity="0"/></radialGradient></defs><circle cx="14" cy="12" r="6" fill="url(#spk)"/><path d="M14,6 l1.2,4.8 4.8,1.2 -4.8,1.2 -1.2,4.8 -1.2,-4.8 -4.8,-1.2 4.8,-1.2 z" fill="#fffce0" stroke="#e8dc80" stroke-width="0.4"/><path d="M15.5,13 L26,22.5 L22,23 L24.5,27 L22.5,28 L20,24 L17.5,26.5 z" fill="#fff" stroke="#222" stroke-width="0.9"/><path d="M42.5,7.5 h17 v17 M42.5,7.5 v17 h17" fill="none" stroke="#444" stroke-dasharray="1,1.6" stroke-width="0.7"/><circle cx="42.5" cy="7.5" r="0.9" fill="#111"/><circle cx="59.5" cy="24.5" r="0.9" fill="#111"/><path d="M46,24 C46,15 50,10 58,9" stroke="url(#pipe)" stroke-width="6" fill="none" stroke-linecap="butt"/><path d="M48.5,24 C48.5,16 52,12.5 58,11.5" stroke="#b8c4f0" stroke-width="0.8" fill="none"/><rect x="72" y="6.5" width="6.5" height="6.5" fill="#fff" stroke="#333"/><path d="M75.25,13 v4 M75.25,17 l-6,3.5 M75.25,17 v3.5 M75.25,17 l6,3.5" stroke="#333" fill="none"/><rect x="65.5" y="20.5" width="4.5" height="4" fill="#fff" stroke="#333"/><rect x="73" y="20.5" width="4.5" height="4" fill="#fff" stroke="#333"/><rect x="80.5" y="20.5" width="4.5" height="4" fill="#fff" stroke="#333"/><circle cx="104" cy="16.5" r="7.5" fill="#f4f4f4" stroke="#222" stroke-width="2"/><circle cx="104" cy="16.5" r="5" fill="none" stroke="#555" stroke-width="0.7"/><path d="M104,11.5 v10 M99,16.5 h10 M100.5,13 l7,7 M107.5,13 l-7,7" stroke="#d02020" stroke-width="0.9"/><path d="M95,11 q-2.5,5.5 0,11 M93,12 q-2,4.5 0,9 M91.5,13 q-1.5,3.5 0,7" stroke="#555" fill="none" stroke-width="0.6"/><rect x="123.5" y="7.5" width="19" height="14" rx="1.5" fill="#111"/><rect x="125.5" y="9.5" width="15" height="10" fill="#fff"/><rect x="127.5" y="11" width="3.5" height="7" fill="#5060c8"/><polygon points="131,18 135,10 139,18" fill="#d82020"/><rect x="130" y="21.5" width="6" height="2" fill="#222"/><rect x="126" y="23.5" width="14" height="1.8" fill="#444"/><rect x="132" y="23.5" width="3" height="1.8" fill="#6c6"/><path d="M151,9.5 q3,-3.5 9,-3 l9,1.2 l-0.5,4 l-8,-1 q-5,0 -9.5,-1.2 z" fill="#4a4a50" stroke="#111" stroke-width="0.7"/><rect x="160" y="9" width="4.5" height="17" fill="url(#hmr)"/><rect x="160" y="22" width="4.5" height="4.5" fill="#1a1a1a"/></svg>
<div style="position:absolute;left:1744px;top:173px;width:148px;height:19px;background:#fff;border-top:2px solid #101010;border-left:2px solid #101010;border-right:1px solid #e8eaf0;border-bottom:1px solid #e8eaf0;"></div>
<div style="position:absolute;left:1894px;top:170px;width:17px;height:20px;background:#f9a030;border:1px solid #e8eaf0;border-top:1px solid #fff;"></div>
<div style="position:absolute;left:1745px;top:196px;width:166px;height:22px;background:#fff;border-top:2px solid #101010;border-left:2px solid #101010;border-right:1px solid #e8eaf0;border-bottom:1px solid #e8eaf0;"></div>
<div style="position:absolute;left:1894px;top:198px;width:16px;height:19px;background:#c5c8d4;border:1px solid #f4f5f8;border-right:1px solid #6e727c;border-bottom:1px solid #6e727c;"></div>
<svg style="position:absolute;left:1898px;top:204px" width="9" height="6"><polygon points="0,0 9,0 4.5,5" fill="#000"/></svg>
<div class="t" style="left:1750px;top:201.52px;font-size:10.7px;color:#000;">Modifikatoren-Liste</div>
<div style="position:absolute;left:1748px;top:226px;width:80px;height:20px;background:#c5c8d4;border:1px solid #f4f5f8;border-right:1px solid #6e727c;border-bottom:1px solid #6e727c;overflow:hidden;"></div>
<div style="position:absolute;left:1829px;top:226px;width:85px;height:20px;background:#c5c8d4;border:1px solid #f4f5f8;border-right:1px solid #6e727c;border-bottom:1px solid #6e727c;"></div>
<div class="t" style="left:1748px;top:230.62px;width:80px;text-align:center;font-size:10.7px;color:#555;">Pfadverformg.</div>
<div class="t" style="left:1829px;top:230.62px;width:85px;text-align:center;font-size:10.7px;color:#555;">Oberflverformg.</div>
<div style="position:absolute;left:1748px;top:249px;width:80px;height:20px;background:#c5c8d4;border:1px solid #f4f5f8;border-right:1px solid #6e727c;border-bottom:1px solid #6e727c;overflow:hidden;"></div>
<div style="position:absolute;left:1829px;top:249px;width:85px;height:20px;background:#c5c8d4;border:1px solid #f4f5f8;border-right:1px solid #6e727c;border-bottom:1px solid #6e727c;"></div>
<div class="t" style="left:1749px;top:253.6px;width:78px;overflow:hidden;font-size:10.7px;color:#555">air and Fur (WKM</div>
<div class="t" style="left:1829px;top:253.62px;width:85px;text-align:center;font-size:10.7px;color:#555;">3D-Versch.</div>
<div style="position:absolute;left:1748px;top:271px;width:80px;height:20px;background:#c5c8d4;border:1px solid #f4f5f8;border-right:1px solid #6e727c;border-bottom:1px solid #6e727c;overflow:hidden;"></div>
<div style="position:absolute;left:1829px;top:271px;width:85px;height:20px;background:#c5c8d4;border:1px solid #f4f5f8;border-right:1px solid #6e727c;border-bottom:1px solid #6e727c;"></div>
<div class="t" style="left:1748px;top:275.62px;width:80px;text-align:center;font-size:10.7px;color:#555;">HSDS</div>
<div class="t" style="left:1829px;top:275.62px;width:85px;text-align:center;font-size:10.7px;color:#555;">MultiRes</div>
<div style="position:absolute;left:1748px;top:294px;width:80px;height:20px;background:#c5c8d4;border:1px solid #f4f5f8;border-right:1px solid #6e727c;border-bottom:1px solid #6e727c;overflow:hidden;"></div>
<div style="position:absolute;left:1829px;top:294px;width:85px;height:20px;background:#c5c8d4;border:1px solid #f4f5f8;border-right:1px solid #6e727c;border-bottom:1px solid #6e727c;"></div>
<div class="t" style="left:1748px;top:298.62px;width:80px;text-align:center;font-size:10.7px;color:#555;">Hülle</div>
<div class="t" style="left:1829px;top:298.62px;width:85px;text-align:center;font-size:10.7px;color:#555;">Symmetrie</div>
<div style="position:absolute;left:1748px;top:317px;width:80px;height:20px;background:#c5c8d4;border:1px solid #f4f5f8;border-right:1px solid #6e727c;border-bottom:1px solid #6e727c;overflow:hidden;"></div>
<div style="position:absolute;left:1829px;top:317px;width:85px;height:20px;background:#c5c8d4;border:1px solid #f4f5f8;border-right:1px solid #6e727c;border-bottom:1px solid #6e727c;"></div>
<div class="t" style="left:1748px;top:321.62px;width:80px;text-align:center;font-size:10.7px;color:#555;">Normale</div>
<div class="t" style="left:1829px;top:321.62px;width:85px;text-align:center;font-size:10.7px;color:#555;">Löcher verschl.</div>
<div style="position:absolute;left:1748px;top:340px;width:80px;height:20px;background:#c5c8d4;border:1px solid #f4f5f8;border-right:1px solid #6e727c;border-bottom:1px solid #6e727c;overflow:hidden;"></div>
<div style="position:absolute;left:1829px;top:340px;width:85px;height:20px;background:#c5c8d4;border:1px solid #f4f5f8;border-right:1px solid #6e727c;border-bottom:1px solid #6e727c;"></div>
<div class="t" style="left:1748px;top:344.62px;width:80px;text-align:center;font-size:10.7px;color:#555;">Schnitt</div>
<div class="t" style="left:1829px;top:344.62px;width:85px;text-align:center;font-size:10.7px;color:#555;">Spiegeln</div>
<div style="position:absolute;left:1748px;top:362px;width:80px;height:20px;background:#c5c8d4;border:1px solid #f4f5f8;border-right:1px solid #6e727c;border-bottom:1px solid #6e727c;overflow:hidden;"></div>
<div style="position:absolute;left:1829px;top:362px;width:85px;height:20px;background:#c5c8d4;border:1px solid #f4f5f8;border-right:1px solid #6e727c;border-bottom:1px solid #6e727c;"></div>
<div class="t" style="left:1748px;top:366.62px;width:80px;text-align:center;font-size:10.7px;color:#555;">TurboSmooth</div>
<div class="t" style="left:1829px;top:366.62px;width:85px;text-align:center;font-size:10.7px;color:#555;">Glatt</div>
<div style="position:absolute;left:1748px;top:387px;width:80px;height:20px;background:#c5c8d4;border:1px solid #f4f5f8;border-right:1px solid #6e727c;border-bottom:1px solid #6e727c;overflow:hidden;"></div>
<div style="position:absolute;left:1829px;top:387px;width:85px;height:20px;background:#c5c8d4;border:1px solid #f4f5f8;border-right:1px solid #6e727c;border-bottom:1px solid #6e727c;"></div>
<div class="t" style="left:1748px;top:391.62px;width:80px;text-align:center;font-size:10.7px;color:#555;">Sweep</div>
<div class="t" style="left:1829px;top:391.62px;width:85px;text-align:center;font-size:10.7px;color:#555;">Greeble</div>
<div style="position:absolute;left:1748px;top:411px;width:80px;height:20px;background:#c5c8d4;border:1px solid #f4f5f8;border-right:1px solid #6e727c;border-bottom:1px solid #6e727c;overflow:hidden;"></div>
<div style="position:absolute;left:1829px;top:411px;width:85px;height:20px;background:#c5c8d4;border:1px solid #f4f5f8;border-right:1px solid #6e727c;border-bottom:1px solid #6e727c;"></div>
<div class="t" style="left:1748px;top:415.62px;width:80px;text-align:center;font-size:10.7px;color:#555;">EdgeChEx</div>
<div class="t" style="left:1829px;top:415.62px;width:85px;text-align:center;font-size:10.7px;color:#555;">Facettieren</div>
<div style="position:absolute;left:1748px;top:434px;width:80px;height:20px;background:#c5c8d4;border:1px solid #f4f5f8;border-right:1px solid #6e727c;border-bottom:1px solid #6e727c;overflow:hidden;"></div>
<div style="position:absolute;left:1829px;top:434px;width:85px;height:20px;background:#c5c8d4;border:1px solid #f4f5f8;border-right:1px solid #6e727c;border-bottom:1px solid #6e727c;"></div>
<div class="t" style="left:1748px;top:438.62px;width:80px;text-align:center;font-size:10.7px;color:#555;">Abschrägung</div>
<div class="t" style="left:1829px;top:438.62px;width:85px;text-align:center;font-size:10.7px;color:#555;">Abschr.profil</div>
<div style="position:absolute;left:1748px;top:457px;width:80px;height:20px;background:#c5c8d4;border:1px solid #f4f5f8;border-right:1px solid #6e727c;border-bottom:1px solid #6e727c;overflow:hidden;"></div>
<div style="position:absolute;left:1829px;top:457px;width:85px;height:20px;background:#c5c8d4;border:1px solid #f4f5f8;border-right:1px solid #6e727c;border-bottom:1px solid #6e727c;"></div>
<div class="t" style="left:1748px;top:461.62px;width:80px;text-align:center;font-size:10.7px;color:#555;">Extrudieren</div>
<div class="t" style="left:1829px;top:461.62px;width:85px;text-align:center;font-size:10.7px;color:#555;">Drehverfahren</div>
<div style="position:absolute;left:1748px;top:480px;width:80px;height:20px;background:#c5c8d4;border:1px solid #f4f5f8;border-right:1px solid #6e727c;border-bottom:1px solid #6e727c;overflow:hidden;"></div>
<div style="position:absolute;left:1829px;top:480px;width:85px;height:20px;background:#c5c8d4;border:1px solid #f4f5f8;border-right:1px solid #6e727c;border-bottom:1px solid #6e727c;"></div>
<div class="t" style="left:1748px;top:484.62px;width:80px;text-align:center;font-size:10.7px;color:#555;">Spline norm.</div>
<div class="t" style="left:1829px;top:484.62px;width:85px;text-align:center;font-size:10.7px;color:#555;">Spline bearbeiten</div>
<div style="position:absolute;left:1748px;top:502px;width:80px;height:20px;background:#c5c8d4;border:1px solid #f4f5f8;border-right:1px solid #6e727c;border-bottom:1px solid #6e727c;overflow:hidden;"></div>
<div style="position:absolute;left:1829px;top:502px;width:85px;height:20px;background:#c5c8d4;border:1px solid #f4f5f8;border-right:1px solid #6e727c;border-bottom:1px solid #6e727c;"></div>
<div class="t" style="left:1748px;top:506.62px;width:80px;text-align:center;font-size:10.7px;color:#555;">Netz bearb.</div>
<div class="t" style="left:1829px;top:506.62px;width:85px;text-align:center;font-size:10.7px;color:#555;">Poly bearbeiten</div>
<div style="position:absolute;left:1748px;top:525px;width:80px;height:20px;background:#c5c8d4;border:1px solid #f4f5f8;border-right:1px solid #6e727c;border-bottom:1px solid #6e727c;overflow:hidden;"></div>
<div style="position:absolute;left:1829px;top:525px;width:85px;height:20px;background:#c5c8d4;border:1px solid #f4f5f8;border-right:1px solid #6e727c;border-bottom:1px solid #6e727c;"></div>
<div class="t" style="left:1748px;top:529.62px;width:80px;text-align:center;font-size:10.7px;color:#555;">UVW-Map</div>
<div class="t" style="left:1829px;top:529.62px;width:85px;text-align:center;font-size:10.7px;color:#555;">Patch bearbeiten</div>
<div style="position:absolute;left:1746px;top:553px;width:164px;height:109px;background:#fff;border:1px solid #70747e;border-right:1px solid #f0f2f6;border-bottom:1px solid #f0f2f6;"></div>
<svg style="position:absolute;left:1740px;top:660px" width="180" height="40"><path d="M12,18 h8" stroke="#888" stroke-width="2"/><rect x="19" y="13" width="8" height="10" fill="#c0c0c8" stroke="#777"/><rect x="27" y="12" width="2" height="12" fill="#888"/><rect x="38" y="10" width="1" height="15" fill="#777"/><rect x="39" y="10" width="1" height="15" fill="#fff"/><rect x="44.5" y="6.5" width="23" height="23" fill="#c5c8d4" stroke="#7a7e88"/><rect x="45" y="29" width="23" height="1" fill="#eef"/><path d="M55,25 v-9 q0,-3 -3,-4 M59,25 v-9 q0,-3 3,-4" stroke="#f4f4f8" stroke-width="1.4" fill="none"/><path d="M54,25 v-9 M60,25 v-9" stroke="#888" stroke-width="0.6"/><rect x="74" y="10" width="1" height="15" fill="#777"/><rect x="75" y="10" width="1" height="15" fill="#fff"/><path d="M85,11 l7,9 l7,-9" stroke="#888" fill="none"/><circle cx="92" cy="21" r="2.5" fill="#fff" stroke="#888"/><ellipse cx="116" cy="19" rx="5" ry="6" fill="none" stroke="#999" stroke-width="1.3"/><path d="M111,17 h10" stroke="#999"/><path d="M114,13 q2,-3 4,0" stroke="#999" fill="none"/><rect x="134" y="10" width="1" height="15" fill="#777"/><rect x="135" y="10" width="1" height="15" fill="#fff"/><rect x="144" y="11" width="15" height="14" fill="#fff" stroke="#1a1a80" stroke-width="1.6"/><rect x="144" y="11" width="15" height="3" fill="#1a1a80"/><path d="M147,18 h3 M152,18 h4 M147,22 h3 M152,22 h4" stroke="#333" stroke-width="2" stroke-dasharray="1,1"/></svg>
<div style="position:absolute;left:1741px;top:697px;width:175px;height:1px;background:#f0f2f6;"></div>
<div style="position:absolute;left:1741px;top:700px;width:175px;height:2px;background:#1a1a1a;"></div>
<div style="position:absolute;left:1740px;top:710px;width:176px;height:284px;border:1px solid #70747e;border-right:1px solid #f4f5f8;border-bottom:1px solid #f4f5f8;"></div>
<div style="position:absolute;left:1737px;top:998.5px;width:182px;height:1.2px;background:#5a5e68;"></div>
<div style="position:absolute;left:0px;top:955px;width:16px;height:17px;background:#c5c8d4;border:1px solid #f4f5f8;border-right:1px solid #6e727c;border-bottom:1px solid #6e727c;"></div>
<svg style="position:absolute;left:4px;top:958px" width="8" height="11"><path d="M6,1 L2,5.5 L6,10" stroke="#000" stroke-width="1.2" fill="none"/></svg>
<div style="position:absolute;left:16px;top:955px;width:125px;height:17px;background:#c8cbd6;border:1px solid #f4f5f8;border-bottom:2px solid #101010;border-right:2px solid #101010;"></div>
<div class="t" style="left:16px;top:957.97px;width:125px;text-align:center;font-size:11.2px;color:#000;transform:scaleY(1.15);">0 / 100</div>
<div style="position:absolute;left:141px;top:955px;width:16px;height:17px;background:#c5c8d4;border:1px solid #f4f5f8;border-right:1px solid #6e727c;border-bottom:1px solid #6e727c;"></div>
<svg style="position:absolute;left:145px;top:958px" width="8" height="11"><path d="M2,1 L6,5.5 L2,10" stroke="#000" stroke-width="1.2" fill="none"/></svg>
<div style="position:absolute;left:50px;top:974px;width:1636px;height:26px;background:#c3c4c8;"></div>
<div style="position:absolute;left:50px;top:974px;width:1686px;height:1.2px;background:#6a6e78;"></div>
<div style="position:absolute;left:0px;top:973px;width:1740px;height:1px;background:#eef0f4;"></div>
<svg style="position:absolute;left:13px;top:978px" width="18" height="18"><rect x="0.5" y="0.5" width="16" height="5" fill="none" stroke="#111" stroke-width="1.2"/><path d="M2,3 q3,-2 6,0 q3,2 7,0" stroke="#111" fill="none" stroke-width="0.8"/><rect x="0.5" y="13" width="16" height="3.5" fill="none" stroke="#111" stroke-width="1.2"/><path d="M4,12 v-5 M2,9 l2,-2 2,2 M12,7 v5 M10,10 l2,2 2,-2" stroke="#111" stroke-width="1.1" fill="none"/></svg>
<svg style="position:absolute;left:0;top:974px" width="1740" height="26"><rect x="56.8" y="1" width="1.2" height="25" fill="#7a7a80"/><rect x="73.0" y="1" width="1.2" height="11" fill="#7a7a80"/><rect x="89.2" y="1" width="1.2" height="11" fill="#7a7a80"/><rect x="105.5" y="1" width="1.2" height="11" fill="#7a7a80"/><rect x="121.7" y="1" width="1.2" height="11" fill="#7a7a80"/><rect x="137.9" y="1" width="1.2" height="25" fill="#7a7a80"/><rect x="154.1" y="1" width="1.2" height="11" fill="#7a7a80"/><rect x="170.3" y="1" width="1.2" height="11" fill="#7a7a80"/><rect x="186.6" y="1" width="1.2" height="11" fill="#7a7a80"/><rect x="202.8" y="1" width="1.2" height="11" fill="#7a7a80"/><rect x="219.0" y="1" width="1.2" height="25" fill="#7a7a80"/><rect x="235.2" y="1" width="1.2" height="11" fill="#7a7a80"/><rect x="251.5" y="1" width="1.2" height="11" fill="#7a7a80"/><rect x="267.7" y="1" width="1.2" height="11" fill="#7a7a80"/><rect x="283.9" y="1" width="1.2" height="11" fill="#7a7a80"/><rect x="300.1" y="1" width="1.2" height="25" fill="#7a7a80"/><rect x="316.3" y="1" width="1.2" height="11" fill="#7a7a80"/><rect x="332.6" y="1" width="1.2" height="11" fill="#7a7a80"/><rect x="348.8" y="1" width="1.2" height="11" fill="#7a7a80"/><rect x="365.0" y="1" width="1.2" height="11" fill="#7a7a80"/><rect x="381.2" y="1" width="1.2" height="25" fill="#7a7a80"/><rect x="397.4" y="1" width="1.2" height="11" fill="#7a7a80"/><rect x="413.7" y="1" width="1.2" height="11" fill="#7a7a80"/><rect x="429.9" y="1" width="1.2" height="11" fill="#7a7a80"/><rect x="446.1" y="1" width="1.2" height="11" fill="#7a7a80"/><rect x="462.3" y="1" width="1.2" height="25" fill="#7a7a80"/><rect x="478.5" y="1" width="1.2" height="11" fill="#7a7a80"/><rect x="494.8" y="1" width="1.2" height="11" fill="#7a7a80"/><rect x="511.0" y="1" width="1.2" height="11" fill="#7a7a80"/><rect x="527.2" y="1" width="1.2" height="11" fill="#7a7a80"/><rect x="543.4" y="1" width="1.2" height="25" fill="#7a7a80"/><rect x="559.7" y="1" width="1.2" height="11" fill="#7a7a80"/><rect x="575.9" y="1" width="1.2" height="11" fill="#7a7a80"/><rect x="592.1" y="1" width="1.2" height="11" fill="#7a7a80"/><rect x="608.3" y="1" width="1.2" height="11" fill="#7a7a80"/><rect x="624.5" y="1" width="1.2" height="25" fill="#7a7a80"/><rect x="640.8" y="1" width="1.2" height="11" fill="#7a7a80"/><rect x="657.0" y="1" width="1.2" height="11" fill="#7a7a80"/><rect x="673.2" y="1" width="1.2" height="11" fill="#7a7a80"/><rect x="689.4" y="1" width="1.2" height="11" fill="#7a7a80"/><rect x="705.6" y="1" width="1.2" height="25" fill="#7a7a80"/><rect x="721.9" y="1" width="1.2" height="11" fill="#7a7a80"/><rect x="738.1" y="1" width="1.2" height="11" fill="#7a7a80"/><rect x="754.3" y="1" width="1.2" height="11" fill="#7a7a80"/><rect x="770.5" y="1" width="1.2" height="11" fill="#7a7a80"/><rect x="786.7" y="1" width="1.2" height="25" fill="#7a7a80"/><rect x="803.0" y="1" width="1.2" height="11" fill="#7a7a80"/><rect x="819.2" y="1" width="1.2" height="11" fill="#7a7a80"/><rect x="835.4" y="1" width="1.2" height="11" fill="#7a7a80"/><rect x="851.6" y="1" width="1.2" height="11" fill="#7a7a80"/><rect x="867.8" y="1" width="1.2" height="25" fill="#7a7a80"/><rect x="884.1" y="1" width="1.2" height="11" fill="#7a7a80"/><rect x="900.3" y="1" width="1.2" height="11" fill="#7a7a80"/><rect x="916.5" y="1" width="1.2" height="11" fill="#7a7a80"/><rect x="932.7" y="1" width="1.2" height="11" fill="#7a7a80"/><rect x="949.0" y="1" width="1.2" height="25" fill="#7a7a80"/><rect x="965.2" y="1" width="1.2" height="11" fill="#7a7a80"/><rect x="981.4" y="1" width="1.2" height="11" fill="#7a7a80"/><rect x="997.6" y="1" width="1.2" height="11" fill="#7a7a80"/><rect x="1013.8" y="1" width="1.2" height="11" fill="#7a7a80"/><rect x="1030.1" y="1" width="1.2" height="25" fill="#7a7a80"/><rect x="1046.3" y="1" width="1.2" height="11" fill="#7a7a80"/><rect x="1062.5" y="1" width="1.2" height="11" fill="#7a7a80"/><rect x="1078.7" y="1" width="1.2" height="11" fill="#7a7a80"/><rect x="1094.9" y="1" width="1.2" height="11" fill="#7a7a80"/><rect x="1111.2" y="1" width="1.2" height="25" fill="#7a7a80"/><rect x="1127.4" y="1" width="1.2" height="11" fill="#7a7a80"/><rect x="1143.6" y="1" width="1.2" height="11" fill="#7a7a80"/><rect x="1159.8" y="1" width="1.2" height="11" fill="#7a7a80"/><rect x="1176.0" y="1" width="1.2" height="11" fill="#7a7a80"/><rect x="1192.3" y="1" width="1.2" height="25" fill="#7a7a80"/><rect x="1208.5" y="1" width="1.2" height="11" fill="#7a7a80"/><rect x="1224.7" y="1" width="1.2" height="11" fill="#7a7a80"/><rect x="1240.9" y="1" width="1.2" height="11" fill="#7a7a80"/><rect x="1257.2" y="1" width="1.2" height="11" fill="#7a7a80"/><rect x="1273.4" y="1" width="1.2" height="25" fill="#7a7a80"/><rect x="1289.6" y="1" width="1.2" height="11" fill="#7a7a80"/><rect x="1305.8" y="1" width="1.2" height="11" fill="#7a7a80"/><rect x="1322.0" y="1" width="1.2" height="11" fill="#7a7a80"/><rect x="1338.3" y="1" width="1.2" height="11" fill="#7a7a80"/><rect x="1354.5" y="1" width="1.2" height="25" fill="#7a7a80"/><rect x="1370.7" y="1" width="1.2" height="11" fill="#7a7a80"/><rect x="1386.9" y="1" width="1.2" height="11" fill="#7a7a80"/><rect x="1403.1" y="1" width="1.2" height="11" fill="#7a7a80"/><rect x="1419.4" y="1" width="1.2" height="11" fill="#7a7a80"/><rect x="1435.6" y="1" width="1.2" height="25" fill="#7a7a80"/><rect x="1451.8" y="1" width="1.2" height="11" fill="#7a7a80"/><rect x="1468.0" y="1" width="1.2" height="11" fill="#7a7a80"/><rect x="1484.2" y="1" width="1.2" height="11" fill="#7a7a80"/><rect x="1500.5" y="1" width="1.2" height="11" fill="#7a7a80"/><rect x="1516.7" y="1" width="1.2" height="25" fill="#7a7a80"/><rect x="1532.9" y="1" width="1.2" height="11" fill="#7a7a80"/><rect x="1549.1" y="1" width="1.2" height="11" fill="#7a7a80"/><rect x="1565.4" y="1" width="1.2" height="11" fill="#7a7a80"/><rect x="1581.6" y="1" width="1.2" height="11" fill="#7a7a80"/><rect x="1597.8" y="1" width="1.2" height="25" fill="#7a7a80"/><rect x="1614.0" y="1" width="1.2" height="11" fill="#7a7a80"/><rect x="1630.2" y="1" width="1.2" height="11" fill="#7a7a80"/><rect x="1646.5" y="1" width="1.2" height="11" fill="#7a7a80"/><rect x="1662.7" y="1" width="1.2" height="11" fill="#7a7a80"/><rect x="1678.9" y="1" width="1.2" height="25" fill="#7a7a80"/><rect x="53.5" y="1.5" width="7" height="24" fill="#a8c0dc" stroke="#6a8ab0"/></svg>
<div class="t" style="left:37.3px;top:986.77px;width:40px;text-align:center;font-size:11.2px;color:#2a3a6a;transform:scaleY(1.22);">0</div>
<div class="t" style="left:118.4px;top:986.77px;width:40px;text-align:center;font-size:11.2px;color:#000;transform:scaleY(1.22);">5</div>
<div class="t" style="left:199.5px;top:986.77px;width:40px;text-align:center;font-size:11.2px;color:#000;transform:scaleY(1.22);">10</div>
<div class="t" style="left:280.6px;top:986.77px;width:40px;text-align:center;font-size:11.2px;color:#000;transform:scaleY(1.22);">15</div>
<div class="t" style="left:361.7px;top:986.77px;width:40px;text-align:center;font-size:11.2px;color:#000;transform:scaleY(1.22);">20</div>
<div class="t" style="left:442.8px;top:986.77px;width:40px;text-align:center;font-size:11.2px;color:#000;transform:scaleY(1.22);">25</div>
<div class="t" style="left:523.9px;top:986.77px;width:40px;text-align:center;font-size:11.2px;color:#000;transform:scaleY(1.22);">30</div>
<div class="t" style="left:605.0px;top:986.77px;width:40px;text-align:center;font-size:11.2px;color:#000;transform:scaleY(1.22);">35</div>
<div class="t" style="left:686.1px;top:986.77px;width:40px;text-align:center;font-size:11.2px;color:#000;transform:scaleY(1.22);">40</div>
<div class="t" style="left:767.2px;top:986.77px;width:40px;text-align:center;font-size:11.2px;color:#000;transform:scaleY(1.22);">45</div>
<div class="t" style="left:848.3px;top:986.77px;width:40px;text-align:center;font-size:11.2px;color:#000;transform:scaleY(1.22);">50</div>
<div class="t" style="left:929.5px;top:986.77px;width:40px;text-align:center;font-size:11.2px;color:#000;transform:scaleY(1.22);">55</div>
<div class="t" style="left:1010.6px;top:986.77px;width:40px;text-align:center;font-size:11.2px;color:#000;transform:scaleY(1.22);">60</div>
<div class="t" style="left:1091.7px;top:986.77px;width:40px;text-align:center;font-size:11.2px;color:#000;transform:scaleY(1.22);">65</div>
<div class="t" style="left:1172.8px;top:986.77px;width:40px;text-align:center;font-size:11.2px;color:#000;transform:scaleY(1.22);">70</div>
<div class="t" style="left:1253.9px;top:986.77px;width:40px;text-align:center;font-size:11.2px;color:#000;transform:scaleY(1.22);">75</div>
<div class="t" style="left:1335.0px;top:986.77px;width:40px;text-align:center;font-size:11.2px;color:#000;transform:scaleY(1.22);">80</div>
<div class="t" style="left:1416.1px;top:986.77px;width:40px;text-align:center;font-size:11.2px;color:#000;transform:scaleY(1.22);">85</div>
<div class="t" style="left:1497.2px;top:986.77px;width:40px;text-align:center;font-size:11.2px;color:#000;transform:scaleY(1.22);">90</div>
<div class="t" style="left:1578.3px;top:986.77px;width:40px;text-align:center;font-size:11.2px;color:#000;transform:scaleY(1.22);">95</div>
<div class="t" style="left:1659.4px;top:986.77px;width:40px;text-align:center;font-size:11.2px;color:#000;transform:scaleY(1.22);">100</div>
<div style="position:absolute;left:2px;top:1003px;width:96px;height:21px;background:#e2c8c8;border:1px solid #8a8e98;border-right:1px solid #f4f5f8;border-bottom:1px solid #f4f5f8;"></div><div style="position:absolute;left:2px;top:1026px;width:96px;height:22px;background:#fff;border:1px solid #d8dae0;border-top:1px solid #8a8e98;"></div><div style="position:absolute;left:14.5px;top:1028.65px;font-size:15.6px;color:#000;white-space:pre;line-height:1;">AXScript.</div><div style="position:absolute;left:102px;top:1002px;width:1px;height:48px;background:#8a8e98;"></div><div style="position:absolute;left:103px;top:1002px;width:1px;height:48px;background:#f0f0f4;"></div><div style="position:absolute;left:107px;top:1004px;width:969px;height:21px;border:1px solid #8a8e98;border-right:1px solid #f4f5f8;border-bottom:1px solid #f4f5f8;"></div><div style="position:absolute;left:113px;top:1009.32px;font-size:10.7px;color:#000;white-space:pre;line-height:1;">Nichts ausgewählt</div><div style="position:absolute;left:107px;top:1029px;width:1244px;height:21px;border:1px solid #8a8e98;border-right:1px solid #f4f5f8;border-bottom:1px solid #f4f5f8;"></div><div style="position:absolute;left:113px;top:1034.32px;font-size:10.7px;color:#000;white-space:pre;line-height:1;">Klicken oder klicken und ziehen, um Objekte auszuwählen</div><svg style="position:absolute;left:1081px;top:1003px" width="20" height="20"><rect x="4" y="9" width="9" height="7" fill="#9a9ca4"/><path d="M5.5 9 v-3 a3 3 0 0 1 6 0 v3" stroke="#9a9ca4" stroke-width="1.5" fill="none"/><rect x="4" y="12" width="9" height="1" fill="#c8c8d0"/></svg><div style="position:absolute;left:1107px;top:1005px;width:17px;height:16px;border:1px solid #202020;border-right:1px solid #fff;border-bottom:1px solid #fff;"></div><svg style="position:absolute;left:1107px;top:1005px" width="17" height="16"><path d="M8.5,2 v12 M2,8 h13" stroke="#222"/><circle cx="8.5" cy="8" r="2.5" fill="#fff" stroke="#222"/><circle cx="8.5" cy="8" r="1" fill="#222"/></svg><div style="position:absolute;left:1130px;top:1009.22px;font-size:11.5px;color:#000;white-space:pre;line-height:1;">X:</div><div style="position:absolute;left:1141px;top:1005px;width:57px;height:20px;background:#fff;border-top:2px solid #151515;border-left:2px solid #151515;border-right:1px solid #eef;border-bottom:1px solid #eef;"></div><div style="position:absolute;left:1145px;top:1009.62px;font-size:10.7px;color:#555;white-space:pre;line-height:1;">-51,96m</div><div style="position:absolute;left:1212px;top:1009.22px;font-size:11.5px;color:#000;white-space:pre;line-height:1;">Y:</div><div style="position:absolute;left:1223px;top:1005px;width:57px;height:20px;background:#fff;border-top:2px solid #151515;border-left:2px solid #151515;border-right:1px solid #eef;border-bottom:1px solid #eef;"></div><div style="position:absolute;left:1227px;top:1009.62px;font-size:10.7px;color:#555;white-space:pre;line-height:1;">32,771m</div><div style="position:absolute;left:1295px;top:1009.22px;font-size:11.5px;color:#000;white-space:pre;line-height:1;">Z:</div><div style="position:absolute;left:1306px;top:1005px;width:56px;height:20px;background:#fff;border-top:2px solid #151515;border-left:2px solid #151515;border-right:1px solid #eef;border-bottom:1px solid #eef;"></div><div style="position:absolute;left:1310px;top:1009.62px;font-size:10.7px;color:#555;white-space:pre;line-height:1;">0,0m</div><div style="position:absolute;left:1377px;top:1004px;width:99px;height:21px;border:1px solid #8a8e98;border-right:1px solid #f4f5f8;border-bottom:1px solid #f4f5f8;"></div><div style="position:absolute;left:1383px;top:1009.02px;font-size:10.7px;color:#000;white-space:pre;line-height:1;">Raster = 10,0m</div><div style="position:absolute;left:1354px;top:1027px;width:20px;height:22px;border:1px solid #8a8e98;border-right:1px solid #f4f5f8;border-bottom:1px solid #f4f5f8;"></div><svg style="position:absolute;left:1356px;top:1029px" width="16" height="18"><path d="M2,6 l6,-3 l6,3 v7 l-6,3 l-6,-3 z M2,6 l6,3 l6,-3 M8,9 v7" stroke="#222" fill="#fff" stroke-width="1"/></svg><div style="position:absolute;left:1377px;top:1029px;width:99px;height:19px;border:1px solid #8a8e98;border-right:1px solid #f4f5f8;border-bottom:1px solid #f4f5f8;"></div><div style="position:absolute;left:1383px;top:1034.12px;font-size:10.7px;color:#000;white-space:pre;line-height:1;">Zeitmark. hinzuf.</div><div style="position:absolute;left:1479px;top:1004px;width:43px;height:43px;border:1px solid #f4f5f8;border-right:1px solid #6e727c;border-bottom:1px solid #6e727c;"></div><svg style="position:absolute;left:1486px;top:1017px" width="30" height="18"><ellipse cx="6.5" cy="8" rx="5" ry="5.5" stroke="#000" stroke-width="2.6" fill="none"/><rect x="11" y="6" width="16" height="4" fill="#000"/><rect x="19" y="9" width="3" height="5" fill="#000"/><rect x="24" y="9" width="3" height="4" fill="#000"/></svg><div style="position:absolute;left:1525px;top:1004px;width:47px;height:21px;border:1px solid #f4f5f8;border-right:1px solid #6e727c;border-bottom:1px solid #6e727c;"></div><div style="position:absolute;left:1527px;top:1009.02px;font-size:10.7px;color:#000;white-space:pre;line-height:1;">Auto-Key</div><div style="position:absolute;left:1525px;top:1027px;width:47px;height:21px;border:1px solid #f4f5f8;border-right:1px solid #6e727c;border-bottom:1px solid #6e727c;"></div><div style="position:absolute;left:1526px;top:1030.92px;font-size:10.7px;color:#000;white-space:pre;line-height:1;">Key einst.</div><div style="position:absolute;left:1576px;top:1003px;width:114px;height:20px;background:#fff;border-top:2px solid #151515;border-left:2px solid #151515;border-right:1px solid #eef;border-bottom:1px solid #eef;"></div><div style="position:absolute;left:1580px;top:1008.17px;font-size:11px;color:#000;white-space:pre;line-height:1;">Auswahl</div><div style="position:absolute;left:1672px;top:1005px;width:17px;height:17px;background:#c5c8d4;border:1px solid #f4f5f8;border-right:1px solid #6e727c;border-bottom:1px solid #6e727c;"></div><svg style="position:absolute;left:1676px;top:1011px" width="9" height="5"><polygon points="0,0 9,0 4.5,5" fill="#000"/></svg><svg style="position:absolute;left:1580px;top:1028px" width="20" height="20"><path d="M1,15 C4,15 5,10 7,6 C9,2 10,3 12,3 C14,3 15,5 16,5" stroke="#c03030" stroke-width="1.3" fill="none"/><path d="M1,14 h14" stroke="#6060c0" stroke-dasharray="1,1"/><polygon points="18,19 15,19 18,16" fill="#111"/></svg><div style="position:absolute;left:1603px;top:1027px;width:88px;height:21px;border:1px solid #f4f5f8;border-right:1px solid #6e727c;border-bottom:1px solid #6e727c;"></div><div style="position:absolute;left:1621px;top:1030.62px;font-size:10.7px;color:#000;white-space:pre;line-height:1;">Key-Filter...</div><div style="position:absolute;left:1723px;top:1027px;width:63px;height:20px;background:#fff;border-top:2px solid #151515;border-left:2px solid #151515;border-right:1px solid #eef;border-bottom:1px solid #eef;"></div><div style="position:absolute;left:1728px;top:1030.62px;font-size:10.7px;color:#000;white-space:pre;line-height:1;">0</div><svg style="position:absolute;left:1786px;top:1027px" width="12" height="20"><polygon points="3,7 9,7 6,3" fill="#222"/><polygon points="3,12 9,12 6,16" fill="#222"/><rect x="1" y="9.5" width="10" height="1" fill="#888"/></svg><svg style="position:absolute;left:1695px;top:1000px" width="225" height="50"><rect x="6" y="8" width="2" height="10" fill="#111"/><polygon points="8,13 13,8 13,18" fill="#111"/><polygon points="13,13 18,8 18,18" fill="#111"/><rect x="18" y="8" width="2" height="10" fill="#111"/><rect x="26" y="5" width="1" height="16" fill="#777"/><rect x="27" y="5" width="1" height="16" fill="#fff"/><polygon points="33,13 38,8 38,18" fill="#111"/><rect x="39" y="8" width="2" height="10" fill="#111"/><rect x="42" y="8" width="2" height="10" fill="#111"/><rect x="54.5" y="3.5" width="17" height="18" fill="#e8e8ee" stroke="#111" stroke-width="2"/><polygon points="59,8 67,13 59,18" fill="#111"/><polygon points="74,23 71,23 74,20" fill="#111"/><rect x="80" y="8" width="2" height="10" fill="#111"/><rect x="83" y="8" width="2" height="10" fill="#111"/><polygon points="86,8 91,13 86,18" fill="#111"/><rect x="97" y="5" width="1" height="16" fill="#777"/><rect x="98" y="5" width="1" height="16" fill="#fff"/><polygon points="102,8 107,13 102,18" fill="#111"/><polygon points="107,8 112,13 107,18" fill="#111"/><rect x="112" y="8" width="2" height="10" fill="#111"/><rect x="126" y="5" width="1" height="16" fill="#777"/><rect x="127" y="5" width="1" height="16" fill="#fff"/><circle cx="138" cy="11" r="5" fill="#b8d0f0" stroke="#2a3a8a" stroke-width="1.6"/><path d="M141,15 l5,5" stroke="#2a3a8a" stroke-width="2.5"/><rect x="159.5" y="4.5" width="14" height="11" fill="none" stroke="#c03030"/><path d="M166,5 v11 M160,10 h13" stroke="#c03030"/><circle cx="161" cy="16" r="4" fill="#b8d0f0" stroke="#2a3a8a" stroke-width="1.4"/><rect x="180.5" y="6.5" width="12" height="12" fill="#fff" stroke="#2a3a8a" stroke-width="1.4"/><path d="M180,7 l4,-3 h12 v12 l-4,3 M192,7 l4,-3" stroke="#2a3a8a" fill="none"/><path d="M178,4 v4 M178,4 h4" stroke="#2a3a8a"/><rect x="205.5" y="3.5" width="12" height="10" fill="none" stroke="#c03030"/><path d="M211,4 v10 M206,9 h11" stroke="#c03030"/><rect x="199.5" y="9.5" width="9" height="9" fill="#fff" stroke="#2a3a8a" stroke-width="1.3"/><rect x="6" y="32" width="2" height="8" fill="#111"/><polygon points="8,36 12,32 12,40" fill="#111"/><polygon points="14,36 18,32 18,40" fill="#111"/><rect x="18" y="32" width="2" height="8" fill="#111"/><rect x="106.5" y="28.5" width="12" height="11" fill="#fff" stroke="#333"/><circle cx="118" cy="38" r="5" fill="#fff" stroke="#c03030" stroke-width="1.3"/><path d="M118,35 v3 h3" stroke="#c03030"/><rect x="126" y="28" width="1" height="16" fill="#777"/><rect x="127" y="28" width="1" height="16" fill="#fff"/><polygon points="131,28 148,36 131,44" fill="#c8c8cc" stroke="#111" stroke-width="1.6"/><polygon points="152,46 149,46 152,43" fill="#111"/><path d="M157,37 c-1,-4 0,-7 2,-5 v-4 c0,-2 3,-2 3,0 v-2 c0,-2 3,-2 3,0 v1 c0,-2 3,-2 3,0 v2 c0,-2 3,-1 3,1 v6 c0,4 -3,7 -7,7 h-2 c-3,0 -4,-2 -5,-6 z" fill="#eee" stroke="#111" stroke-width="1.2"/><ellipse cx="186" cy="37" rx="7" ry="4" fill="none" stroke="#111" stroke-width="1.3"/><path d="M186,27 v14 M178,37 h16" stroke="#111"/><polygon points="197,46 194,46 197,43" fill="#111"/><rect x="199.5" y="27.5" width="15" height="15" fill="none" stroke="#2a3a8a" stroke-width="1.4"/><path d="M203,31 l8,8 M203,31 h4 M203,31 v4" stroke="#2a3a8a" stroke-width="1.3"/><rect x="207.5" y="34.5" width="9" height="9" fill="none" stroke="#2a3a8a"/></svg><div style="position:absolute;left:0px;top:1050px;width:1920px;height:30px;background:linear-gradient(180deg,#1e2836 0px,#1e2836 1px,#b4c0cc 1.5px,#b4c0cc 2px,#5a6a80 3px,#7a90a8 6px,#8ca6c2 10px,#8fa9c4 100%);"></div><div style="position:absolute;left:142px;top:1051px;width:95px;height:28px;background:linear-gradient(180deg,rgba(255,255,255,0.42),rgba(255,255,255,0.18) 50%,rgba(255,255,255,0.08));border:1px solid rgba(30,40,60,0.55);border-radius:3px;box-shadow:inset 0 0 0 1px rgba(255,255,255,0.35);"></div><div style="position:absolute;left:168px;top:1058.61px;font-size:12.2px;color:#fff;white-space:pre;line-height:1;text-shadow:0 0 2px rgba(0,0,0,0.3);">Could Thi...</div><div style="position:absolute;left:279.5px;top:1051px;width:95px;height:28px;background:linear-gradient(180deg,rgba(255,255,255,0.42),rgba(255,255,255,0.18) 50%,rgba(255,255,255,0.08));border:1px solid rgba(30,40,60,0.55);border-radius:3px;box-shadow:inset 0 0 0 1px rgba(255,255,255,0.35);"></div><div style="position:absolute;left:306px;top:1058.61px;font-size:12.2px;color:#fff;white-space:pre;line-height:1;text-shadow:0 0 2px rgba(0,0,0,0.3);">Adobe Ph...</div><div style="position:absolute;left:377.5px;top:1051px;width:95px;height:28px;background:linear-gradient(180deg,rgba(255,255,255,0.42),rgba(255,255,255,0.18) 50%,rgba(255,255,255,0.08));border:1px solid rgba(30,40,60,0.55);border-radius:3px;box-shadow:inset 0 0 0 1px rgba(255,255,255,0.35);"></div><div style="position:absolute;left:404px;top:1058.61px;font-size:12.2px;color:#fff;white-space:pre;line-height:1;text-shadow:0 0 2px rgba(0,0,0,0.3);">S:\Videos...</div><div style="position:absolute;left:472.5px;top:1051px;width:97px;height:28px;background:linear-gradient(180deg,rgba(255,255,255,0.42),rgba(255,255,255,0.18) 50%,rgba(255,255,255,0.08));border:1px solid rgba(30,40,60,0.55);border-radius:3px;box-shadow:inset 0 0 0 1px rgba(255,255,255,0.35);"></div><div style="position:absolute;left:500px;top:1058.61px;font-size:12.2px;color:#fff;white-space:pre;line-height:1;text-shadow:0 0 2px rgba(0,0,0,0.3);">I:\3D Mes...</div><div style="position:absolute;left:569.5px;top:1051px;width:96.5px;height:28px;background:linear-gradient(180deg,rgba(255,255,255,0.42),rgba(255,255,255,0.18) 50%,rgba(255,255,255,0.08));border:1px solid rgba(30,40,60,0.55);border-radius:3px;box-shadow:inset 0 0 0 1px rgba(255,255,255,0.35);"></div><div style="position:absolute;left:597px;top:1058.61px;font-size:12.2px;color:#fff;white-space:pre;line-height:1;text-shadow:0 0 2px rgba(0,0,0,0.3);">C:\</div><div style="position:absolute;left:666px;top:1051px;width:94px;height:28px;background:linear-gradient(180deg,rgba(255,255,255,0.42),rgba(255,255,255,0.18) 50%,rgba(255,255,255,0.08));border:1px solid rgba(30,40,60,0.55);border-radius:3px;box-shadow:inset 0 0 0 1px rgba(255,255,255,0.35);"></div><div style="position:absolute;left:692px;top:1058.61px;font-size:12.2px;color:#fff;white-space:pre;line-height:1;text-shadow:0 0 2px rgba(0,0,0,0.3);">U:\</div><div style="position:absolute;left:764.5px;top:1051px;width:95px;height:28px;background:linear-gradient(180deg,rgba(255,255,255,0.6),rgba(255,255,255,0.3) 50%,rgba(255,255,255,0.2));border:1px solid rgba(30,40,60,0.6);border-radius:3px;box-shadow:inset 0 0 0 1px rgba(255,255,255,0.5);"></div><div style="position:absolute;left:791px;top:1058.61px;font-size:12.2px;color:#fff;white-space:pre;line-height:1;text-shadow:0 0 2px rgba(0,0,0,0.3);">Wartungs...</div><svg style="position:absolute;left:0;top:1040px" width="1920" height="40"><defs><radialGradient id="orb" cx="0.5" cy="0.35" r="0.6"><stop offset="0" stop-color="#8ad0f8"/><stop offset="0.6" stop-color="#1a5a9a"/><stop offset="1" stop-color="#0a2a50"/></radialGradient><radialGradient id="ffx" cx="0.5" cy="0.5" r="0.5"><stop offset="0" stop-color="#ffd040"/><stop offset="1" stop-color="#e04010"/></radialGradient><linearGradient id="fld" x1="0" y1="0" x2="1" y2="0"><stop offset="0" stop-color="#f8e070"/><stop offset="1" stop-color="#c89a20"/></linearGradient></defs><circle cx="27" cy="23.5" r="17.5" fill="url(#orb)" stroke="#2a4a70" stroke-width="1"/><path d="M19,17 q4,-3 7,0 v6 q-3,-3 -7,0 z" fill="#f06a30"/><path d="M27,17 q4,-3 8,0 v6 q-4,-3 -8,0 z" fill="#70c040"/><path d="M19,24 q4,-3 7,0 v6 q-3,-3 -7,0 z" fill="#30a0e8"/><path d="M27,24 q4,-3 8,0 v6 q-4,-3 -8,0 z" fill="#f8c830"/><circle cx="78" cy="22" r="6" fill="#f0f0f0" stroke="#c04040" stroke-width="1.5"/><path d="M78,22 l3,-3" stroke="#444"/><circle cx="81" cy="30" r="2.5" fill="#4a80c0"/><text x="110" y="31" font-size="20" font-style="italic" font-weight="bold" font-family="Liberation Serif" fill="#2a8ad8">e</text><ellipse cx="120" cy="23" rx="10" ry="4" fill="none" stroke="#e8c020" stroke-width="1.4" transform="rotate(-25 120 23)"/><circle cx="155.5" cy="25" r="9" fill="url(#ffx)"/><circle cx="157" cy="25" r="5" fill="#5a3ab0"/><rect x="249" y="17" width="17" height="13" fill="#dde8f0" stroke="#5a7080"/><rect x="252" y="21" width="11" height="6" fill="#6a8090"/><rect x="287" y="16" width="18" height="18" fill="#1a4a90" stroke="#0a2a60"/><text x="289" y="30" font-size="11" font-weight="bold" font-family="Liberation Sans" fill="#8ad0ff">Ps</text><rect x="384" y="16" width="12" height="20" fill="url(#fld)" rx="1"/><rect x="388" y="18" width="6" height="18" fill="#e8c040" opacity="0.7"/><rect x="481" y="16" width="12" height="20" fill="url(#fld)" rx="1"/><rect x="485" y="18" width="6" height="18" fill="#e8c040" opacity="0.7"/><rect x="577" y="16" width="10" height="20" fill="url(#fld)"/><rect x="581" y="23" width="12" height="10" fill="#3070c0" stroke="#223"/><circle cx="681" cy="25" r="8" fill="#5a7aa0" stroke="#223" stroke-width="1.5"/><circle cx="682" cy="26" r="4" fill="#f0a020"/><polygon points="680,22 686,26 680,30" fill="#111"/><rect x="771" y="15" width="17" height="19" fill="#f0f4f0"/><text x="772" y="27" font-size="12" font-weight="bold" font-family="Liberation Sans" fill="#1a6a60">M</text><text x="771" y="34" font-size="7" font-weight="bold" font-family="Liberation Sans" fill="#111">3DS</text><rect x="1459" y="13" width="168" height="25" rx="3" fill="#3a4a5c" stroke="#1a2a3a" opacity="0.75"/><rect x="1465" y="19" width="11" height="11" fill="#f0a030" stroke="#5aa0d0"/><polygon points="1468,21 1474,24.5 1468,28" fill="#fff"/><rect x="1483" y="17" width="90" height="18" rx="9" fill="#5a6a7c" stroke="#8a9aac"/><rect x="1494" y="20" width="7" height="7" fill="#e8e8e8"/><path d="M1514,20 v8 M1522,20 l-6,4 6,4 z" stroke="#eee" fill="#eee"/><circle cx="1542" cy="25" r="10" fill="#2a60c0" stroke="#a0c8f8" stroke-width="1.5"/><rect x="1538" y="20" width="3" height="10" fill="#fff"/><rect x="1543" y="20" width="3" height="10" fill="#fff"/><path d="M1562,20 l6,4 -6,4 z M1569,20 v8" stroke="#eee" fill="#eee"/><path d="M1583,22 h3 l4,-3 v12 l-4,-3 h-3 z" fill="#ddd"/><polygon points="1596,23 1602,23 1599,27" fill="#eee"/><path d="M1617,17 l3,-3 3,3 M1617,19 l3,3 3,-3" stroke="#eee" fill="none"/><rect x="1615" y="30" width="7" height="6" fill="none" stroke="#eee"/><rect x="1638" y="28.0" width="2" height="3.0" fill="#f4f4f4"/><rect x="1641" y="25.5" width="2" height="5.5" fill="#f4f4f4"/><rect x="1644" y="23.0" width="2" height="8.0" fill="#f4f4f4"/><rect x="1647" y="20.5" width="2" height="10.5" fill="#f4f4f4"/><rect x="1650" y="18.0" width="2" height="13.0" fill="#f4f4f4"/><polygon points="1662,31 1672,18 1676,31" fill="#e02020"/><polygon points="1670,31 1674,24 1678,31" fill="#30d040"/><path d="M1688,33 v-16" stroke="#fff" stroke-width="1.4"/><path d="M1689,17 h8 l-2,4 h5 l-2,5 h-10 z" fill="#f4f4f4" stroke="#555" stroke-width="0.6"/><rect x="1710" y="16" width="16" height="17" fill="#1a2a1a" stroke="#334"/><ellipse cx="1718" cy="25" rx="5" ry="3.5" fill="none" stroke="#70c020" stroke-width="1.8"/><rect x="1734" y="16" width="16" height="9" fill="#30b0b0" stroke="#223"/><ellipse cx="1745" cy="29" rx="4" ry="5" fill="#eee" stroke="#555"/><rect x="1759" y="19" width="8" height="13" fill="#aaa" stroke="#555"/><circle cx="1769" cy="30" r="5" fill="#30a030"/><path d="M1766,30 l2,2 4,-5" stroke="#fff" stroke-width="1.4" fill="none"/><path d="M1781,22 h3 l5,-5 v16 l-5,-5 h-3 z" fill="#eee" stroke="#666" stroke-width="0.6"/><path d="M1792,20 q3,5 0,10" stroke="#eee" fill="none"/><text x="1805" y="30" font-size="11" font-family="Liberation Sans" fill="#e8eef4">3,5</text><text x="1854" y="31" font-size="13" font-family="Liberation Sans" fill="#fff">23:01</text><rect x="1906" y="12" width="14" height="28" fill="#b8cce0" stroke="#7a8aa0" opacity="0.6"/></svg>
</body></html>
